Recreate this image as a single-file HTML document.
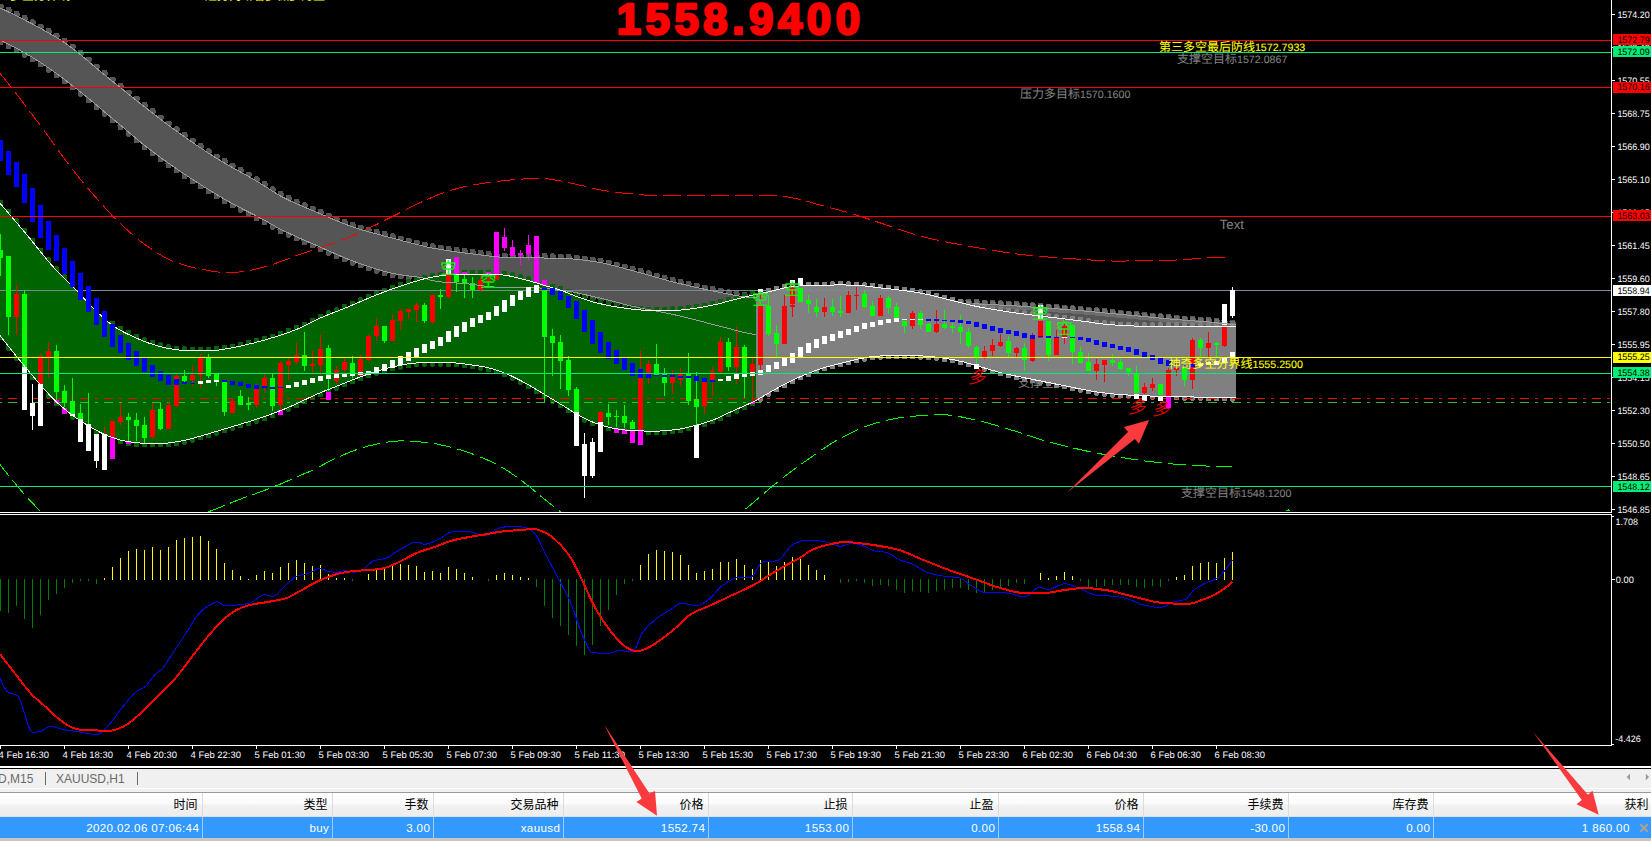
<!DOCTYPE html>
<html lang="zh"><head><meta charset="utf-8"><title>XAUUSD,M15</title>
<style>
html,body{margin:0;padding:0;background:#000;overflow:hidden;}
#root{position:relative;width:1651px;height:841px;overflow:hidden;background:#000;font-family:"Liberation Sans","Noto Sans CJK SC",sans-serif;}
svg.chart{position:absolute;left:0;top:0;display:block}
#tabs{position:absolute;left:0;top:769px;width:1651px;height:24px;background:#f0f0f0;border-bottom:1px solid #999;box-sizing:border-box;}
#tabs .hl{position:absolute;left:0;right:0;top:19px;height:1px;background:#fff}
#tabs span{position:absolute;top:2.5px;font-size:12px;color:#6a6a6a;white-space:nowrap;line-height:14px}
#tabs i{position:absolute;top:3px;width:1px;height:13px;background:#6a6a6a}
#hdr{position:absolute;left:0;top:793px;width:1651px;height:24px;box-sizing:border-box;border-bottom:1px solid #e0e0e0;background:linear-gradient(#ffffff 0%,#fbfbfb 45%,#f1f1f1 55%,#ededed 100%);}
.hc{position:absolute;top:0;height:23px;box-sizing:border-box;border-right:1px solid #dcdcdc;text-align:right;font-size:12px;line-height:24px;color:#000;padding-right:4.5px;white-space:nowrap}
.hc.last{border-right:none;padding-right:2.6px}
#row{position:absolute;left:0;top:817px;width:1651px;height:21px;background:#3399ff;}
.rc{position:absolute;top:0;height:21px;box-sizing:border-box;border-right:1px solid #9cccff;text-align:right;font-size:11.6px;letter-spacing:0.35px;line-height:21.5px;color:#fff;white-space:nowrap}
.rc.last{border-right:none}
#foot{position:absolute;left:0;top:838px;width:1651px;height:3px;background:#c9c6bd}
#arr{position:absolute;left:0;top:0;pointer-events:none}
</style></head><body>
<div id="root">
<svg class="chart" width="1651" height="769" viewBox="0 0 1651 769" shape-rendering="crispEdges">
<defs>
<clipPath id="cm"><rect x="0" y="0" width="1611" height="512"/></clipPath>
<clipPath id="ci"><rect x="0" y="515" width="1611" height="230"/></clipPath>
</defs>
<rect x="0" y="0" width="1651" height="769" fill="#000"/>
<g clip-path="url(#cm)">
<polygon points="0.0,8.0 2.0,8.9 4.0,9.8 6.0,10.8 8.0,11.7 10.0,12.7 12.0,13.6 14.0,14.6 16.0,15.6 18.0,16.6 20.0,17.6 22.0,18.6 24.0,19.6 26.0,20.7 28.0,21.7 30.0,22.8 32.0,23.8 34.0,24.9 36.0,25.9 38.0,27.0 40.0,28.1 42.0,29.2 44.0,30.3 46.0,31.4 48.0,32.5 50.0,33.7 52.0,34.8 54.0,36.0 56.0,37.2 58.0,38.5 60.0,39.7 62.0,41.0 64.0,42.3 66.0,43.7 68.0,45.1 70.0,46.5 72.0,48.0 74.0,49.6 76.0,51.1 78.0,52.7 80.0,54.4 82.0,56.0 84.0,57.7 86.0,59.4 88.0,61.1 90.0,62.8 92.0,64.5 94.0,66.2 96.0,67.8 98.0,69.5 100.0,71.2 102.0,72.8 104.0,74.4 106.0,76.0 108.0,77.7 110.0,79.3 112.0,80.9 114.0,82.5 116.0,84.1 118.0,85.7 120.0,87.3 122.0,88.9 124.0,90.5 126.0,92.2 128.0,93.8 130.0,95.4 132.0,96.9 134.0,98.5 136.0,100.1 138.0,101.7 140.0,103.3 142.0,104.8 144.0,106.4 146.0,108.0 148.0,109.5 150.0,111.1 152.0,112.6 154.0,114.2 156.0,115.7 158.0,117.3 160.0,118.8 162.0,120.3 164.0,121.9 166.0,123.4 168.0,124.9 170.0,126.3 172.0,127.8 174.0,129.3 176.0,130.7 178.0,132.2 180.0,133.6 182.0,135.0 184.0,136.4 186.0,137.9 188.0,139.3 190.0,140.7 192.0,142.0 194.0,143.4 196.0,144.8 198.0,146.1 200.0,147.5 202.0,148.8 204.0,150.2 206.0,151.5 208.0,152.8 210.0,154.1 212.0,155.4 214.0,156.6 216.0,157.9 218.0,159.1 220.0,160.3 222.0,161.5 224.0,162.7 226.0,163.9 228.0,165.0 230.0,166.2 232.0,167.3 234.0,168.4 236.0,169.5 238.0,170.6 240.0,171.7 242.0,172.8 244.0,173.9 246.0,175.0 248.0,176.1 250.0,177.3 252.0,178.4 254.0,179.6 256.0,180.8 258.0,182.0 260.0,183.2 262.0,184.4 264.0,185.7 266.0,186.9 268.0,188.2 270.0,189.5 272.0,190.8 274.0,192.1 276.0,193.4 278.0,194.6 280.0,195.7 282.0,196.8 284.0,197.8 286.0,198.8 288.0,199.8 290.0,200.7 292.0,201.7 294.0,202.6 296.0,203.5 298.0,204.4 300.0,205.2 302.0,206.1 304.0,206.9 306.0,207.8 308.0,208.6 310.0,209.5 312.0,210.3 314.0,211.1 316.0,212.0 318.0,212.8 320.0,213.6 322.0,214.5 324.0,215.4 326.0,216.2 328.0,217.1 330.0,217.9 332.0,218.8 334.0,219.6 336.0,220.4 338.0,221.2 340.0,222.1 342.0,222.9 344.0,223.6 346.0,224.4 348.0,225.2 350.0,225.9 352.0,226.6 354.0,227.3 356.0,228.0 358.0,228.6 360.0,229.2 362.0,229.9 364.0,230.4 366.0,231.0 368.0,231.6 370.0,232.2 372.0,232.7 374.0,233.3 376.0,233.8 378.0,234.3 380.0,234.8 382.0,235.4 384.0,235.9 386.0,236.4 388.0,236.9 390.0,237.4 392.0,238.0 394.0,238.5 396.0,239.0 398.0,239.5 400.0,240.1 402.0,240.6 404.0,241.2 406.0,241.7 408.0,242.2 410.0,242.8 412.0,243.3 414.0,243.8 416.0,244.3 418.0,244.8 420.0,245.3 422.0,245.8 424.0,246.3 426.0,246.7 428.0,247.2 430.0,247.6 432.0,248.0 434.0,248.3 436.0,248.7 438.0,249.0 440.0,249.4 442.0,249.7 444.0,250.1 446.0,250.4 448.0,250.7 450.0,251.0 452.0,251.3 454.0,251.6 456.0,251.9 458.0,252.1 460.0,252.4 462.0,252.7 464.0,252.9 466.0,253.2 468.0,253.4 470.0,253.7 472.0,253.9 474.0,254.2 476.0,254.4 478.0,254.7 480.0,254.9 482.0,255.2 484.0,255.4 486.0,255.7 488.0,255.9 490.0,256.1 492.0,256.4 494.0,256.6 496.0,256.8 498.0,256.9 500.0,257.1 502.0,257.2 504.0,257.3 506.0,257.4 508.0,257.5 510.0,257.5 512.0,257.6 514.0,257.6 516.0,257.6 518.0,257.7 520.0,257.7 522.0,257.7 524.0,257.7 526.0,257.8 528.0,257.8 530.0,257.8 532.0,257.8 534.0,257.8 536.0,257.8 538.0,257.9 540.0,257.9 542.0,257.9 544.0,258.0 546.0,258.0 548.0,258.0 550.0,258.1 552.0,258.1 554.0,258.2 556.0,258.2 558.0,258.3 560.0,258.4 562.0,258.4 564.0,258.5 566.0,258.6 568.0,258.7 570.0,258.8 572.0,258.9 574.0,259.1 576.0,259.2 578.0,259.4 580.0,259.6 582.0,259.9 584.0,260.1 586.0,260.4 588.0,260.7 590.0,261.0 592.0,261.3 594.0,261.6 596.0,261.9 598.0,262.2 600.0,262.5 602.0,262.9 604.0,263.3 606.0,263.7 608.0,264.2 610.0,264.7 612.0,265.2 614.0,265.7 616.0,266.2 618.0,266.7 620.0,267.3 622.0,267.8 624.0,268.4 626.0,268.9 628.0,269.5 630.0,270.1 632.0,270.6 634.0,271.1 636.0,271.7 638.0,272.2 640.0,272.7 642.0,273.3 644.0,273.8 646.0,274.4 648.0,275.0 650.0,275.6 652.0,276.1 654.0,276.7 656.0,277.3 658.0,277.8 660.0,278.4 662.0,279.0 664.0,279.5 666.0,280.1 668.0,280.6 670.0,281.2 672.0,281.7 674.0,282.2 676.0,282.7 678.0,283.2 680.0,283.7 682.0,284.1 684.0,284.6 686.0,285.1 688.0,285.6 690.0,286.0 692.0,286.5 694.0,286.9 696.0,287.4 698.0,287.8 700.0,288.3 702.0,288.7 704.0,289.1 706.0,289.5 708.0,290.0 710.0,290.4 712.0,290.8 714.0,291.2 716.0,291.6 718.0,292.0 720.0,292.4 722.0,292.8 724.0,293.2 726.0,293.6 728.0,294.0 730.0,294.4 732.0,294.8 734.0,295.2 736.0,295.5 738.0,295.9 740.0,296.2 742.0,296.5 744.0,296.7 746.0,297.0 748.0,297.2 750.0,297.4 752.0,297.5 754.0,297.7 756.0,297.9 758.0,298.0 760.0,298.1 762.0,298.3 764.0,298.4 766.0,298.5 768.0,298.6 770.0,298.8 772.0,298.9 774.0,299.0 776.0,299.1 778.0,299.2 780.0,299.3 782.0,299.3 784.0,299.4 786.0,299.5 788.0,299.6 790.0,299.7 792.0,299.7 794.0,299.8 796.0,299.9 798.0,299.9 800.0,300.0 802.0,300.1 804.0,300.1 806.0,300.2 808.0,300.2 810.0,300.3 812.0,300.3 814.0,300.4 816.0,300.4 818.0,300.5 820.0,300.5 822.0,300.6 824.0,300.6 826.0,300.7 828.0,300.7 830.0,300.7 832.0,300.8 834.0,300.8 836.0,300.9 838.0,300.9 840.0,300.9 842.0,301.0 844.0,301.0 846.0,301.0 848.0,301.1 850.0,301.1 852.0,301.1 854.0,301.2 856.0,301.2 858.0,301.2 860.0,301.3 862.0,301.3 864.0,301.3 866.0,301.4 868.0,301.4 870.0,301.4 872.0,301.5 874.0,301.5 876.0,301.5 878.0,301.6 880.0,301.6 882.0,301.6 884.0,301.7 886.0,301.7 888.0,301.8 890.0,301.8 892.0,301.8 894.0,301.9 896.0,301.9 898.0,302.0 900.0,302.0 902.0,302.0 904.0,302.1 906.0,302.1 908.0,302.2 910.0,302.2 912.0,302.3 914.0,302.3 916.0,302.3 918.0,302.4 920.0,302.4 922.0,302.5 924.0,302.5 926.0,302.6 928.0,302.6 930.0,302.6 932.0,302.7 934.0,302.7 936.0,302.8 938.0,302.8 940.0,302.9 942.0,302.9 944.0,303.0 946.0,303.0 948.0,303.1 950.0,303.1 952.0,303.2 954.0,303.2 956.0,303.3 958.0,303.3 960.0,303.4 962.0,303.4 964.0,303.5 966.0,303.6 968.0,303.6 970.0,303.7 972.0,303.8 974.0,303.8 976.0,303.9 978.0,304.0 980.0,304.1 982.0,304.1 984.0,304.2 986.0,304.3 988.0,304.4 990.0,304.5 992.0,304.6 994.0,304.7 996.0,304.8 998.0,304.9 1000.0,305.1 1002.0,305.2 1004.0,305.3 1006.0,305.4 1008.0,305.5 1010.0,305.6 1012.0,305.7 1014.0,305.9 1016.0,306.0 1018.0,306.1 1020.0,306.2 1022.0,306.4 1024.0,306.5 1026.0,306.6 1028.0,306.8 1030.0,306.9 1032.0,307.1 1034.0,307.2 1036.0,307.3 1038.0,307.5 1040.0,307.6 1042.0,307.8 1044.0,307.9 1046.0,308.1 1048.0,308.2 1050.0,308.4 1052.0,308.5 1054.0,308.7 1056.0,308.8 1058.0,309.0 1060.0,309.1 1062.0,309.3 1064.0,309.4 1066.0,309.6 1068.0,309.7 1070.0,309.9 1072.0,310.0 1074.0,310.2 1076.0,310.4 1078.0,310.5 1080.0,310.7 1082.0,310.8 1084.0,311.0 1086.0,311.2 1088.0,311.4 1090.0,311.5 1092.0,311.7 1094.0,311.9 1096.0,312.1 1098.0,312.3 1100.0,312.5 1102.0,312.7 1104.0,312.9 1106.0,313.1 1108.0,313.3 1110.0,313.4 1112.0,313.6 1114.0,313.8 1116.0,314.0 1118.0,314.2 1120.0,314.4 1122.0,314.6 1124.0,314.8 1126.0,314.9 1128.0,315.1 1130.0,315.3 1132.0,315.5 1134.0,315.6 1136.0,315.8 1138.0,316.0 1140.0,316.2 1142.0,316.4 1144.0,316.6 1146.0,316.7 1148.0,316.9 1150.0,317.1 1152.0,317.3 1154.0,317.5 1156.0,317.7 1158.0,317.9 1160.0,318.1 1162.0,318.2 1164.0,318.4 1166.0,318.6 1168.0,318.8 1170.0,319.0 1172.0,319.2 1174.0,319.3 1176.0,319.5 1178.0,319.7 1180.0,319.8 1182.0,320.0 1184.0,320.1 1186.0,320.3 1188.0,320.4 1190.0,320.6 1192.0,320.7 1194.0,320.9 1196.0,321.0 1198.0,321.2 1200.0,321.3 1202.0,321.5 1204.0,321.6 1206.0,321.8 1208.0,322.0 1210.0,322.1 1212.0,322.3 1214.0,322.5 1216.0,322.7 1218.0,322.9 1220.0,323.1 1222.0,323.3 1224.0,323.5 1226.0,323.8 1228.0,324.0 1230.0,324.3 1232.0,324.5 1234.0,324.7 1236.0,325.0 1236.0,356.0 1234.0,356.0 1232.0,355.9 1230.0,355.9 1228.0,355.8 1226.0,355.8 1224.0,355.7 1222.0,355.7 1220.0,355.6 1218.0,355.6 1216.0,355.5 1214.0,355.5 1212.0,355.4 1210.0,355.4 1208.0,355.3 1206.0,355.3 1204.0,355.2 1202.0,355.1 1200.0,355.1 1198.0,355.0 1196.0,355.0 1194.0,354.9 1192.0,354.9 1190.0,354.8 1188.0,354.8 1186.0,354.7 1184.0,354.6 1182.0,354.6 1180.0,354.5 1178.0,354.5 1176.0,354.4 1174.0,354.4 1172.0,354.3 1170.0,354.2 1168.0,354.2 1166.0,354.1 1164.0,354.1 1162.0,354.0 1160.0,353.9 1158.0,353.9 1156.0,353.8 1154.0,353.8 1152.0,353.7 1150.0,353.6 1148.0,353.6 1146.0,353.5 1144.0,353.4 1142.0,353.4 1140.0,353.3 1138.0,353.3 1136.0,353.2 1134.0,353.1 1132.0,353.1 1130.0,353.0 1128.0,352.9 1126.0,352.9 1124.0,352.8 1122.0,352.7 1120.0,352.7 1118.0,352.6 1116.0,352.5 1114.0,352.5 1112.0,352.4 1110.0,352.3 1108.0,352.3 1106.0,352.2 1104.0,352.1 1102.0,352.1 1100.0,352.0 1098.0,351.9 1096.0,351.9 1094.0,351.8 1092.0,351.7 1090.0,351.6 1088.0,351.6 1086.0,351.5 1084.0,351.4 1082.0,351.3 1080.0,351.3 1078.0,351.2 1076.0,351.1 1074.0,351.0 1072.0,350.9 1070.0,350.8 1068.0,350.8 1066.0,350.7 1064.0,350.6 1062.0,350.5 1060.0,350.4 1058.0,350.3 1056.0,350.3 1054.0,350.2 1052.0,350.1 1050.0,350.0 1048.0,349.9 1046.0,349.8 1044.0,349.7 1042.0,349.7 1040.0,349.6 1038.0,349.5 1036.0,349.4 1034.0,349.3 1032.0,349.2 1030.0,349.2 1028.0,349.1 1026.0,349.0 1024.0,348.9 1022.0,348.8 1020.0,348.7 1018.0,348.7 1016.0,348.6 1014.0,348.5 1012.0,348.4 1010.0,348.4 1008.0,348.3 1006.0,348.2 1004.0,348.1 1002.0,348.1 1000.0,348.0 998.0,347.9 996.0,347.9 994.0,347.8 992.0,347.7 990.0,347.7 988.0,347.6 986.0,347.5 984.0,347.5 982.0,347.4 980.0,347.4 978.0,347.3 976.0,347.3 974.0,347.2 972.0,347.1 970.0,347.1 968.0,347.0 966.0,347.0 964.0,346.9 962.0,346.9 960.0,346.8 958.0,346.8 956.0,346.7 954.0,346.6 952.0,346.6 950.0,346.5 948.0,346.5 946.0,346.4 944.0,346.4 942.0,346.3 940.0,346.3 938.0,346.2 936.0,346.2 934.0,346.1 932.0,346.0 930.0,346.0 928.0,345.9 926.0,345.9 924.0,345.8 922.0,345.7 920.0,345.7 918.0,345.6 916.0,345.6 914.0,345.5 912.0,345.4 910.0,345.4 908.0,345.3 906.0,345.2 904.0,345.1 902.0,345.1 900.0,345.0 898.0,344.9 896.0,344.8 894.0,344.8 892.0,344.7 890.0,344.6 888.0,344.5 886.0,344.5 884.0,344.4 882.0,344.3 880.0,344.2 878.0,344.2 876.0,344.1 874.0,344.0 872.0,343.9 870.0,343.8 868.0,343.8 866.0,343.7 864.0,343.6 862.0,343.5 860.0,343.4 858.0,343.3 856.0,343.2 854.0,343.1 852.0,343.1 850.0,343.0 848.0,342.9 846.0,342.8 844.0,342.7 842.0,342.6 840.0,342.5 838.0,342.4 836.0,342.3 834.0,342.2 832.0,342.1 830.0,341.9 828.0,341.8 826.0,341.7 824.0,341.6 822.0,341.5 820.0,341.4 818.0,341.2 816.0,341.1 814.0,341.0 812.0,340.8 810.0,340.7 808.0,340.6 806.0,340.4 804.0,340.3 802.0,340.1 800.0,340.0 798.0,339.8 796.0,339.7 794.0,339.5 792.0,339.3 790.0,339.1 788.0,338.9 786.0,338.7 784.0,338.5 782.0,338.3 780.0,338.1 778.0,337.8 776.0,337.6 774.0,337.3 772.0,337.1 770.0,336.8 768.0,336.5 766.0,336.2 764.0,335.9 762.0,335.6 760.0,335.3 758.0,335.0 756.0,334.7 754.0,334.4 752.0,334.0 750.0,333.6 748.0,333.2 746.0,332.8 744.0,332.4 742.0,331.9 740.0,331.4 738.0,330.9 736.0,330.4 734.0,329.9 732.0,329.4 730.0,328.8 728.0,328.3 726.0,327.8 724.0,327.2 722.0,326.7 720.0,326.2 718.0,325.7 716.0,325.2 714.0,324.6 712.0,324.2 710.0,323.7 708.0,323.2 706.0,322.7 704.0,322.1 702.0,321.6 700.0,321.1 698.0,320.6 696.0,320.1 694.0,319.6 692.0,319.0 690.0,318.5 688.0,318.0 686.0,317.5 684.0,317.0 682.0,316.5 680.0,316.1 678.0,315.6 676.0,315.1 674.0,314.7 672.0,314.2 670.0,313.8 668.0,313.4 666.0,313.0 664.0,312.6 662.0,312.2 660.0,311.8 658.0,311.4 656.0,311.1 654.0,310.7 652.0,310.3 650.0,309.9 648.0,309.5 646.0,309.2 644.0,308.8 642.0,308.4 640.0,307.9 638.0,307.5 636.0,307.1 634.0,306.6 632.0,306.2 630.0,305.7 628.0,305.2 626.0,304.7 624.0,304.2 622.0,303.6 620.0,303.1 618.0,302.6 616.0,302.1 614.0,301.5 612.0,301.0 610.0,300.5 608.0,300.0 606.0,299.5 604.0,299.0 602.0,298.5 600.0,298.1 598.0,297.6 596.0,297.2 594.0,296.7 592.0,296.2 590.0,295.8 588.0,295.3 586.0,294.9 584.0,294.4 582.0,294.0 580.0,293.5 578.0,293.1 576.0,292.7 574.0,292.3 572.0,291.9 570.0,291.5 568.0,291.2 566.0,290.8 564.0,290.5 562.0,290.2 560.0,290.0 558.0,289.8 556.0,289.5 554.0,289.3 552.0,289.1 550.0,288.9 548.0,288.7 546.0,288.5 544.0,288.3 542.0,288.2 540.0,288.0 538.0,287.9 536.0,287.7 534.0,287.6 532.0,287.6 530.0,287.5 528.0,287.5 526.0,287.4 524.0,287.4 522.0,287.4 520.0,287.3 518.0,287.3 516.0,287.3 514.0,287.3 512.0,287.3 510.0,287.2 508.0,287.2 506.0,287.2 504.0,287.2 502.0,287.1 500.0,287.1 498.0,287.1 496.0,287.0 494.0,287.0 492.0,286.9 490.0,286.7 488.0,286.5 486.0,286.2 484.0,286.0 482.0,285.7 480.0,285.4 478.0,285.1 476.0,284.8 474.0,284.5 472.0,284.3 470.0,284.1 468.0,283.9 466.0,283.7 464.0,283.6 462.0,283.4 460.0,283.3 458.0,283.2 456.0,283.0 454.0,282.9 452.0,282.8 450.0,282.7 448.0,282.5 446.0,282.4 444.0,282.2 442.0,282.0 440.0,281.8 438.0,281.6 436.0,281.3 434.0,280.9 432.0,280.4 430.0,279.9 428.0,279.3 426.0,278.7 424.0,278.3 422.0,277.9 420.0,277.6 418.0,277.2 416.0,276.9 414.0,276.6 412.0,276.4 410.0,276.1 408.0,275.8 406.0,275.6 404.0,275.3 402.0,275.0 400.0,274.7 398.0,274.3 396.0,274.0 394.0,273.6 392.0,273.2 390.0,272.7 388.0,272.2 386.0,271.7 384.0,271.2 382.0,270.6 380.0,270.1 378.0,269.5 376.0,268.9 374.0,268.3 372.0,267.6 370.0,267.0 368.0,266.3 366.0,265.6 364.0,264.9 362.0,264.3 360.0,263.6 358.0,262.9 356.0,262.2 354.0,261.4 352.0,260.7 350.0,259.9 348.0,259.2 346.0,258.4 344.0,257.5 342.0,256.7 340.0,255.8 338.0,255.0 336.0,254.1 334.0,253.2 332.0,252.3 330.0,251.4 328.0,250.5 326.0,249.6 324.0,248.8 322.0,247.9 320.0,247.0 318.0,246.1 316.0,245.2 314.0,244.4 312.0,243.5 310.0,242.6 308.0,241.8 306.0,240.9 304.0,240.0 302.0,239.2 300.0,238.3 298.0,237.4 296.0,236.5 294.0,235.6 292.0,234.7 290.0,233.7 288.0,232.8 286.0,231.9 284.0,230.9 282.0,229.9 280.0,228.9 278.0,227.9 276.0,226.8 274.0,225.6 272.0,224.5 270.0,223.4 268.0,222.2 266.0,221.1 264.0,220.1 262.0,219.0 260.0,217.9 258.0,216.9 256.0,215.9 254.0,214.8 252.0,213.8 250.0,212.8 248.0,211.8 246.0,210.7 244.0,209.7 242.0,208.7 240.0,207.6 238.0,206.6 236.0,205.5 234.0,204.5 232.0,203.4 230.0,202.3 228.0,201.1 226.0,200.0 224.0,198.8 222.0,197.7 220.0,196.5 218.0,195.3 216.0,194.1 214.0,192.9 212.0,191.7 210.0,190.5 208.0,189.2 206.0,188.0 204.0,186.8 202.0,185.5 200.0,184.2 198.0,182.9 196.0,181.7 194.0,180.4 192.0,179.1 190.0,177.8 188.0,176.5 186.0,175.1 184.0,173.8 182.0,172.5 180.0,171.1 178.0,169.8 176.0,168.4 174.0,167.0 172.0,165.6 170.0,164.2 168.0,162.8 166.0,161.4 164.0,160.0 162.0,158.6 160.0,157.1 158.0,155.6 156.0,154.2 154.0,152.7 152.0,151.1 150.0,149.6 148.0,148.1 146.0,146.5 144.0,144.9 142.0,143.3 140.0,141.6 138.0,140.0 136.0,138.3 134.0,136.6 132.0,135.0 130.0,133.3 128.0,131.6 126.0,129.9 124.0,128.2 122.0,126.5 120.0,124.8 118.0,123.1 116.0,121.5 114.0,119.8 112.0,118.2 110.0,116.5 108.0,114.8 106.0,113.1 104.0,111.5 102.0,109.8 100.0,108.1 98.0,106.4 96.0,104.7 94.0,103.0 92.0,101.4 90.0,99.7 88.0,98.0 86.0,96.4 84.0,94.8 82.0,93.1 80.0,91.6 78.0,90.0 76.0,88.4 74.0,86.9 72.0,85.3 70.0,83.8 68.0,82.3 66.0,80.7 64.0,79.2 62.0,77.7 60.0,76.2 58.0,74.7 56.0,73.2 54.0,71.8 52.0,70.3 50.0,68.9 48.0,67.5 46.0,66.1 44.0,64.8 42.0,63.5 40.0,62.2 38.0,60.9 36.0,59.7 34.0,58.4 32.0,57.2 30.0,56.0 28.0,54.8 26.0,53.7 24.0,52.5 22.0,51.4 20.0,50.2 18.0,49.1 16.0,48.0 14.0,47.0 12.0,45.9 10.0,44.9 8.0,43.9 6.0,42.9 4.0,41.9 2.0,40.9 0.0,40.0" fill="#555555"/><rect x="-2.5" y="3.5" width="6.0" height="6.0" rx="1.6" fill="#555555"/><rect x="5.5" y="7.2" width="6.0" height="6.0" rx="1.6" fill="#555555"/><rect x="13.5" y="11.1" width="6.0" height="6.0" rx="1.6" fill="#555555"/><rect x="21.5" y="15.2" width="6.0" height="6.0" rx="1.6" fill="#555555"/><rect x="29.5" y="19.4" width="6.0" height="6.0" rx="1.6" fill="#555555"/><rect x="37.5" y="23.7" width="6.0" height="6.0" rx="1.6" fill="#555555"/><rect x="45.5" y="28.1" width="6.0" height="6.0" rx="1.6" fill="#555555"/><rect x="53.5" y="32.9" width="6.0" height="6.0" rx="1.6" fill="#555555"/><rect x="61.5" y="38.0" width="6.0" height="6.0" rx="1.6" fill="#555555"/><rect x="69.5" y="43.7" width="6.0" height="6.0" rx="1.6" fill="#555555"/><rect x="77.5" y="50.1" width="6.0" height="6.0" rx="1.6" fill="#555555"/><rect x="85.5" y="56.8" width="6.0" height="6.0" rx="1.6" fill="#555555"/><rect x="93.5" y="63.6" width="6.0" height="6.0" rx="1.6" fill="#555555"/><rect x="101.5" y="70.1" width="6.0" height="6.0" rx="1.6" fill="#555555"/><rect x="109.5" y="76.6" width="6.0" height="6.0" rx="1.6" fill="#555555"/><rect x="117.5" y="83.0" width="6.0" height="6.0" rx="1.6" fill="#555555"/><rect x="125.5" y="89.5" width="6.0" height="6.0" rx="1.6" fill="#555555"/><rect x="133.5" y="95.8" width="6.0" height="6.0" rx="1.6" fill="#555555"/><rect x="141.5" y="102.1" width="6.0" height="6.0" rx="1.6" fill="#555555"/><rect x="149.5" y="108.3" width="6.0" height="6.0" rx="1.6" fill="#555555"/><rect x="157.5" y="114.5" width="6.0" height="6.0" rx="1.6" fill="#555555"/><rect x="165.5" y="120.5" width="6.0" height="6.0" rx="1.6" fill="#555555"/><rect x="173.5" y="126.4" width="6.0" height="6.0" rx="1.6" fill="#555555"/><rect x="181.5" y="132.1" width="6.0" height="6.0" rx="1.6" fill="#555555"/><rect x="189.5" y="137.7" width="6.0" height="6.0" rx="1.6" fill="#555555"/><rect x="197.5" y="143.1" width="6.0" height="6.0" rx="1.6" fill="#555555"/><rect x="205.5" y="148.4" width="6.0" height="6.0" rx="1.6" fill="#555555"/><rect x="213.5" y="153.5" width="6.0" height="6.0" rx="1.6" fill="#555555"/><rect x="221.5" y="158.3" width="6.0" height="6.0" rx="1.6" fill="#555555"/><rect x="229.5" y="162.9" width="6.0" height="6.0" rx="1.6" fill="#555555"/><rect x="237.5" y="167.3" width="6.0" height="6.0" rx="1.6" fill="#555555"/><rect x="245.5" y="171.7" width="6.0" height="6.0" rx="1.6" fill="#555555"/><rect x="253.5" y="176.4" width="6.0" height="6.0" rx="1.6" fill="#555555"/><rect x="261.5" y="181.3" width="6.0" height="6.0" rx="1.6" fill="#555555"/><rect x="269.5" y="186.4" width="6.0" height="6.0" rx="1.6" fill="#555555"/><rect x="277.5" y="191.3" width="6.0" height="6.0" rx="1.6" fill="#555555"/><rect x="285.5" y="195.3" width="6.0" height="6.0" rx="1.6" fill="#555555"/><rect x="293.5" y="199.0" width="6.0" height="6.0" rx="1.6" fill="#555555"/><rect x="301.5" y="202.4" width="6.0" height="6.0" rx="1.6" fill="#555555"/><rect x="309.5" y="205.8" width="6.0" height="6.0" rx="1.6" fill="#555555"/><rect x="317.5" y="209.2" width="6.0" height="6.0" rx="1.6" fill="#555555"/><rect x="325.5" y="212.6" width="6.0" height="6.0" rx="1.6" fill="#555555"/><rect x="333.5" y="215.9" width="6.0" height="6.0" rx="1.6" fill="#555555"/><rect x="341.5" y="219.1" width="6.0" height="6.0" rx="1.6" fill="#555555"/><rect x="349.5" y="222.1" width="6.0" height="6.0" rx="1.6" fill="#555555"/><rect x="357.5" y="224.7" width="6.0" height="6.0" rx="1.6" fill="#555555"/><rect x="365.5" y="227.0" width="6.0" height="6.0" rx="1.6" fill="#555555"/><rect x="373.5" y="229.2" width="6.0" height="6.0" rx="1.6" fill="#555555"/><rect x="381.5" y="231.3" width="6.0" height="6.0" rx="1.6" fill="#555555"/><rect x="389.5" y="233.4" width="6.0" height="6.0" rx="1.6" fill="#555555"/><rect x="397.5" y="235.5" width="6.0" height="6.0" rx="1.6" fill="#555555"/><rect x="405.5" y="237.7" width="6.0" height="6.0" rx="1.6" fill="#555555"/><rect x="413.5" y="239.8" width="6.0" height="6.0" rx="1.6" fill="#555555"/><rect x="421.5" y="241.7" width="6.0" height="6.0" rx="1.6" fill="#555555"/><rect x="429.5" y="243.4" width="6.0" height="6.0" rx="1.6" fill="#555555"/><rect x="437.5" y="244.8" width="6.0" height="6.0" rx="1.6" fill="#555555"/><rect x="445.5" y="246.1" width="6.0" height="6.0" rx="1.6" fill="#555555"/><rect x="453.5" y="247.2" width="6.0" height="6.0" rx="1.6" fill="#555555"/><rect x="461.5" y="248.3" width="6.0" height="6.0" rx="1.6" fill="#555555"/><rect x="469.5" y="249.3" width="6.0" height="6.0" rx="1.6" fill="#555555"/><rect x="477.5" y="250.3" width="6.0" height="6.0" rx="1.6" fill="#555555"/><rect x="485.5" y="251.3" width="6.0" height="6.0" rx="1.6" fill="#555555"/><rect x="493.5" y="252.1" width="6.0" height="6.0" rx="1.6" fill="#555555"/><rect x="501.5" y="252.7" width="6.0" height="6.0" rx="1.6" fill="#555555"/><rect x="509.5" y="252.9" width="6.0" height="6.0" rx="1.6" fill="#555555"/><rect x="517.5" y="253.0" width="6.0" height="6.0" rx="1.6" fill="#555555"/><rect x="525.5" y="253.1" width="6.0" height="6.0" rx="1.6" fill="#555555"/><rect x="533.5" y="253.2" width="6.0" height="6.0" rx="1.6" fill="#555555"/><rect x="541.5" y="253.3" width="6.0" height="6.0" rx="1.6" fill="#555555"/><rect x="549.5" y="253.4" width="6.0" height="6.0" rx="1.6" fill="#555555"/><rect x="557.5" y="253.7" width="6.0" height="6.0" rx="1.6" fill="#555555"/><rect x="565.5" y="254.0" width="6.0" height="6.0" rx="1.6" fill="#555555"/><rect x="573.5" y="254.6" width="6.0" height="6.0" rx="1.6" fill="#555555"/><rect x="581.5" y="255.5" width="6.0" height="6.0" rx="1.6" fill="#555555"/><rect x="589.5" y="256.6" width="6.0" height="6.0" rx="1.6" fill="#555555"/><rect x="597.5" y="257.9" width="6.0" height="6.0" rx="1.6" fill="#555555"/><rect x="605.5" y="259.6" width="6.0" height="6.0" rx="1.6" fill="#555555"/><rect x="613.5" y="261.6" width="6.0" height="6.0" rx="1.6" fill="#555555"/><rect x="621.5" y="263.8" width="6.0" height="6.0" rx="1.6" fill="#555555"/><rect x="629.5" y="266.0" width="6.0" height="6.0" rx="1.6" fill="#555555"/><rect x="637.5" y="268.2" width="6.0" height="6.0" rx="1.6" fill="#555555"/><rect x="645.5" y="270.4" width="6.0" height="6.0" rx="1.6" fill="#555555"/><rect x="653.5" y="272.7" width="6.0" height="6.0" rx="1.6" fill="#555555"/><rect x="661.5" y="275.0" width="6.0" height="6.0" rx="1.6" fill="#555555"/><rect x="669.5" y="277.1" width="6.0" height="6.0" rx="1.6" fill="#555555"/><rect x="677.5" y="279.1" width="6.0" height="6.0" rx="1.6" fill="#555555"/><rect x="685.5" y="281.0" width="6.0" height="6.0" rx="1.6" fill="#555555"/><rect x="693.5" y="282.8" width="6.0" height="6.0" rx="1.6" fill="#555555"/><rect x="701.5" y="284.5" width="6.0" height="6.0" rx="1.6" fill="#555555"/><rect x="709.5" y="286.2" width="6.0" height="6.0" rx="1.6" fill="#555555"/><rect x="717.5" y="287.8" width="6.0" height="6.0" rx="1.6" fill="#555555"/><rect x="725.5" y="289.4" width="6.0" height="6.0" rx="1.6" fill="#555555"/><rect x="733.5" y="290.9" width="6.0" height="6.0" rx="1.6" fill="#555555"/><rect x="741.5" y="292.1" width="6.0" height="6.0" rx="1.6" fill="#555555"/><rect x="749.5" y="292.9" width="6.0" height="6.0" rx="1.6" fill="#555555"/><rect x="757.5" y="293.5" width="6.0" height="6.0" rx="1.6" fill="#555555"/><rect x="765.5" y="294.0" width="6.0" height="6.0" rx="1.6" fill="#555555"/><rect x="773.5" y="294.4" width="6.0" height="6.0" rx="1.6" fill="#555555"/><rect x="781.5" y="294.8" width="6.0" height="6.0" rx="1.6" fill="#555555"/><rect x="789.5" y="295.1" width="6.0" height="6.0" rx="1.6" fill="#555555"/><rect x="797.5" y="295.3" width="6.0" height="6.0" rx="1.6" fill="#555555"/><rect x="805.5" y="295.5" width="6.0" height="6.0" rx="1.6" fill="#555555"/><rect x="813.5" y="295.7" width="6.0" height="6.0" rx="1.6" fill="#555555"/><rect x="821.5" y="295.9" width="6.0" height="6.0" rx="1.6" fill="#555555"/><rect x="829.5" y="296.1" width="6.0" height="6.0" rx="1.6" fill="#555555"/><rect x="837.5" y="296.2" width="6.0" height="6.0" rx="1.6" fill="#555555"/><rect x="845.5" y="296.4" width="6.0" height="6.0" rx="1.6" fill="#555555"/><rect x="853.5" y="296.5" width="6.0" height="6.0" rx="1.6" fill="#555555"/><rect x="861.5" y="296.6" width="6.0" height="6.0" rx="1.6" fill="#555555"/><rect x="869.5" y="296.8" width="6.0" height="6.0" rx="1.6" fill="#555555"/><rect x="877.5" y="296.9" width="6.0" height="6.0" rx="1.6" fill="#555555"/><rect x="885.5" y="297.1" width="6.0" height="6.0" rx="1.6" fill="#555555"/><rect x="893.5" y="297.2" width="6.0" height="6.0" rx="1.6" fill="#555555"/><rect x="901.5" y="297.4" width="6.0" height="6.0" rx="1.6" fill="#555555"/><rect x="909.5" y="297.6" width="6.0" height="6.0" rx="1.6" fill="#555555"/><rect x="917.5" y="297.7" width="6.0" height="6.0" rx="1.6" fill="#555555"/><rect x="925.5" y="297.9" width="6.0" height="6.0" rx="1.6" fill="#555555"/><rect x="933.5" y="298.1" width="6.0" height="6.0" rx="1.6" fill="#555555"/><rect x="941.5" y="298.3" width="6.0" height="6.0" rx="1.6" fill="#555555"/><rect x="949.5" y="298.5" width="6.0" height="6.0" rx="1.6" fill="#555555"/><rect x="957.5" y="298.7" width="6.0" height="6.0" rx="1.6" fill="#555555"/><rect x="965.5" y="298.9" width="6.0" height="6.0" rx="1.6" fill="#555555"/><rect x="973.5" y="299.2" width="6.0" height="6.0" rx="1.6" fill="#555555"/><rect x="981.5" y="299.6" width="6.0" height="6.0" rx="1.6" fill="#555555"/><rect x="989.5" y="300.0" width="6.0" height="6.0" rx="1.6" fill="#555555"/><rect x="997.5" y="300.4" width="6.0" height="6.0" rx="1.6" fill="#555555"/><rect x="1005.5" y="300.8" width="6.0" height="6.0" rx="1.6" fill="#555555"/><rect x="1013.5" y="301.3" width="6.0" height="6.0" rx="1.6" fill="#555555"/><rect x="1021.5" y="301.8" width="6.0" height="6.0" rx="1.6" fill="#555555"/><rect x="1029.5" y="302.4" width="6.0" height="6.0" rx="1.6" fill="#555555"/><rect x="1037.5" y="303.0" width="6.0" height="6.0" rx="1.6" fill="#555555"/><rect x="1045.5" y="303.5" width="6.0" height="6.0" rx="1.6" fill="#555555"/><rect x="1053.5" y="304.1" width="6.0" height="6.0" rx="1.6" fill="#555555"/><rect x="1061.5" y="304.7" width="6.0" height="6.0" rx="1.6" fill="#555555"/><rect x="1069.5" y="305.4" width="6.0" height="6.0" rx="1.6" fill="#555555"/><rect x="1077.5" y="306.0" width="6.0" height="6.0" rx="1.6" fill="#555555"/><rect x="1085.5" y="306.7" width="6.0" height="6.0" rx="1.6" fill="#555555"/><rect x="1093.5" y="307.4" width="6.0" height="6.0" rx="1.6" fill="#555555"/><rect x="1101.5" y="308.2" width="6.0" height="6.0" rx="1.6" fill="#555555"/><rect x="1109.5" y="309.0" width="6.0" height="6.0" rx="1.6" fill="#555555"/><rect x="1117.5" y="309.7" width="6.0" height="6.0" rx="1.6" fill="#555555"/><rect x="1125.5" y="310.5" width="6.0" height="6.0" rx="1.6" fill="#555555"/><rect x="1133.5" y="311.2" width="6.0" height="6.0" rx="1.6" fill="#555555"/><rect x="1141.5" y="311.9" width="6.0" height="6.0" rx="1.6" fill="#555555"/><rect x="1149.5" y="312.7" width="6.0" height="6.0" rx="1.6" fill="#555555"/><rect x="1157.5" y="313.4" width="6.0" height="6.0" rx="1.6" fill="#555555"/><rect x="1165.5" y="314.1" width="6.0" height="6.0" rx="1.6" fill="#555555"/><rect x="1173.5" y="314.8" width="6.0" height="6.0" rx="1.6" fill="#555555"/><rect x="1181.5" y="315.5" width="6.0" height="6.0" rx="1.6" fill="#555555"/><rect x="1189.5" y="316.1" width="6.0" height="6.0" rx="1.6" fill="#555555"/><rect x="1197.5" y="316.7" width="6.0" height="6.0" rx="1.6" fill="#555555"/><rect x="1205.5" y="317.3" width="6.0" height="6.0" rx="1.6" fill="#555555"/><rect x="1213.5" y="318.0" width="6.0" height="6.0" rx="1.6" fill="#555555"/><rect x="1221.5" y="318.9" width="6.0" height="6.0" rx="1.6" fill="#555555"/><rect x="1229.5" y="319.9" width="6.0" height="6.0" rx="1.6" fill="#555555"/><rect x="-2.5" y="38.9" width="6.0" height="6.0" rx="1.6" fill="#555555"/><rect x="5.5" y="42.8" width="6.0" height="6.0" rx="1.6" fill="#555555"/><rect x="13.5" y="47.0" width="6.0" height="6.0" rx="1.6" fill="#555555"/><rect x="21.5" y="51.5" width="6.0" height="6.0" rx="1.6" fill="#555555"/><rect x="29.5" y="56.2" width="6.0" height="6.0" rx="1.6" fill="#555555"/><rect x="37.5" y="61.2" width="6.0" height="6.0" rx="1.6" fill="#555555"/><rect x="45.5" y="66.6" width="6.0" height="6.0" rx="1.6" fill="#555555"/><rect x="53.5" y="72.3" width="6.0" height="6.0" rx="1.6" fill="#555555"/><rect x="61.5" y="78.3" width="6.0" height="6.0" rx="1.6" fill="#555555"/><rect x="69.5" y="84.4" width="6.0" height="6.0" rx="1.6" fill="#555555"/><rect x="77.5" y="90.6" width="6.0" height="6.0" rx="1.6" fill="#555555"/><rect x="85.5" y="97.1" width="6.0" height="6.0" rx="1.6" fill="#555555"/><rect x="93.5" y="103.8" width="6.0" height="6.0" rx="1.6" fill="#555555"/><rect x="101.5" y="110.6" width="6.0" height="6.0" rx="1.6" fill="#555555"/><rect x="109.5" y="117.3" width="6.0" height="6.0" rx="1.6" fill="#555555"/><rect x="117.5" y="123.9" width="6.0" height="6.0" rx="1.6" fill="#555555"/><rect x="125.5" y="130.7" width="6.0" height="6.0" rx="1.6" fill="#555555"/><rect x="133.5" y="137.4" width="6.0" height="6.0" rx="1.6" fill="#555555"/><rect x="141.5" y="144.0" width="6.0" height="6.0" rx="1.6" fill="#555555"/><rect x="149.5" y="150.2" width="6.0" height="6.0" rx="1.6" fill="#555555"/><rect x="157.5" y="156.2" width="6.0" height="6.0" rx="1.6" fill="#555555"/><rect x="165.5" y="161.9" width="6.0" height="6.0" rx="1.6" fill="#555555"/><rect x="173.5" y="167.4" width="6.0" height="6.0" rx="1.6" fill="#555555"/><rect x="181.5" y="172.8" width="6.0" height="6.0" rx="1.6" fill="#555555"/><rect x="189.5" y="178.1" width="6.0" height="6.0" rx="1.6" fill="#555555"/><rect x="197.5" y="183.2" width="6.0" height="6.0" rx="1.6" fill="#555555"/><rect x="205.5" y="188.3" width="6.0" height="6.0" rx="1.6" fill="#555555"/><rect x="213.5" y="193.1" width="6.0" height="6.0" rx="1.6" fill="#555555"/><rect x="221.5" y="197.8" width="6.0" height="6.0" rx="1.6" fill="#555555"/><rect x="229.5" y="202.3" width="6.0" height="6.0" rx="1.6" fill="#555555"/><rect x="237.5" y="206.6" width="6.0" height="6.0" rx="1.6" fill="#555555"/><rect x="245.5" y="210.7" width="6.0" height="6.0" rx="1.6" fill="#555555"/><rect x="253.5" y="214.8" width="6.0" height="6.0" rx="1.6" fill="#555555"/><rect x="261.5" y="219.0" width="6.0" height="6.0" rx="1.6" fill="#555555"/><rect x="269.5" y="223.5" width="6.0" height="6.0" rx="1.6" fill="#555555"/><rect x="277.5" y="227.9" width="6.0" height="6.0" rx="1.6" fill="#555555"/><rect x="285.5" y="231.7" width="6.0" height="6.0" rx="1.6" fill="#555555"/><rect x="293.5" y="235.4" width="6.0" height="6.0" rx="1.6" fill="#555555"/><rect x="301.5" y="238.9" width="6.0" height="6.0" rx="1.6" fill="#555555"/><rect x="309.5" y="242.4" width="6.0" height="6.0" rx="1.6" fill="#555555"/><rect x="317.5" y="245.9" width="6.0" height="6.0" rx="1.6" fill="#555555"/><rect x="325.5" y="249.5" width="6.0" height="6.0" rx="1.6" fill="#555555"/><rect x="333.5" y="253.0" width="6.0" height="6.0" rx="1.6" fill="#555555"/><rect x="341.5" y="256.4" width="6.0" height="6.0" rx="1.6" fill="#555555"/><rect x="349.5" y="259.6" width="6.0" height="6.0" rx="1.6" fill="#555555"/><rect x="357.5" y="262.4" width="6.0" height="6.0" rx="1.6" fill="#555555"/><rect x="365.5" y="265.2" width="6.0" height="6.0" rx="1.6" fill="#555555"/><rect x="373.5" y="267.7" width="6.0" height="6.0" rx="1.6" fill="#555555"/><rect x="381.5" y="270.0" width="6.0" height="6.0" rx="1.6" fill="#555555"/><rect x="389.5" y="272.0" width="6.0" height="6.0" rx="1.6" fill="#555555"/><rect x="397.5" y="273.4" width="6.0" height="6.0" rx="1.6" fill="#555555"/><rect x="405.5" y="274.6" width="6.0" height="6.0" rx="1.6" fill="#555555"/><rect x="413.5" y="275.7" width="6.0" height="6.0" rx="1.6" fill="#555555"/><rect x="421.5" y="277.1" width="6.0" height="6.0" rx="1.6" fill="#555555"/><rect x="429.5" y="279.3" width="6.0" height="6.0" rx="1.6" fill="#555555"/><rect x="437.5" y="280.5" width="6.0" height="6.0" rx="1.6" fill="#555555"/><rect x="445.5" y="281.2" width="6.0" height="6.0" rx="1.6" fill="#555555"/><rect x="453.5" y="281.8" width="6.0" height="6.0" rx="1.6" fill="#555555"/><rect x="461.5" y="282.3" width="6.0" height="6.0" rx="1.6" fill="#555555"/><rect x="469.5" y="283.0" width="6.0" height="6.0" rx="1.6" fill="#555555"/><rect x="477.5" y="284.2" width="6.0" height="6.0" rx="1.6" fill="#555555"/><rect x="485.5" y="285.2" width="6.0" height="6.0" rx="1.6" fill="#555555"/><rect x="493.5" y="285.7" width="6.0" height="6.0" rx="1.6" fill="#555555"/><rect x="501.5" y="285.9" width="6.0" height="6.0" rx="1.6" fill="#555555"/><rect x="509.5" y="286.0" width="6.0" height="6.0" rx="1.6" fill="#555555"/><rect x="517.5" y="286.0" width="6.0" height="6.0" rx="1.6" fill="#555555"/><rect x="525.5" y="286.2" width="6.0" height="6.0" rx="1.6" fill="#555555"/><rect x="533.5" y="286.5" width="6.0" height="6.0" rx="1.6" fill="#555555"/><rect x="541.5" y="287.1" width="6.0" height="6.0" rx="1.6" fill="#555555"/><rect x="549.5" y="287.9" width="6.0" height="6.0" rx="1.6" fill="#555555"/><rect x="557.5" y="288.8" width="6.0" height="6.0" rx="1.6" fill="#555555"/><rect x="565.5" y="289.9" width="6.0" height="6.0" rx="1.6" fill="#555555"/><rect x="573.5" y="291.5" width="6.0" height="6.0" rx="1.6" fill="#555555"/><rect x="581.5" y="293.2" width="6.0" height="6.0" rx="1.6" fill="#555555"/><rect x="589.5" y="295.1" width="6.0" height="6.0" rx="1.6" fill="#555555"/><rect x="597.5" y="296.9" width="6.0" height="6.0" rx="1.6" fill="#555555"/><rect x="605.5" y="298.8" width="6.0" height="6.0" rx="1.6" fill="#555555"/><rect x="613.5" y="300.9" width="6.0" height="6.0" rx="1.6" fill="#555555"/><rect x="621.5" y="303.0" width="6.0" height="6.0" rx="1.6" fill="#555555"/><rect x="629.5" y="305.0" width="6.0" height="6.0" rx="1.6" fill="#555555"/><rect x="637.5" y="306.7" width="6.0" height="6.0" rx="1.6" fill="#555555"/><rect x="645.5" y="308.3" width="6.0" height="6.0" rx="1.6" fill="#555555"/><rect x="653.5" y="309.9" width="6.0" height="6.0" rx="1.6" fill="#555555"/><rect x="661.5" y="311.4" width="6.0" height="6.0" rx="1.6" fill="#555555"/><rect x="669.5" y="313.0" width="6.0" height="6.0" rx="1.6" fill="#555555"/><rect x="677.5" y="314.9" width="6.0" height="6.0" rx="1.6" fill="#555555"/><rect x="685.5" y="316.9" width="6.0" height="6.0" rx="1.6" fill="#555555"/><rect x="693.5" y="318.9" width="6.0" height="6.0" rx="1.6" fill="#555555"/><rect x="701.5" y="321.0" width="6.0" height="6.0" rx="1.6" fill="#555555"/><rect x="709.5" y="323.0" width="6.0" height="6.0" rx="1.6" fill="#555555"/><rect x="717.5" y="325.0" width="6.0" height="6.0" rx="1.6" fill="#555555"/><rect x="725.5" y="327.2" width="6.0" height="6.0" rx="1.6" fill="#555555"/><rect x="733.5" y="329.2" width="6.0" height="6.0" rx="1.6" fill="#555555"/><rect x="741.5" y="331.2" width="6.0" height="6.0" rx="1.6" fill="#555555"/><rect x="749.5" y="332.8" width="6.0" height="6.0" rx="1.6" fill="#555555"/><rect x="757.5" y="334.1" width="6.0" height="6.0" rx="1.6" fill="#555555"/><rect x="765.5" y="335.3" width="6.0" height="6.0" rx="1.6" fill="#555555"/><rect x="773.5" y="336.3" width="6.0" height="6.0" rx="1.6" fill="#555555"/><rect x="781.5" y="337.3" width="6.0" height="6.0" rx="1.6" fill="#555555"/><rect x="789.5" y="338.1" width="6.0" height="6.0" rx="1.6" fill="#555555"/><rect x="797.5" y="338.7" width="6.0" height="6.0" rx="1.6" fill="#555555"/><rect x="805.5" y="339.3" width="6.0" height="6.0" rx="1.6" fill="#555555"/><rect x="813.5" y="339.8" width="6.0" height="6.0" rx="1.6" fill="#555555"/><rect x="821.5" y="340.3" width="6.0" height="6.0" rx="1.6" fill="#555555"/><rect x="829.5" y="340.8" width="6.0" height="6.0" rx="1.6" fill="#555555"/><rect x="837.5" y="341.2" width="6.0" height="6.0" rx="1.6" fill="#555555"/><rect x="845.5" y="341.6" width="6.0" height="6.0" rx="1.6" fill="#555555"/><rect x="853.5" y="342.0" width="6.0" height="6.0" rx="1.6" fill="#555555"/><rect x="861.5" y="342.3" width="6.0" height="6.0" rx="1.6" fill="#555555"/><rect x="869.5" y="342.6" width="6.0" height="6.0" rx="1.6" fill="#555555"/><rect x="877.5" y="343.0" width="6.0" height="6.0" rx="1.6" fill="#555555"/><rect x="885.5" y="343.3" width="6.0" height="6.0" rx="1.6" fill="#555555"/><rect x="893.5" y="343.6" width="6.0" height="6.0" rx="1.6" fill="#555555"/><rect x="901.5" y="343.9" width="6.0" height="6.0" rx="1.6" fill="#555555"/><rect x="909.5" y="344.1" width="6.0" height="6.0" rx="1.6" fill="#555555"/><rect x="917.5" y="344.4" width="6.0" height="6.0" rx="1.6" fill="#555555"/><rect x="925.5" y="344.6" width="6.0" height="6.0" rx="1.6" fill="#555555"/><rect x="933.5" y="344.9" width="6.0" height="6.0" rx="1.6" fill="#555555"/><rect x="941.5" y="345.1" width="6.0" height="6.0" rx="1.6" fill="#555555"/><rect x="949.5" y="345.3" width="6.0" height="6.0" rx="1.6" fill="#555555"/><rect x="957.5" y="345.5" width="6.0" height="6.0" rx="1.6" fill="#555555"/><rect x="965.5" y="345.7" width="6.0" height="6.0" rx="1.6" fill="#555555"/><rect x="973.5" y="346.0" width="6.0" height="6.0" rx="1.6" fill="#555555"/><rect x="981.5" y="346.2" width="6.0" height="6.0" rx="1.6" fill="#555555"/><rect x="989.5" y="346.5" width="6.0" height="6.0" rx="1.6" fill="#555555"/><rect x="997.5" y="346.7" width="6.0" height="6.0" rx="1.6" fill="#555555"/><rect x="1005.5" y="347.0" width="6.0" height="6.0" rx="1.6" fill="#555555"/><rect x="1013.5" y="347.3" width="6.0" height="6.0" rx="1.6" fill="#555555"/><rect x="1021.5" y="347.6" width="6.0" height="6.0" rx="1.6" fill="#555555"/><rect x="1029.5" y="348.0" width="6.0" height="6.0" rx="1.6" fill="#555555"/><rect x="1037.5" y="348.3" width="6.0" height="6.0" rx="1.6" fill="#555555"/><rect x="1045.5" y="348.6" width="6.0" height="6.0" rx="1.6" fill="#555555"/><rect x="1053.5" y="349.0" width="6.0" height="6.0" rx="1.6" fill="#555555"/><rect x="1061.5" y="349.3" width="6.0" height="6.0" rx="1.6" fill="#555555"/><rect x="1069.5" y="349.7" width="6.0" height="6.0" rx="1.6" fill="#555555"/><rect x="1077.5" y="350.0" width="6.0" height="6.0" rx="1.6" fill="#555555"/><rect x="1085.5" y="350.3" width="6.0" height="6.0" rx="1.6" fill="#555555"/><rect x="1093.5" y="350.6" width="6.0" height="6.0" rx="1.6" fill="#555555"/><rect x="1101.5" y="350.9" width="6.0" height="6.0" rx="1.6" fill="#555555"/><rect x="1109.5" y="351.1" width="6.0" height="6.0" rx="1.6" fill="#555555"/><rect x="1117.5" y="351.4" width="6.0" height="6.0" rx="1.6" fill="#555555"/><rect x="1125.5" y="351.7" width="6.0" height="6.0" rx="1.6" fill="#555555"/><rect x="1133.5" y="351.9" width="6.0" height="6.0" rx="1.6" fill="#555555"/><rect x="1141.5" y="352.2" width="6.0" height="6.0" rx="1.6" fill="#555555"/><rect x="1149.5" y="352.4" width="6.0" height="6.0" rx="1.6" fill="#555555"/><rect x="1157.5" y="352.7" width="6.0" height="6.0" rx="1.6" fill="#555555"/><rect x="1165.5" y="352.9" width="6.0" height="6.0" rx="1.6" fill="#555555"/><rect x="1173.5" y="353.1" width="6.0" height="6.0" rx="1.6" fill="#555555"/><rect x="1181.5" y="353.4" width="6.0" height="6.0" rx="1.6" fill="#555555"/><rect x="1189.5" y="353.6" width="6.0" height="6.0" rx="1.6" fill="#555555"/><rect x="1197.5" y="353.8" width="6.0" height="6.0" rx="1.6" fill="#555555"/><rect x="1205.5" y="354.0" width="6.0" height="6.0" rx="1.6" fill="#555555"/><rect x="1213.5" y="354.2" width="6.0" height="6.0" rx="1.6" fill="#555555"/><rect x="1221.5" y="354.4" width="6.0" height="6.0" rx="1.6" fill="#555555"/><rect x="1229.5" y="354.6" width="6.0" height="6.0" rx="1.6" fill="#555555"/>
<text x="1018" y="387" font-size="12" font-family="Liberation Sans, Noto Sans CJK SC, sans-serif" fill="#808080" shape-rendering="auto">支撑空目标</text>
<polygon points="960.0,302.6 962.0,302.6 964.0,302.7 966.0,302.8 968.0,302.8 970.0,302.9 972.0,303.0 974.0,303.0 976.0,303.1 978.0,303.2 980.0,303.3 982.0,303.3 984.0,303.4 986.0,303.5 988.0,303.6 990.0,303.7 992.0,303.8 994.0,303.9 996.0,304.0 998.0,304.1 1000.0,304.3 1002.0,304.4 1004.0,304.5 1006.0,304.6 1008.0,304.7 1010.0,304.8 1012.0,304.9 1014.0,305.1 1016.0,305.2 1018.0,305.3 1020.0,305.4 1022.0,305.6 1024.0,305.7 1026.0,305.8 1028.0,306.0 1030.0,306.1 1032.0,306.3 1034.0,306.4 1036.0,306.5 1038.0,306.7 1040.0,306.8 1042.0,307.0 1044.0,307.1 1046.0,307.3 1048.0,307.4 1050.0,307.6 1052.0,307.7 1054.0,307.9 1056.0,308.0 1058.0,308.2 1060.0,308.3 1062.0,308.5 1064.0,308.6 1066.0,308.8 1068.0,308.9 1070.0,309.1 1072.0,309.2 1074.0,309.4 1076.0,309.6 1078.0,309.7 1080.0,309.9 1082.0,310.0 1084.0,310.2 1086.0,310.4 1088.0,310.6 1090.0,310.7 1092.0,310.9 1094.0,311.1 1096.0,311.3 1098.0,311.5 1100.0,311.7 1102.0,311.9 1104.0,312.1 1106.0,312.3 1108.0,312.5 1110.0,312.6 1112.0,312.8 1114.0,313.0 1116.0,313.2 1118.0,313.4 1120.0,313.6 1122.0,313.8 1124.0,314.0 1126.0,314.1 1128.0,314.3 1130.0,314.5 1132.0,314.7 1134.0,314.8 1136.0,315.0 1138.0,315.2 1140.0,315.4 1142.0,315.6 1144.0,315.8 1146.0,315.9 1148.0,316.1 1150.0,316.3 1152.0,316.5 1154.0,316.7 1156.0,316.9 1158.0,317.1 1160.0,317.3 1162.0,317.4 1164.0,317.6 1166.0,317.8 1168.0,318.0 1170.0,318.2 1172.0,318.4 1174.0,318.5 1176.0,318.7 1178.0,318.9 1180.0,319.0 1182.0,319.2 1184.0,319.3 1186.0,319.5 1188.0,319.6 1190.0,319.8 1192.0,319.9 1194.0,320.1 1196.0,320.2 1198.0,320.4 1200.0,320.5 1202.0,320.7 1204.0,320.8 1206.0,321.0 1208.0,321.2 1210.0,321.3 1212.0,321.5 1214.0,321.7 1216.0,321.9 1218.0,322.1 1220.0,322.3 1222.0,322.5 1224.0,322.7 1226.0,323.0 1228.0,323.2 1230.0,323.5 1232.0,323.7 1234.0,323.9 1236.0,324.2 1236.0,328.5 1234.0,328.2 1232.0,328.0 1230.0,327.8 1228.0,327.5 1226.0,327.3 1224.0,327.0 1222.0,326.8 1220.0,326.6 1218.0,326.4 1216.0,326.2 1214.0,326.0 1212.0,325.8 1210.0,325.6 1208.0,325.5 1206.0,325.3 1204.0,325.1 1202.0,325.0 1200.0,324.8 1198.0,324.7 1196.0,324.5 1194.0,324.4 1192.0,324.2 1190.0,324.1 1188.0,323.9 1186.0,323.8 1184.0,323.6 1182.0,323.5 1180.0,323.3 1178.0,323.2 1176.0,323.0 1174.0,322.8 1172.0,322.7 1170.0,322.5 1168.0,322.3 1166.0,322.1 1164.0,321.9 1162.0,321.7 1160.0,321.6 1158.0,321.4 1156.0,321.2 1154.0,321.0 1152.0,320.8 1150.0,320.6 1148.0,320.4 1146.0,320.2 1144.0,320.1 1142.0,319.9 1140.0,319.7 1138.0,319.5 1136.0,319.3 1134.0,319.1 1132.0,319.0 1130.0,318.8 1128.0,318.6 1126.0,318.4 1124.0,318.3 1122.0,318.1 1120.0,317.9 1118.0,317.7 1116.0,317.5 1114.0,317.3 1112.0,317.1 1110.0,316.9 1108.0,316.8 1106.0,316.6 1104.0,316.4 1102.0,316.2 1100.0,316.0 1098.0,315.8 1096.0,315.6 1094.0,315.4 1092.0,315.2 1090.0,315.0 1088.0,314.9 1086.0,314.7 1084.0,314.5 1082.0,314.3 1080.0,314.2 1078.0,314.0 1076.0,313.9 1074.0,313.7 1072.0,313.5 1070.0,313.4 1068.0,313.2 1066.0,313.1 1064.0,312.9 1062.0,312.8 1060.0,312.6 1058.0,312.5 1056.0,312.3 1054.0,312.2 1052.0,312.0 1050.0,311.9 1048.0,311.7 1046.0,311.6 1044.0,311.4 1042.0,311.3 1040.0,311.1 1038.0,311.0 1036.0,310.8 1034.0,310.7 1032.0,310.6 1030.0,310.4 1028.0,310.3 1026.0,310.1 1024.0,310.0 1022.0,309.9 1020.0,309.7 1018.0,309.6 1016.0,309.5 1014.0,309.4 1012.0,309.2 1010.0,309.1 1008.0,309.0 1006.0,308.9 1004.0,308.8 1002.0,308.7 1000.0,308.6 998.0,308.4 996.0,308.3 994.0,308.2 992.0,308.1 990.0,308.0 988.0,307.9 986.0,307.8 984.0,307.7 982.0,307.6 980.0,307.6 978.0,307.5 976.0,307.4 974.0,307.3 972.0,307.3 970.0,307.2 968.0,307.1 966.0,307.1 964.0,307.0 962.0,306.9 960.0,306.9" fill="#6c6c6c"/>
<rect x="957.8" y="299.5" width="5.4" height="5.4" rx="1.6" fill="#6c6c6c"/>
<rect x="965.8" y="299.7" width="5.4" height="5.4" rx="1.6" fill="#6c6c6c"/>
<rect x="973.8" y="300.0" width="5.4" height="5.4" rx="1.6" fill="#6c6c6c"/>
<rect x="981.8" y="300.4" width="5.4" height="5.4" rx="1.6" fill="#6c6c6c"/>
<rect x="989.8" y="300.8" width="5.4" height="5.4" rx="1.6" fill="#6c6c6c"/>
<rect x="997.8" y="301.2" width="5.4" height="5.4" rx="1.6" fill="#6c6c6c"/>
<rect x="1005.8" y="301.6" width="5.4" height="5.4" rx="1.6" fill="#6c6c6c"/>
<rect x="1013.8" y="302.1" width="5.4" height="5.4" rx="1.6" fill="#6c6c6c"/>
<rect x="1021.8" y="302.6" width="5.4" height="5.4" rx="1.6" fill="#6c6c6c"/>
<rect x="1029.8" y="303.2" width="5.4" height="5.4" rx="1.6" fill="#6c6c6c"/>
<rect x="1037.8" y="303.8" width="5.4" height="5.4" rx="1.6" fill="#6c6c6c"/>
<rect x="1045.8" y="304.3" width="5.4" height="5.4" rx="1.6" fill="#6c6c6c"/>
<rect x="1053.8" y="304.9" width="5.4" height="5.4" rx="1.6" fill="#6c6c6c"/>
<rect x="1061.8" y="305.5" width="5.4" height="5.4" rx="1.6" fill="#6c6c6c"/>
<rect x="1069.8" y="306.2" width="5.4" height="5.4" rx="1.6" fill="#6c6c6c"/>
<rect x="1077.8" y="306.8" width="5.4" height="5.4" rx="1.6" fill="#6c6c6c"/>
<rect x="1085.8" y="307.5" width="5.4" height="5.4" rx="1.6" fill="#6c6c6c"/>
<rect x="1093.8" y="308.2" width="5.4" height="5.4" rx="1.6" fill="#6c6c6c"/>
<rect x="1101.8" y="309.0" width="5.4" height="5.4" rx="1.6" fill="#6c6c6c"/>
<rect x="1109.8" y="309.8" width="5.4" height="5.4" rx="1.6" fill="#6c6c6c"/>
<rect x="1117.8" y="310.5" width="5.4" height="5.4" rx="1.6" fill="#6c6c6c"/>
<rect x="1125.8" y="311.3" width="5.4" height="5.4" rx="1.6" fill="#6c6c6c"/>
<rect x="1133.8" y="312.0" width="5.4" height="5.4" rx="1.6" fill="#6c6c6c"/>
<rect x="1141.8" y="312.7" width="5.4" height="5.4" rx="1.6" fill="#6c6c6c"/>
<rect x="1149.8" y="313.5" width="5.4" height="5.4" rx="1.6" fill="#6c6c6c"/>
<rect x="1157.8" y="314.2" width="5.4" height="5.4" rx="1.6" fill="#6c6c6c"/>
<rect x="1165.8" y="314.9" width="5.4" height="5.4" rx="1.6" fill="#6c6c6c"/>
<rect x="1173.8" y="315.6" width="5.4" height="5.4" rx="1.6" fill="#6c6c6c"/>
<rect x="1181.8" y="316.3" width="5.4" height="5.4" rx="1.6" fill="#6c6c6c"/>
<rect x="1189.8" y="316.9" width="5.4" height="5.4" rx="1.6" fill="#6c6c6c"/>
<rect x="1197.8" y="317.5" width="5.4" height="5.4" rx="1.6" fill="#6c6c6c"/>
<rect x="1205.8" y="318.1" width="5.4" height="5.4" rx="1.6" fill="#6c6c6c"/>
<rect x="1213.8" y="318.8" width="5.4" height="5.4" rx="1.6" fill="#6c6c6c"/>
<rect x="1221.8" y="319.7" width="5.4" height="5.4" rx="1.6" fill="#6c6c6c"/>
<rect x="1229.8" y="320.7" width="5.4" height="5.4" rx="1.6" fill="#6c6c6c"/>
<polygon points="0.0,203.2 2.0,205.5 4.0,207.9 6.0,210.2 8.0,212.5 10.0,214.9 12.0,217.2 14.0,219.6 16.0,221.9 18.0,224.3 20.0,226.7 22.0,229.0 24.0,231.4 26.0,233.8 28.0,236.2 30.0,238.6 32.0,241.1 34.0,243.6 36.0,246.1 38.0,248.6 40.0,251.1 42.0,253.6 44.0,256.1 46.0,258.5 48.0,260.9 50.0,263.2 52.0,265.5 54.0,267.8 56.0,269.9 58.0,272.0 60.0,274.1 62.0,276.1 64.0,278.1 66.0,280.0 68.0,282.0 70.0,283.9 72.0,285.9 74.0,287.9 76.0,289.9 78.0,292.0 80.0,294.1 82.0,296.3 84.0,298.4 86.0,300.6 88.0,302.8 90.0,304.9 92.0,306.9 94.0,308.9 96.0,310.9 98.0,312.8 100.0,314.7 102.0,316.6 104.0,318.4 106.0,320.2 108.0,321.9 110.0,323.5 112.0,325.0 114.0,326.4 116.0,327.7 118.0,328.9 120.0,330.1 122.0,331.2 124.0,332.2 126.0,333.2 128.0,334.2 130.0,335.1 132.0,336.1 134.0,337.0 136.0,337.9 138.0,338.8 140.0,339.6 142.0,340.5 144.0,341.3 146.0,342.1 148.0,342.8 150.0,343.5 152.0,344.1 154.0,344.7 156.0,345.3 158.0,345.9 160.0,346.5 162.0,347.0 164.0,347.5 166.0,348.0 168.0,348.4 170.0,348.7 172.0,349.0 174.0,349.3 176.0,349.6 178.0,349.9 180.0,350.1 182.0,350.3 184.0,350.5 186.0,350.7 188.0,350.8 190.0,350.8 192.0,350.8 194.0,350.8 196.0,350.8 198.0,350.8 200.0,350.8 202.0,350.8 204.0,350.8 206.0,350.8 208.0,350.8 210.0,350.8 212.0,350.7 214.0,350.6 216.0,350.4 218.0,350.1 220.0,349.8 222.0,349.5 224.0,349.2 226.0,348.9 228.0,348.5 230.0,348.2 232.0,347.9 234.0,347.5 236.0,347.1 238.0,346.6 240.0,346.2 242.0,345.7 244.0,345.3 246.0,344.8 248.0,344.3 250.0,343.9 252.0,343.4 254.0,342.9 256.0,342.3 258.0,341.8 260.0,341.3 262.0,340.7 264.0,340.2 266.0,339.6 268.0,339.0 270.0,338.4 272.0,337.8 274.0,337.2 276.0,336.6 278.0,335.9 280.0,335.3 282.0,334.6 284.0,333.9 286.0,333.3 288.0,332.6 290.0,331.9 292.0,331.1 294.0,330.4 296.0,329.6 298.0,328.8 300.0,328.0 302.0,327.1 304.0,326.1 306.0,325.1 308.0,324.1 310.0,323.0 312.0,322.0 314.0,320.9 316.0,319.9 318.0,319.0 320.0,318.1 322.0,317.3 324.0,316.4 326.0,315.6 328.0,314.8 330.0,314.0 332.0,313.2 334.0,312.5 336.0,311.7 338.0,310.9 340.0,310.1 342.0,309.4 344.0,308.6 346.0,307.7 348.0,306.9 350.0,306.1 352.0,305.2 354.0,304.4 356.0,303.5 358.0,302.7 360.0,301.8 362.0,300.9 364.0,300.1 366.0,299.2 368.0,298.4 370.0,297.6 372.0,296.7 374.0,295.9 376.0,295.1 378.0,294.4 380.0,293.6 382.0,292.8 384.0,292.1 386.0,291.3 388.0,290.5 390.0,289.8 392.0,289.1 394.0,288.3 396.0,287.6 398.0,286.9 400.0,286.3 402.0,285.6 404.0,285.0 406.0,284.3 408.0,283.7 410.0,283.1 412.0,282.4 414.0,281.8 416.0,281.2 418.0,280.6 420.0,280.0 422.0,279.4 424.0,278.9 426.0,278.4 428.0,277.9 430.0,277.5 432.0,277.1 434.0,276.8 436.0,276.4 438.0,276.1 440.0,275.8 442.0,275.5 444.0,275.2 446.0,275.0 448.0,274.8 450.0,274.7 452.0,274.6 454.0,274.5 456.0,274.4 458.0,274.3 460.0,274.3 462.0,274.2 464.0,274.1 466.0,274.1 468.0,274.1 470.0,274.0 472.0,274.0 474.0,274.0 476.0,274.0 478.0,274.0 480.0,274.0 482.0,274.1 484.0,274.1 486.0,274.1 488.0,274.2 490.0,274.3 492.0,274.3 494.0,274.4 496.0,274.5 498.0,274.6 500.0,274.7 502.0,274.8 504.0,275.1 506.0,275.4 508.0,275.7 510.0,276.1 512.0,276.5 514.0,277.0 516.0,277.4 518.0,277.9 520.0,278.4 522.0,279.0 524.0,279.5 526.0,280.0 528.0,280.5 530.0,281.0 532.0,281.6 534.0,282.2 536.0,282.8 538.0,283.4 540.0,284.0 542.0,284.7 544.0,285.3 546.0,285.9 548.0,286.5 550.0,287.1 552.0,287.6 554.0,288.2 556.0,288.8 558.0,289.4 560.0,290.0 562.0,290.7 564.0,291.4 566.0,292.2 568.0,293.1 570.0,293.9 572.0,294.7 574.0,295.5 576.0,296.3 578.0,297.0 580.0,297.7 582.0,298.4 584.0,299.1 586.0,299.7 588.0,300.4 590.0,301.0 592.0,301.6 594.0,302.2 596.0,302.7 598.0,303.2 600.0,303.7 602.0,304.1 604.0,304.6 606.0,305.0 608.0,305.4 610.0,305.8 612.0,306.1 614.0,306.5 616.0,306.8 618.0,307.1 620.0,307.5 622.0,307.8 624.0,308.0 626.0,308.3 628.0,308.6 630.0,308.8 632.0,309.1 634.0,309.3 636.0,309.5 638.0,309.7 640.0,309.9 642.0,310.1 644.0,310.3 646.0,310.5 648.0,310.6 650.0,310.7 652.0,310.8 654.0,310.9 656.0,310.9 658.0,310.9 660.0,310.9 662.0,310.8 664.0,310.8 666.0,310.7 668.0,310.7 670.0,310.6 672.0,310.6 674.0,310.5 676.0,310.4 678.0,310.3 680.0,310.1 682.0,309.9 684.0,309.7 686.0,309.5 688.0,309.3 690.0,309.0 692.0,308.8 694.0,308.5 696.0,308.2 698.0,307.9 700.0,307.6 702.0,307.2 704.0,306.8 706.0,306.5 708.0,306.1 710.0,305.7 712.0,305.2 714.0,304.8 716.0,304.4 718.0,303.9 720.0,303.4 722.0,302.9 724.0,302.4 726.0,301.8 728.0,301.3 730.0,300.8 732.0,300.3 734.0,299.8 736.0,299.3 738.0,298.7 740.0,298.2 742.0,297.7 744.0,297.2 746.0,296.7 748.0,296.2 750.0,295.7 752.0,295.3 754.0,294.9 756.0,294.5 756.0,400.5 754.0,401.4 752.0,402.4 750.0,403.3 748.0,404.2 746.0,405.1 744.0,406.0 742.0,406.9 740.0,407.8 738.0,408.7 736.0,409.6 734.0,410.4 732.0,411.3 730.0,412.2 728.0,413.2 726.0,414.1 724.0,415.1 722.0,416.1 720.0,417.0 718.0,417.9 716.0,418.8 714.0,419.6 712.0,420.4 710.0,421.1 708.0,421.8 706.0,422.4 704.0,423.0 702.0,423.6 700.0,424.2 698.0,424.8 696.0,425.3 694.0,425.8 692.0,426.3 690.0,426.8 688.0,427.2 686.0,427.7 684.0,428.2 682.0,428.6 680.0,429.0 678.0,429.3 676.0,429.6 674.0,429.8 672.0,430.0 670.0,430.2 668.0,430.4 666.0,430.6 664.0,430.7 662.0,430.9 660.0,431.0 658.0,431.1 656.0,431.1 654.0,431.1 652.0,431.1 650.0,431.1 648.0,431.1 646.0,431.0 644.0,431.0 642.0,430.9 640.0,430.9 638.0,430.9 636.0,430.8 634.0,430.7 632.0,430.6 630.0,430.5 628.0,430.3 626.0,430.1 624.0,429.8 622.0,429.6 620.0,429.3 618.0,429.0 616.0,428.7 614.0,428.4 612.0,428.0 610.0,427.5 608.0,427.0 606.0,426.5 604.0,426.0 602.0,425.4 600.0,424.7 598.0,424.1 596.0,423.4 594.0,422.7 592.0,421.8 590.0,421.0 588.0,420.1 586.0,419.1 584.0,418.1 582.0,417.1 580.0,416.0 578.0,415.0 576.0,413.8 574.0,412.6 572.0,411.3 570.0,410.0 568.0,408.7 566.0,407.4 564.0,406.2 562.0,405.0 560.0,403.8 558.0,402.6 556.0,401.4 554.0,400.2 552.0,399.0 550.0,397.8 548.0,396.6 546.0,395.4 544.0,394.2 542.0,393.0 540.0,391.7 538.0,390.5 536.0,389.3 534.0,388.1 532.0,386.9 530.0,385.7 528.0,384.6 526.0,383.5 524.0,382.4 522.0,381.3 520.0,380.2 518.0,379.2 516.0,378.2 514.0,377.2 512.0,376.2 510.0,375.3 508.0,374.5 506.0,373.7 504.0,372.9 502.0,372.1 500.0,371.3 498.0,370.6 496.0,369.9 494.0,369.3 492.0,368.7 490.0,368.2 488.0,367.7 486.0,367.3 484.0,366.9 482.0,366.6 480.0,366.2 478.0,365.9 476.0,365.6 474.0,365.3 472.0,365.0 470.0,364.8 468.0,364.5 466.0,364.2 464.0,363.9 462.0,363.7 460.0,363.4 458.0,363.2 456.0,363.0 454.0,362.8 452.0,362.7 450.0,362.7 448.0,362.6 446.0,362.5 444.0,362.5 442.0,362.4 440.0,362.4 438.0,362.3 436.0,362.3 434.0,362.3 432.0,362.3 430.0,362.3 428.0,362.4 426.0,362.4 424.0,362.5 422.0,362.6 420.0,362.7 418.0,362.9 416.0,363.0 414.0,363.1 412.0,363.3 410.0,363.5 408.0,363.8 406.0,364.2 404.0,364.5 402.0,365.0 400.0,365.4 398.0,365.8 396.0,366.3 394.0,366.7 392.0,367.2 390.0,367.6 388.0,368.1 386.0,368.7 384.0,369.2 382.0,369.8 380.0,370.3 378.0,370.9 376.0,371.5 374.0,372.1 372.0,372.8 370.0,373.4 368.0,374.1 366.0,374.8 364.0,375.6 362.0,376.3 360.0,377.0 358.0,377.8 356.0,378.5 354.0,379.3 352.0,380.1 350.0,380.9 348.0,381.7 346.0,382.5 344.0,383.3 342.0,384.1 340.0,384.9 338.0,385.7 336.0,386.5 334.0,387.3 332.0,388.1 330.0,388.9 328.0,389.7 326.0,390.4 324.0,391.2 322.0,392.0 320.0,392.9 318.0,393.7 316.0,394.6 314.0,395.5 312.0,396.4 310.0,397.3 308.0,398.3 306.0,399.2 304.0,400.1 302.0,401.1 300.0,402.0 298.0,403.0 296.0,403.9 294.0,404.9 292.0,405.8 290.0,406.6 288.0,407.5 286.0,408.3 284.0,409.2 282.0,410.0 280.0,410.8 278.0,411.5 276.0,412.3 274.0,413.1 272.0,413.8 270.0,414.6 268.0,415.3 266.0,416.0 264.0,416.7 262.0,417.4 260.0,418.1 258.0,418.8 256.0,419.5 254.0,420.1 252.0,420.8 250.0,421.4 248.0,422.0 246.0,422.5 244.0,423.1 242.0,423.7 240.0,424.3 238.0,424.9 236.0,425.5 234.0,426.1 232.0,426.7 230.0,427.3 228.0,427.9 226.0,428.5 224.0,429.1 222.0,429.7 220.0,430.3 218.0,430.9 216.0,431.5 214.0,432.1 212.0,432.8 210.0,433.4 208.0,434.0 206.0,434.6 204.0,435.1 202.0,435.7 200.0,436.3 198.0,436.8 196.0,437.4 194.0,438.0 192.0,438.5 190.0,439.1 188.0,439.6 186.0,440.0 184.0,440.5 182.0,440.8 180.0,441.2 178.0,441.5 176.0,441.9 174.0,442.2 172.0,442.5 170.0,442.8 168.0,443.0 166.0,443.1 164.0,443.2 162.0,443.2 160.0,443.2 158.0,443.2 156.0,443.2 154.0,443.2 152.0,443.2 150.0,443.2 148.0,443.2 146.0,443.2 144.0,443.2 142.0,443.1 140.0,443.0 138.0,442.8 136.0,442.6 134.0,442.4 132.0,442.1 130.0,441.8 128.0,441.5 126.0,441.2 124.0,440.8 122.0,440.4 120.0,439.9 118.0,439.3 116.0,438.7 114.0,438.0 112.0,437.4 110.0,436.7 108.0,435.9 106.0,435.1 104.0,434.2 102.0,433.3 100.0,432.2 98.0,431.2 96.0,430.1 94.0,429.0 92.0,427.8 90.0,426.7 88.0,425.5 86.0,424.3 84.0,423.1 82.0,421.8 80.0,420.5 78.0,419.2 76.0,417.8 74.0,416.3 72.0,414.9 70.0,413.4 68.0,411.8 66.0,410.2 64.0,408.5 62.0,406.8 60.0,405.1 58.0,403.3 56.0,401.4 54.0,399.5 52.0,397.5 50.0,395.5 48.0,393.3 46.0,391.1 44.0,388.8 42.0,386.6 40.0,384.3 38.0,382.0 36.0,379.7 34.0,377.4 32.0,375.0 30.0,372.7 28.0,370.3 26.0,367.9 24.0,365.5 22.0,363.1 20.0,360.6 18.0,358.2 16.0,355.7 14.0,353.3 12.0,350.8 10.0,348.3 8.0,345.8 6.0,343.2 4.0,340.7 2.0,338.2 0.0,335.6" fill="#006400"/><rect x="-2.3" y="199.6" width="5.6" height="5.6" rx="1.6" fill="#006400"/><rect x="5.7" y="208.9" width="5.6" height="5.6" rx="1.6" fill="#006400"/><rect x="13.7" y="218.3" width="5.6" height="5.6" rx="1.6" fill="#006400"/><rect x="21.7" y="227.8" width="5.6" height="5.6" rx="1.6" fill="#006400"/><rect x="29.7" y="237.5" width="5.6" height="5.6" rx="1.6" fill="#006400"/><rect x="37.7" y="247.5" width="5.6" height="5.6" rx="1.6" fill="#006400"/><rect x="45.7" y="257.3" width="5.6" height="5.6" rx="1.6" fill="#006400"/><rect x="53.7" y="266.3" width="5.6" height="5.6" rx="1.6" fill="#006400"/><rect x="61.7" y="274.3" width="5.6" height="5.6" rx="1.6" fill="#006400"/><rect x="69.7" y="282.2" width="5.6" height="5.6" rx="1.6" fill="#006400"/><rect x="77.7" y="290.4" width="5.6" height="5.6" rx="1.6" fill="#006400"/><rect x="85.7" y="299.1" width="5.6" height="5.6" rx="1.6" fill="#006400"/><rect x="93.7" y="307.1" width="5.6" height="5.6" rx="1.6" fill="#006400"/><rect x="101.7" y="314.7" width="5.6" height="5.6" rx="1.6" fill="#006400"/><rect x="109.7" y="321.2" width="5.6" height="5.6" rx="1.6" fill="#006400"/><rect x="117.7" y="326.2" width="5.6" height="5.6" rx="1.6" fill="#006400"/><rect x="125.7" y="330.2" width="5.6" height="5.6" rx="1.6" fill="#006400"/><rect x="133.7" y="333.9" width="5.6" height="5.6" rx="1.6" fill="#006400"/><rect x="141.7" y="337.3" width="5.6" height="5.6" rx="1.6" fill="#006400"/><rect x="149.7" y="340.1" width="5.6" height="5.6" rx="1.6" fill="#006400"/><rect x="157.7" y="342.4" width="5.6" height="5.6" rx="1.6" fill="#006400"/><rect x="165.7" y="344.3" width="5.6" height="5.6" rx="1.6" fill="#006400"/><rect x="173.7" y="345.5" width="5.6" height="5.6" rx="1.6" fill="#006400"/><rect x="181.7" y="346.4" width="5.6" height="5.6" rx="1.6" fill="#006400"/><rect x="189.7" y="346.6" width="5.6" height="5.6" rx="1.6" fill="#006400"/><rect x="197.7" y="346.6" width="5.6" height="5.6" rx="1.6" fill="#006400"/><rect x="205.7" y="346.6" width="5.6" height="5.6" rx="1.6" fill="#006400"/><rect x="213.7" y="346.1" width="5.6" height="5.6" rx="1.6" fill="#006400"/><rect x="221.7" y="344.9" width="5.6" height="5.6" rx="1.6" fill="#006400"/><rect x="229.7" y="343.6" width="5.6" height="5.6" rx="1.6" fill="#006400"/><rect x="237.7" y="341.9" width="5.6" height="5.6" rx="1.6" fill="#006400"/><rect x="245.7" y="340.0" width="5.6" height="5.6" rx="1.6" fill="#006400"/><rect x="253.7" y="338.0" width="5.6" height="5.6" rx="1.6" fill="#006400"/><rect x="261.7" y="335.8" width="5.6" height="5.6" rx="1.6" fill="#006400"/><rect x="269.7" y="333.5" width="5.6" height="5.6" rx="1.6" fill="#006400"/><rect x="277.7" y="330.9" width="5.6" height="5.6" rx="1.6" fill="#006400"/><rect x="285.7" y="328.2" width="5.6" height="5.6" rx="1.6" fill="#006400"/><rect x="293.7" y="325.2" width="5.6" height="5.6" rx="1.6" fill="#006400"/><rect x="301.7" y="321.7" width="5.6" height="5.6" rx="1.6" fill="#006400"/><rect x="309.7" y="317.5" width="5.6" height="5.6" rx="1.6" fill="#006400"/><rect x="317.7" y="313.7" width="5.6" height="5.6" rx="1.6" fill="#006400"/><rect x="325.7" y="310.4" width="5.6" height="5.6" rx="1.6" fill="#006400"/><rect x="333.7" y="307.3" width="5.6" height="5.6" rx="1.6" fill="#006400"/><rect x="341.7" y="304.2" width="5.6" height="5.6" rx="1.6" fill="#006400"/><rect x="349.7" y="300.8" width="5.6" height="5.6" rx="1.6" fill="#006400"/><rect x="357.7" y="297.4" width="5.6" height="5.6" rx="1.6" fill="#006400"/><rect x="365.7" y="294.0" width="5.6" height="5.6" rx="1.6" fill="#006400"/><rect x="373.7" y="290.8" width="5.6" height="5.6" rx="1.6" fill="#006400"/><rect x="381.7" y="287.7" width="5.6" height="5.6" rx="1.6" fill="#006400"/><rect x="389.7" y="284.7" width="5.6" height="5.6" rx="1.6" fill="#006400"/><rect x="397.7" y="281.9" width="5.6" height="5.6" rx="1.6" fill="#006400"/><rect x="405.7" y="279.3" width="5.6" height="5.6" rx="1.6" fill="#006400"/><rect x="413.7" y="276.8" width="5.6" height="5.6" rx="1.6" fill="#006400"/><rect x="421.7" y="274.6" width="5.6" height="5.6" rx="1.6" fill="#006400"/><rect x="429.7" y="272.8" width="5.6" height="5.6" rx="1.6" fill="#006400"/><rect x="437.7" y="271.5" width="5.6" height="5.6" rx="1.6" fill="#006400"/><rect x="445.7" y="270.6" width="5.6" height="5.6" rx="1.6" fill="#006400"/><rect x="453.7" y="270.2" width="5.6" height="5.6" rx="1.6" fill="#006400"/><rect x="461.7" y="269.9" width="5.6" height="5.6" rx="1.6" fill="#006400"/><rect x="469.7" y="269.8" width="5.6" height="5.6" rx="1.6" fill="#006400"/><rect x="477.7" y="269.8" width="5.6" height="5.6" rx="1.6" fill="#006400"/><rect x="485.7" y="270.0" width="5.6" height="5.6" rx="1.6" fill="#006400"/><rect x="493.7" y="270.3" width="5.6" height="5.6" rx="1.6" fill="#006400"/><rect x="501.7" y="270.9" width="5.6" height="5.6" rx="1.6" fill="#006400"/><rect x="509.7" y="272.4" width="5.6" height="5.6" rx="1.6" fill="#006400"/><rect x="517.7" y="274.4" width="5.6" height="5.6" rx="1.6" fill="#006400"/><rect x="525.7" y="276.4" width="5.6" height="5.6" rx="1.6" fill="#006400"/><rect x="533.7" y="278.7" width="5.6" height="5.6" rx="1.6" fill="#006400"/><rect x="541.7" y="281.3" width="5.6" height="5.6" rx="1.6" fill="#006400"/><rect x="549.7" y="283.6" width="5.6" height="5.6" rx="1.6" fill="#006400"/><rect x="557.7" y="286.0" width="5.6" height="5.6" rx="1.6" fill="#006400"/><rect x="565.7" y="289.1" width="5.6" height="5.6" rx="1.6" fill="#006400"/><rect x="573.7" y="292.3" width="5.6" height="5.6" rx="1.6" fill="#006400"/><rect x="581.7" y="295.1" width="5.6" height="5.6" rx="1.6" fill="#006400"/><rect x="589.7" y="297.5" width="5.6" height="5.6" rx="1.6" fill="#006400"/><rect x="597.7" y="299.6" width="5.6" height="5.6" rx="1.6" fill="#006400"/><rect x="605.7" y="301.3" width="5.6" height="5.6" rx="1.6" fill="#006400"/><rect x="613.7" y="302.7" width="5.6" height="5.6" rx="1.6" fill="#006400"/><rect x="621.7" y="303.9" width="5.6" height="5.6" rx="1.6" fill="#006400"/><rect x="629.7" y="304.9" width="5.6" height="5.6" rx="1.6" fill="#006400"/><rect x="637.7" y="305.7" width="5.6" height="5.6" rx="1.6" fill="#006400"/><rect x="645.7" y="306.5" width="5.6" height="5.6" rx="1.6" fill="#006400"/><rect x="653.7" y="306.7" width="5.6" height="5.6" rx="1.6" fill="#006400"/><rect x="661.7" y="306.6" width="5.6" height="5.6" rx="1.6" fill="#006400"/><rect x="669.7" y="306.4" width="5.6" height="5.6" rx="1.6" fill="#006400"/><rect x="677.7" y="305.9" width="5.6" height="5.6" rx="1.6" fill="#006400"/><rect x="685.7" y="305.0" width="5.6" height="5.6" rx="1.6" fill="#006400"/><rect x="693.7" y="303.9" width="5.6" height="5.6" rx="1.6" fill="#006400"/><rect x="701.7" y="302.6" width="5.6" height="5.6" rx="1.6" fill="#006400"/><rect x="709.7" y="300.9" width="5.6" height="5.6" rx="1.6" fill="#006400"/><rect x="717.7" y="299.1" width="5.6" height="5.6" rx="1.6" fill="#006400"/><rect x="725.7" y="297.0" width="5.6" height="5.6" rx="1.6" fill="#006400"/><rect x="733.7" y="294.9" width="5.6" height="5.6" rx="1.6" fill="#006400"/><rect x="741.7" y="292.9" width="5.6" height="5.6" rx="1.6" fill="#006400"/><rect x="749.7" y="291.0" width="5.6" height="5.6" rx="1.6" fill="#006400"/><rect x="-2.3" y="334.8" width="5.6" height="5.6" rx="1.6" fill="#006400"/><rect x="5.7" y="345.0" width="5.6" height="5.6" rx="1.6" fill="#006400"/><rect x="13.7" y="354.9" width="5.6" height="5.6" rx="1.6" fill="#006400"/><rect x="21.7" y="364.7" width="5.6" height="5.6" rx="1.6" fill="#006400"/><rect x="29.7" y="374.2" width="5.6" height="5.6" rx="1.6" fill="#006400"/><rect x="37.7" y="383.4" width="5.6" height="5.6" rx="1.6" fill="#006400"/><rect x="45.7" y="392.5" width="5.6" height="5.6" rx="1.6" fill="#006400"/><rect x="53.7" y="400.5" width="5.6" height="5.6" rx="1.6" fill="#006400"/><rect x="61.7" y="407.6" width="5.6" height="5.6" rx="1.6" fill="#006400"/><rect x="69.7" y="413.9" width="5.6" height="5.6" rx="1.6" fill="#006400"/><rect x="77.7" y="419.4" width="5.6" height="5.6" rx="1.6" fill="#006400"/><rect x="85.7" y="424.4" width="5.6" height="5.6" rx="1.6" fill="#006400"/><rect x="93.7" y="429.0" width="5.6" height="5.6" rx="1.6" fill="#006400"/><rect x="101.7" y="433.1" width="5.6" height="5.6" rx="1.6" fill="#006400"/><rect x="109.7" y="436.1" width="5.6" height="5.6" rx="1.6" fill="#006400"/><rect x="117.7" y="438.6" width="5.6" height="5.6" rx="1.6" fill="#006400"/><rect x="125.7" y="440.2" width="5.6" height="5.6" rx="1.6" fill="#006400"/><rect x="133.7" y="441.3" width="5.6" height="5.6" rx="1.6" fill="#006400"/><rect x="141.7" y="441.8" width="5.6" height="5.6" rx="1.6" fill="#006400"/><rect x="149.7" y="441.8" width="5.6" height="5.6" rx="1.6" fill="#006400"/><rect x="157.7" y="441.8" width="5.6" height="5.6" rx="1.6" fill="#006400"/><rect x="165.7" y="441.5" width="5.6" height="5.6" rx="1.6" fill="#006400"/><rect x="173.7" y="440.4" width="5.6" height="5.6" rx="1.6" fill="#006400"/><rect x="181.7" y="439.0" width="5.6" height="5.6" rx="1.6" fill="#006400"/><rect x="189.7" y="437.0" width="5.6" height="5.6" rx="1.6" fill="#006400"/><rect x="197.7" y="434.7" width="5.6" height="5.6" rx="1.6" fill="#006400"/><rect x="205.7" y="432.4" width="5.6" height="5.6" rx="1.6" fill="#006400"/><rect x="213.7" y="430.0" width="5.6" height="5.6" rx="1.6" fill="#006400"/><rect x="221.7" y="427.6" width="5.6" height="5.6" rx="1.6" fill="#006400"/><rect x="229.7" y="425.1" width="5.6" height="5.6" rx="1.6" fill="#006400"/><rect x="237.7" y="422.7" width="5.6" height="5.6" rx="1.6" fill="#006400"/><rect x="245.7" y="420.4" width="5.6" height="5.6" rx="1.6" fill="#006400"/><rect x="253.7" y="417.9" width="5.6" height="5.6" rx="1.6" fill="#006400"/><rect x="261.7" y="415.2" width="5.6" height="5.6" rx="1.6" fill="#006400"/><rect x="269.7" y="412.2" width="5.6" height="5.6" rx="1.6" fill="#006400"/><rect x="277.7" y="409.2" width="5.6" height="5.6" rx="1.6" fill="#006400"/><rect x="285.7" y="405.9" width="5.6" height="5.6" rx="1.6" fill="#006400"/><rect x="293.7" y="402.3" width="5.6" height="5.6" rx="1.6" fill="#006400"/><rect x="301.7" y="398.5" width="5.6" height="5.6" rx="1.6" fill="#006400"/><rect x="309.7" y="394.7" width="5.6" height="5.6" rx="1.6" fill="#006400"/><rect x="317.7" y="391.2" width="5.6" height="5.6" rx="1.6" fill="#006400"/><rect x="325.7" y="388.1" width="5.6" height="5.6" rx="1.6" fill="#006400"/><rect x="333.7" y="384.9" width="5.6" height="5.6" rx="1.6" fill="#006400"/><rect x="341.7" y="381.7" width="5.6" height="5.6" rx="1.6" fill="#006400"/><rect x="349.7" y="378.5" width="5.6" height="5.6" rx="1.6" fill="#006400"/><rect x="357.7" y="375.5" width="5.6" height="5.6" rx="1.6" fill="#006400"/><rect x="365.7" y="372.6" width="5.6" height="5.6" rx="1.6" fill="#006400"/><rect x="373.7" y="370.0" width="5.6" height="5.6" rx="1.6" fill="#006400"/><rect x="381.7" y="367.7" width="5.6" height="5.6" rx="1.6" fill="#006400"/><rect x="389.7" y="365.7" width="5.6" height="5.6" rx="1.6" fill="#006400"/><rect x="397.7" y="363.9" width="5.6" height="5.6" rx="1.6" fill="#006400"/><rect x="405.7" y="362.3" width="5.6" height="5.6" rx="1.6" fill="#006400"/><rect x="413.7" y="361.6" width="5.6" height="5.6" rx="1.6" fill="#006400"/><rect x="421.7" y="361.1" width="5.6" height="5.6" rx="1.6" fill="#006400"/><rect x="429.7" y="360.9" width="5.6" height="5.6" rx="1.6" fill="#006400"/><rect x="437.7" y="361.0" width="5.6" height="5.6" rx="1.6" fill="#006400"/><rect x="445.7" y="361.2" width="5.6" height="5.6" rx="1.6" fill="#006400"/><rect x="453.7" y="361.7" width="5.6" height="5.6" rx="1.6" fill="#006400"/><rect x="461.7" y="362.6" width="5.6" height="5.6" rx="1.6" fill="#006400"/><rect x="469.7" y="363.7" width="5.6" height="5.6" rx="1.6" fill="#006400"/><rect x="477.7" y="364.9" width="5.6" height="5.6" rx="1.6" fill="#006400"/><rect x="485.7" y="366.4" width="5.6" height="5.6" rx="1.6" fill="#006400"/><rect x="493.7" y="368.7" width="5.6" height="5.6" rx="1.6" fill="#006400"/><rect x="501.7" y="371.7" width="5.6" height="5.6" rx="1.6" fill="#006400"/><rect x="509.7" y="375.0" width="5.6" height="5.6" rx="1.6" fill="#006400"/><rect x="517.7" y="379.1" width="5.6" height="5.6" rx="1.6" fill="#006400"/><rect x="525.7" y="383.5" width="5.6" height="5.6" rx="1.6" fill="#006400"/><rect x="533.7" y="388.2" width="5.6" height="5.6" rx="1.6" fill="#006400"/><rect x="541.7" y="393.1" width="5.6" height="5.6" rx="1.6" fill="#006400"/><rect x="549.7" y="397.9" width="5.6" height="5.6" rx="1.6" fill="#006400"/><rect x="557.7" y="402.7" width="5.6" height="5.6" rx="1.6" fill="#006400"/><rect x="565.7" y="407.6" width="5.6" height="5.6" rx="1.6" fill="#006400"/><rect x="573.7" y="412.7" width="5.6" height="5.6" rx="1.6" fill="#006400"/><rect x="581.7" y="416.9" width="5.6" height="5.6" rx="1.6" fill="#006400"/><rect x="589.7" y="420.7" width="5.6" height="5.6" rx="1.6" fill="#006400"/><rect x="597.7" y="423.5" width="5.6" height="5.6" rx="1.6" fill="#006400"/><rect x="605.7" y="425.8" width="5.6" height="5.6" rx="1.6" fill="#006400"/><rect x="613.7" y="427.4" width="5.6" height="5.6" rx="1.6" fill="#006400"/><rect x="621.7" y="428.5" width="5.6" height="5.6" rx="1.6" fill="#006400"/><rect x="629.7" y="429.2" width="5.6" height="5.6" rx="1.6" fill="#006400"/><rect x="637.7" y="429.5" width="5.6" height="5.6" rx="1.6" fill="#006400"/><rect x="645.7" y="429.7" width="5.6" height="5.6" rx="1.6" fill="#006400"/><rect x="653.7" y="429.7" width="5.6" height="5.6" rx="1.6" fill="#006400"/><rect x="661.7" y="429.3" width="5.6" height="5.6" rx="1.6" fill="#006400"/><rect x="669.7" y="428.6" width="5.6" height="5.6" rx="1.6" fill="#006400"/><rect x="677.7" y="427.5" width="5.6" height="5.6" rx="1.6" fill="#006400"/><rect x="685.7" y="425.7" width="5.6" height="5.6" rx="1.6" fill="#006400"/><rect x="693.7" y="423.8" width="5.6" height="5.6" rx="1.6" fill="#006400"/><rect x="701.7" y="421.5" width="5.6" height="5.6" rx="1.6" fill="#006400"/><rect x="709.7" y="418.8" width="5.6" height="5.6" rx="1.6" fill="#006400"/><rect x="717.7" y="415.4" width="5.6" height="5.6" rx="1.6" fill="#006400"/><rect x="725.7" y="411.5" width="5.6" height="5.6" rx="1.6" fill="#006400"/><rect x="733.7" y="407.9" width="5.6" height="5.6" rx="1.6" fill="#006400"/><rect x="741.7" y="404.4" width="5.6" height="5.6" rx="1.6" fill="#006400"/><rect x="749.7" y="400.7" width="5.6" height="5.6" rx="1.6" fill="#006400"/>
<polygon points="756.0,294.5 758.0,294.1 760.0,293.7 762.0,293.3 764.0,292.9 766.0,292.4 768.0,292.0 770.0,291.5 772.0,291.0 774.0,290.5 776.0,289.9 778.0,289.4 780.0,288.9 782.0,288.4 784.0,288.0 786.0,287.6 788.0,287.3 790.0,286.9 792.0,286.6 794.0,286.3 796.0,286.1 798.0,286.0 800.0,285.9 802.0,285.8 804.0,285.7 806.0,285.7 808.0,285.6 810.0,285.5 812.0,285.5 814.0,285.4 816.0,285.4 818.0,285.3 820.0,285.3 822.0,285.2 824.0,285.2 826.0,285.1 828.0,285.1 830.0,285.0 832.0,285.0 834.0,285.0 836.0,284.9 838.0,284.9 840.0,284.9 842.0,284.9 844.0,284.9 846.0,285.0 848.0,285.0 850.0,285.1 852.0,285.2 854.0,285.3 856.0,285.4 858.0,285.5 860.0,285.6 862.0,285.7 864.0,285.9 866.0,286.1 868.0,286.3 870.0,286.6 872.0,286.8 874.0,287.1 876.0,287.4 878.0,287.6 880.0,287.8 882.0,288.1 884.0,288.3 886.0,288.5 888.0,288.7 890.0,288.9 892.0,289.2 894.0,289.4 896.0,289.6 898.0,289.9 900.0,290.1 902.0,290.3 904.0,290.6 906.0,290.8 908.0,291.1 910.0,291.4 912.0,291.7 914.0,292.0 916.0,292.3 918.0,292.6 920.0,293.0 922.0,293.3 924.0,293.7 926.0,294.2 928.0,294.6 930.0,295.0 932.0,295.5 934.0,296.0 936.0,296.4 938.0,296.9 940.0,297.4 942.0,297.9 944.0,298.4 946.0,298.9 948.0,299.4 950.0,299.9 952.0,300.4 954.0,300.9 956.0,301.4 958.0,301.9 960.0,302.4 962.0,302.9 964.0,303.5 966.0,304.0 968.0,304.5 970.0,305.0 972.0,305.4 974.0,305.9 976.0,306.3 978.0,306.7 980.0,307.1 982.0,307.5 984.0,307.8 986.0,308.2 988.0,308.6 990.0,308.9 992.0,309.3 994.0,309.6 996.0,309.9 998.0,310.3 1000.0,310.6 1002.0,310.9 1004.0,311.2 1006.0,311.5 1008.0,311.8 1010.0,312.1 1012.0,312.4 1014.0,312.7 1016.0,313.0 1018.0,313.3 1020.0,313.5 1022.0,313.8 1024.0,314.0 1026.0,314.3 1028.0,314.5 1030.0,314.8 1032.0,315.0 1034.0,315.3 1036.0,315.5 1038.0,315.7 1040.0,316.0 1042.0,316.2 1044.0,316.5 1046.0,316.7 1048.0,317.0 1050.0,317.2 1052.0,317.4 1054.0,317.7 1056.0,317.9 1058.0,318.2 1060.0,318.4 1062.0,318.6 1064.0,318.9 1066.0,319.1 1068.0,319.4 1070.0,319.6 1072.0,319.8 1074.0,320.1 1076.0,320.3 1078.0,320.6 1080.0,320.8 1082.0,321.1 1084.0,321.4 1086.0,321.6 1088.0,321.9 1090.0,322.2 1092.0,322.5 1094.0,322.9 1096.0,323.2 1098.0,323.5 1100.0,323.7 1102.0,323.9 1104.0,324.1 1106.0,324.2 1108.0,324.4 1110.0,324.6 1112.0,324.8 1114.0,324.9 1116.0,325.1 1118.0,325.2 1120.0,325.4 1122.0,325.5 1124.0,325.6 1126.0,325.7 1128.0,325.8 1130.0,325.9 1132.0,325.9 1134.0,326.0 1136.0,326.0 1138.0,326.0 1140.0,326.0 1142.0,326.0 1144.0,326.0 1146.0,326.0 1148.0,326.0 1150.0,326.0 1152.0,326.0 1154.0,326.0 1156.0,326.0 1158.0,326.0 1160.0,326.0 1162.0,326.0 1164.0,326.0 1166.0,326.0 1168.0,326.0 1170.0,326.0 1172.0,326.0 1174.0,326.0 1176.0,326.0 1178.0,326.0 1180.0,326.0 1182.0,326.0 1184.0,326.0 1186.0,326.0 1188.0,326.0 1190.0,326.0 1192.0,326.0 1194.0,326.0 1196.0,326.0 1198.0,326.0 1200.0,326.0 1202.0,326.0 1204.0,326.0 1206.0,326.0 1208.0,326.0 1210.0,326.0 1212.0,326.0 1214.0,326.0 1216.0,326.0 1218.0,326.0 1220.0,326.0 1222.0,326.0 1224.0,326.0 1226.0,326.1 1228.0,326.2 1230.0,326.4 1232.0,326.6 1234.0,326.8 1236.0,327.0 1236.0,398.0 1234.0,397.9 1232.0,397.9 1230.0,397.8 1228.0,397.8 1226.0,397.7 1224.0,397.7 1222.0,397.6 1220.0,397.6 1218.0,397.5 1216.0,397.5 1214.0,397.4 1212.0,397.4 1210.0,397.3 1208.0,397.3 1206.0,397.3 1204.0,397.2 1202.0,397.2 1200.0,397.1 1198.0,397.1 1196.0,397.0 1194.0,397.0 1192.0,396.9 1190.0,396.9 1188.0,396.9 1186.0,396.8 1184.0,396.8 1182.0,396.7 1180.0,396.7 1178.0,396.7 1176.0,396.6 1174.0,396.6 1172.0,396.6 1170.0,396.5 1168.0,396.5 1166.0,396.4 1164.0,396.4 1162.0,396.3 1160.0,396.3 1158.0,396.2 1156.0,396.2 1154.0,396.1 1152.0,396.0 1150.0,396.0 1148.0,395.9 1146.0,395.8 1144.0,395.8 1142.0,395.7 1140.0,395.6 1138.0,395.5 1136.0,395.4 1134.0,395.3 1132.0,395.2 1130.0,395.1 1128.0,395.0 1126.0,394.9 1124.0,394.7 1122.0,394.6 1120.0,394.4 1118.0,394.3 1116.0,394.1 1114.0,394.0 1112.0,393.8 1110.0,393.6 1108.0,393.4 1106.0,393.2 1104.0,392.9 1102.0,392.7 1100.0,392.4 1098.0,392.1 1096.0,391.8 1094.0,391.5 1092.0,391.1 1090.0,390.8 1088.0,390.4 1086.0,390.1 1084.0,389.7 1082.0,389.3 1080.0,388.9 1078.0,388.5 1076.0,388.1 1074.0,387.7 1072.0,387.3 1070.0,386.8 1068.0,386.4 1066.0,386.0 1064.0,385.6 1062.0,385.2 1060.0,384.8 1058.0,384.5 1056.0,384.1 1054.0,383.7 1052.0,383.3 1050.0,382.9 1048.0,382.5 1046.0,382.1 1044.0,381.7 1042.0,381.3 1040.0,380.9 1038.0,380.5 1036.0,380.1 1034.0,379.7 1032.0,379.3 1030.0,378.9 1028.0,378.5 1026.0,378.1 1024.0,377.7 1022.0,377.3 1020.0,376.9 1018.0,376.5 1016.0,376.1 1014.0,375.7 1012.0,375.3 1010.0,374.8 1008.0,374.4 1006.0,373.9 1004.0,373.4 1002.0,372.9 1000.0,372.4 998.0,371.9 996.0,371.3 994.0,370.8 992.0,370.2 990.0,369.7 988.0,369.1 986.0,368.5 984.0,367.8 982.0,367.2 980.0,366.6 978.0,366.0 976.0,365.4 974.0,364.8 972.0,364.3 970.0,363.7 968.0,363.2 966.0,362.7 964.0,362.1 962.0,361.6 960.0,361.2 958.0,360.7 956.0,360.3 954.0,359.9 952.0,359.5 950.0,359.1 948.0,358.8 946.0,358.5 944.0,358.1 942.0,357.8 940.0,357.6 938.0,357.3 936.0,357.1 934.0,356.9 932.0,356.7 930.0,356.5 928.0,356.4 926.0,356.2 924.0,356.1 922.0,355.9 920.0,355.8 918.0,355.7 916.0,355.7 914.0,355.7 912.0,355.6 910.0,355.6 908.0,355.6 906.0,355.6 904.0,355.5 902.0,355.5 900.0,355.5 898.0,355.5 896.0,355.5 894.0,355.5 892.0,355.6 890.0,355.6 888.0,355.7 886.0,355.7 884.0,355.8 882.0,355.9 880.0,356.0 878.0,356.1 876.0,356.2 874.0,356.4 872.0,356.7 870.0,356.9 868.0,357.3 866.0,357.6 864.0,358.0 862.0,358.3 860.0,358.7 858.0,359.1 856.0,359.5 854.0,360.0 852.0,360.5 850.0,361.1 848.0,361.6 846.0,362.1 844.0,362.6 842.0,363.1 840.0,363.6 838.0,364.0 836.0,364.5 834.0,365.0 832.0,365.5 830.0,366.0 828.0,366.5 826.0,367.1 824.0,367.7 822.0,368.3 820.0,369.0 818.0,369.7 816.0,370.4 814.0,371.1 812.0,371.9 810.0,372.6 808.0,373.4 806.0,374.2 804.0,375.0 802.0,375.9 800.0,376.8 798.0,377.7 796.0,378.6 794.0,379.5 792.0,380.5 790.0,381.5 788.0,382.4 786.0,383.5 784.0,384.5 782.0,385.6 780.0,386.6 778.0,387.7 776.0,388.9 774.0,390.0 772.0,391.1 770.0,392.2 768.0,393.4 766.0,394.5 764.0,395.7 762.0,396.9 760.0,398.1 758.0,399.3 756.0,400.5" fill="#808080"/><rect x="757.8" y="289.9" width="5.4" height="5.4" rx="1.6" fill="#808080"/><rect x="765.8" y="288.2" width="5.4" height="5.4" rx="1.6" fill="#808080"/><rect x="773.8" y="286.1" width="5.4" height="5.4" rx="1.6" fill="#808080"/><rect x="781.8" y="284.2" width="5.4" height="5.4" rx="1.6" fill="#808080"/><rect x="789.8" y="282.8" width="5.4" height="5.4" rx="1.6" fill="#808080"/><rect x="797.8" y="282.2" width="5.4" height="5.4" rx="1.6" fill="#808080"/><rect x="805.8" y="281.9" width="5.4" height="5.4" rx="1.6" fill="#808080"/><rect x="813.8" y="281.7" width="5.4" height="5.4" rx="1.6" fill="#808080"/><rect x="821.8" y="281.5" width="5.4" height="5.4" rx="1.6" fill="#808080"/><rect x="829.8" y="281.3" width="5.4" height="5.4" rx="1.6" fill="#808080"/><rect x="837.8" y="281.2" width="5.4" height="5.4" rx="1.6" fill="#808080"/><rect x="845.8" y="281.4" width="5.4" height="5.4" rx="1.6" fill="#808080"/><rect x="853.8" y="281.7" width="5.4" height="5.4" rx="1.6" fill="#808080"/><rect x="861.8" y="282.3" width="5.4" height="5.4" rx="1.6" fill="#808080"/><rect x="869.8" y="283.2" width="5.4" height="5.4" rx="1.6" fill="#808080"/><rect x="877.8" y="284.2" width="5.4" height="5.4" rx="1.6" fill="#808080"/><rect x="885.8" y="285.1" width="5.4" height="5.4" rx="1.6" fill="#808080"/><rect x="893.8" y="286.0" width="5.4" height="5.4" rx="1.6" fill="#808080"/><rect x="901.8" y="286.9" width="5.4" height="5.4" rx="1.6" fill="#808080"/><rect x="909.8" y="288.0" width="5.4" height="5.4" rx="1.6" fill="#808080"/><rect x="917.8" y="289.4" width="5.4" height="5.4" rx="1.6" fill="#808080"/><rect x="925.8" y="291.0" width="5.4" height="5.4" rx="1.6" fill="#808080"/><rect x="933.8" y="292.9" width="5.4" height="5.4" rx="1.6" fill="#808080"/><rect x="941.8" y="294.8" width="5.4" height="5.4" rx="1.6" fill="#808080"/><rect x="949.8" y="296.8" width="5.4" height="5.4" rx="1.6" fill="#808080"/><rect x="957.8" y="298.8" width="5.4" height="5.4" rx="1.6" fill="#808080"/><rect x="965.8" y="300.9" width="5.4" height="5.4" rx="1.6" fill="#808080"/><rect x="973.8" y="302.7" width="5.4" height="5.4" rx="1.6" fill="#808080"/><rect x="981.8" y="304.2" width="5.4" height="5.4" rx="1.6" fill="#808080"/><rect x="989.8" y="305.7" width="5.4" height="5.4" rx="1.6" fill="#808080"/><rect x="997.8" y="307.0" width="5.4" height="5.4" rx="1.6" fill="#808080"/><rect x="1005.8" y="308.2" width="5.4" height="5.4" rx="1.6" fill="#808080"/><rect x="1013.8" y="309.3" width="5.4" height="5.4" rx="1.6" fill="#808080"/><rect x="1021.8" y="310.4" width="5.4" height="5.4" rx="1.6" fill="#808080"/><rect x="1029.8" y="311.4" width="5.4" height="5.4" rx="1.6" fill="#808080"/><rect x="1037.8" y="312.3" width="5.4" height="5.4" rx="1.6" fill="#808080"/><rect x="1045.8" y="313.3" width="5.4" height="5.4" rx="1.6" fill="#808080"/><rect x="1053.8" y="314.3" width="5.4" height="5.4" rx="1.6" fill="#808080"/><rect x="1061.8" y="315.2" width="5.4" height="5.4" rx="1.6" fill="#808080"/><rect x="1069.8" y="316.2" width="5.4" height="5.4" rx="1.6" fill="#808080"/><rect x="1077.8" y="317.2" width="5.4" height="5.4" rx="1.6" fill="#808080"/><rect x="1085.8" y="318.3" width="5.4" height="5.4" rx="1.6" fill="#808080"/><rect x="1093.8" y="319.6" width="5.4" height="5.4" rx="1.6" fill="#808080"/><rect x="1101.8" y="320.4" width="5.4" height="5.4" rx="1.6" fill="#808080"/><rect x="1109.8" y="321.1" width="5.4" height="5.4" rx="1.6" fill="#808080"/><rect x="1117.8" y="321.7" width="5.4" height="5.4" rx="1.6" fill="#808080"/><rect x="1125.8" y="322.1" width="5.4" height="5.4" rx="1.6" fill="#808080"/><rect x="1133.8" y="322.3" width="5.4" height="5.4" rx="1.6" fill="#808080"/><rect x="1141.8" y="322.3" width="5.4" height="5.4" rx="1.6" fill="#808080"/><rect x="1149.8" y="322.3" width="5.4" height="5.4" rx="1.6" fill="#808080"/><rect x="1157.8" y="322.3" width="5.4" height="5.4" rx="1.6" fill="#808080"/><rect x="1165.8" y="322.3" width="5.4" height="5.4" rx="1.6" fill="#808080"/><rect x="1173.8" y="322.3" width="5.4" height="5.4" rx="1.6" fill="#808080"/><rect x="1181.8" y="322.3" width="5.4" height="5.4" rx="1.6" fill="#808080"/><rect x="1189.8" y="322.3" width="5.4" height="5.4" rx="1.6" fill="#808080"/><rect x="1197.8" y="322.3" width="5.4" height="5.4" rx="1.6" fill="#808080"/><rect x="1205.8" y="322.3" width="5.4" height="5.4" rx="1.6" fill="#808080"/><rect x="1213.8" y="322.3" width="5.4" height="5.4" rx="1.6" fill="#808080"/><rect x="1221.8" y="322.3" width="5.4" height="5.4" rx="1.6" fill="#808080"/><rect x="1229.8" y="322.9" width="5.4" height="5.4" rx="1.6" fill="#808080"/><rect x="757.8" y="396.1" width="5.4" height="5.4" rx="1.6" fill="#808080"/><rect x="765.8" y="391.4" width="5.4" height="5.4" rx="1.6" fill="#808080"/><rect x="773.8" y="386.9" width="5.4" height="5.4" rx="1.6" fill="#808080"/><rect x="781.8" y="382.5" width="5.4" height="5.4" rx="1.6" fill="#808080"/><rect x="789.8" y="378.6" width="5.4" height="5.4" rx="1.6" fill="#808080"/><rect x="797.8" y="374.9" width="5.4" height="5.4" rx="1.6" fill="#808080"/><rect x="805.8" y="371.5" width="5.4" height="5.4" rx="1.6" fill="#808080"/><rect x="813.8" y="368.5" width="5.4" height="5.4" rx="1.6" fill="#808080"/><rect x="821.8" y="365.8" width="5.4" height="5.4" rx="1.6" fill="#808080"/><rect x="829.8" y="363.6" width="5.4" height="5.4" rx="1.6" fill="#808080"/><rect x="837.8" y="361.7" width="5.4" height="5.4" rx="1.6" fill="#808080"/><rect x="845.8" y="359.8" width="5.4" height="5.4" rx="1.6" fill="#808080"/><rect x="853.8" y="357.7" width="5.4" height="5.4" rx="1.6" fill="#808080"/><rect x="861.8" y="356.2" width="5.4" height="5.4" rx="1.6" fill="#808080"/><rect x="869.8" y="354.9" width="5.4" height="5.4" rx="1.6" fill="#808080"/><rect x="877.8" y="354.3" width="5.4" height="5.4" rx="1.6" fill="#808080"/><rect x="885.8" y="353.9" width="5.4" height="5.4" rx="1.6" fill="#808080"/><rect x="893.8" y="353.8" width="5.4" height="5.4" rx="1.6" fill="#808080"/><rect x="901.8" y="353.8" width="5.4" height="5.4" rx="1.6" fill="#808080"/><rect x="909.8" y="353.9" width="5.4" height="5.4" rx="1.6" fill="#808080"/><rect x="917.8" y="354.2" width="5.4" height="5.4" rx="1.6" fill="#808080"/><rect x="925.8" y="354.7" width="5.4" height="5.4" rx="1.6" fill="#808080"/><rect x="933.8" y="355.4" width="5.4" height="5.4" rx="1.6" fill="#808080"/><rect x="941.8" y="356.5" width="5.4" height="5.4" rx="1.6" fill="#808080"/><rect x="949.8" y="357.9" width="5.4" height="5.4" rx="1.6" fill="#808080"/><rect x="957.8" y="359.6" width="5.4" height="5.4" rx="1.6" fill="#808080"/><rect x="965.8" y="361.6" width="5.4" height="5.4" rx="1.6" fill="#808080"/><rect x="973.8" y="363.8" width="5.4" height="5.4" rx="1.6" fill="#808080"/><rect x="981.8" y="366.3" width="5.4" height="5.4" rx="1.6" fill="#808080"/><rect x="989.8" y="368.7" width="5.4" height="5.4" rx="1.6" fill="#808080"/><rect x="997.8" y="370.8" width="5.4" height="5.4" rx="1.6" fill="#808080"/><rect x="1005.8" y="372.8" width="5.4" height="5.4" rx="1.6" fill="#808080"/><rect x="1013.8" y="374.5" width="5.4" height="5.4" rx="1.6" fill="#808080"/><rect x="1021.8" y="376.1" width="5.4" height="5.4" rx="1.6" fill="#808080"/><rect x="1029.8" y="377.7" width="5.4" height="5.4" rx="1.6" fill="#808080"/><rect x="1037.8" y="379.3" width="5.4" height="5.4" rx="1.6" fill="#808080"/><rect x="1045.8" y="380.9" width="5.4" height="5.4" rx="1.6" fill="#808080"/><rect x="1053.8" y="382.5" width="5.4" height="5.4" rx="1.6" fill="#808080"/><rect x="1061.8" y="384.0" width="5.4" height="5.4" rx="1.6" fill="#808080"/><rect x="1069.8" y="385.7" width="5.4" height="5.4" rx="1.6" fill="#808080"/><rect x="1077.8" y="387.3" width="5.4" height="5.4" rx="1.6" fill="#808080"/><rect x="1085.8" y="388.8" width="5.4" height="5.4" rx="1.6" fill="#808080"/><rect x="1093.8" y="390.2" width="5.4" height="5.4" rx="1.6" fill="#808080"/><rect x="1101.8" y="391.3" width="5.4" height="5.4" rx="1.6" fill="#808080"/><rect x="1109.8" y="392.1" width="5.4" height="5.4" rx="1.6" fill="#808080"/><rect x="1117.8" y="392.8" width="5.4" height="5.4" rx="1.6" fill="#808080"/><rect x="1125.8" y="393.3" width="5.4" height="5.4" rx="1.6" fill="#808080"/><rect x="1133.8" y="393.7" width="5.4" height="5.4" rx="1.6" fill="#808080"/><rect x="1141.8" y="394.1" width="5.4" height="5.4" rx="1.6" fill="#808080"/><rect x="1149.8" y="394.4" width="5.4" height="5.4" rx="1.6" fill="#808080"/><rect x="1157.8" y="394.6" width="5.4" height="5.4" rx="1.6" fill="#808080"/><rect x="1165.8" y="394.8" width="5.4" height="5.4" rx="1.6" fill="#808080"/><rect x="1173.8" y="394.9" width="5.4" height="5.4" rx="1.6" fill="#808080"/><rect x="1181.8" y="395.1" width="5.4" height="5.4" rx="1.6" fill="#808080"/><rect x="1189.8" y="395.2" width="5.4" height="5.4" rx="1.6" fill="#808080"/><rect x="1197.8" y="395.4" width="5.4" height="5.4" rx="1.6" fill="#808080"/><rect x="1205.8" y="395.6" width="5.4" height="5.4" rx="1.6" fill="#808080"/><rect x="1213.8" y="395.8" width="5.4" height="5.4" rx="1.6" fill="#808080"/><rect x="1221.8" y="396.0" width="5.4" height="5.4" rx="1.6" fill="#808080"/><rect x="1229.8" y="396.2" width="5.4" height="5.4" rx="1.6" fill="#808080"/>
<polyline points="0.0,73.3 2.0,75.8 4.0,78.3 6.0,80.8 8.0,83.3 10.0,85.8 12.0,88.3 14.0,90.9 16.0,93.4 18.0,96.0 20.0,98.6 22.0,101.2 24.0,103.8 26.0,106.4 28.0,109.1 30.0,111.7 32.0,114.3 34.0,117.0 36.0,119.7 38.0,122.3 40.0,125.0 42.0,127.7 44.0,130.4 46.0,133.1 48.0,135.9 50.0,138.7 52.0,141.6 54.0,144.4 56.0,147.2 58.0,150.0 60.0,152.8 62.0,155.5 64.0,158.2 66.0,160.9 68.0,163.5 70.0,166.1 72.0,168.7 74.0,171.3 76.0,173.8 78.0,176.3 80.0,178.8 82.0,181.3 84.0,183.7 86.0,186.0 88.0,188.4 90.0,190.7 92.0,193.0 94.0,195.3 96.0,197.6 98.0,199.8 100.0,202.1 102.0,204.3 104.0,206.6 106.0,208.8 108.0,211.1 110.0,213.2 112.0,215.4 114.0,217.4 116.0,219.4 118.0,221.3 120.0,223.2 122.0,225.1 124.0,227.0 126.0,228.8 128.0,230.6 130.0,232.4 132.0,234.2 134.0,235.9 136.0,237.6 138.0,239.2 140.0,240.8 142.0,242.4 144.0,243.9 146.0,245.3 148.0,246.7 150.0,248.1 152.0,249.4 154.0,250.8 156.0,252.1 158.0,253.4 160.0,254.6 162.0,255.8 164.0,257.0 166.0,258.0 168.0,259.1 170.0,260.0 172.0,260.9 174.0,261.6 176.0,262.4 178.0,263.1 180.0,263.8 182.0,264.4 184.0,265.1 186.0,265.7 188.0,266.2 190.0,266.8 192.0,267.3 194.0,267.7 196.0,268.2 198.0,268.6 200.0,269.0 202.0,269.3 204.0,269.7 206.0,270.1 208.0,270.4 210.0,270.8 212.0,271.1 214.0,271.5 216.0,271.7 218.0,272.0 220.0,272.2 222.0,272.4 224.0,272.6 226.0,272.7 228.0,272.7 230.0,272.7 232.0,272.6 234.0,272.5 236.0,272.3 238.0,272.1 240.0,271.8 242.0,271.5 244.0,271.3 246.0,271.0 248.0,270.7 250.0,270.4 252.0,270.0 254.0,269.5 256.0,269.1 258.0,268.6 260.0,268.0 262.0,267.5 264.0,266.9 266.0,266.3 268.0,265.7 270.0,265.1 272.0,264.5 274.0,263.9 276.0,263.2 278.0,262.5 280.0,261.8 282.0,261.1 284.0,260.4 286.0,259.6 288.0,258.9 290.0,258.1 292.0,257.3 294.0,256.5 296.0,255.7 298.0,255.0 300.0,254.2 302.0,253.6 304.0,252.9 306.0,252.3 308.0,251.6 310.0,251.0 312.0,250.4 314.0,249.8 316.0,249.1 318.0,248.5 320.0,247.9 322.0,247.2 324.0,246.5 326.0,245.8 328.0,245.1 330.0,244.4 332.0,243.7 334.0,243.0 336.0,242.3 338.0,241.6 340.0,240.8 342.0,240.1 344.0,239.3 346.0,238.5 348.0,237.7 350.0,236.9 352.0,236.0 354.0,235.2 356.0,234.3 358.0,233.3 360.0,232.4 362.0,231.5 364.0,230.5 366.0,229.6 368.0,228.6 370.0,227.6 372.0,226.7 374.0,225.7 376.0,224.7 378.0,223.8 380.0,222.8 382.0,221.8 384.0,220.8 386.0,219.7 388.0,218.7 390.0,217.7 392.0,216.7 394.0,215.7 396.0,214.7 398.0,213.7 400.0,212.7 402.0,211.6 404.0,210.6 406.0,209.6 408.0,208.6 410.0,207.5 412.0,206.5 414.0,205.5 416.0,204.6 418.0,203.6 420.0,202.7 422.0,201.8 424.0,200.8 426.0,199.9 428.0,199.1 430.0,198.2 432.0,197.3 434.0,196.5 436.0,195.6 438.0,194.8 440.0,194.1 442.0,193.4 444.0,192.7 446.0,192.0 448.0,191.3 450.0,190.7 452.0,190.1 454.0,189.4 456.0,188.9 458.0,188.3 460.0,187.7 462.0,187.2 464.0,186.7 466.0,186.3 468.0,185.9 470.0,185.5 472.0,185.1 474.0,184.7 476.0,184.4 478.0,184.1 480.0,183.8 482.0,183.5 484.0,183.2 486.0,182.9 488.0,182.6 490.0,182.4 492.0,182.1 494.0,181.9 496.0,181.6 498.0,181.4 500.0,181.1 502.0,180.9 504.0,180.6 506.0,180.4 508.0,180.2 510.0,180.0 512.0,179.8 514.0,179.6 516.0,179.5 518.0,179.3 520.0,179.2 522.0,179.1 524.0,178.9 526.0,178.8 528.0,178.6 530.0,178.5 532.0,178.4 534.0,178.3 536.0,178.3 538.0,178.2 540.0,178.2 542.0,178.2 544.0,178.3 546.0,178.5 548.0,178.8 550.0,179.1 552.0,179.4 554.0,179.8 556.0,180.1 558.0,180.4 560.0,180.8 562.0,181.2 564.0,181.6 566.0,182.0 568.0,182.4 570.0,182.9 572.0,183.4 574.0,183.8 576.0,184.3 578.0,184.8 580.0,185.2 582.0,185.6 584.0,186.1 586.0,186.6 588.0,187.1 590.0,187.6 592.0,188.1 594.0,188.5 596.0,189.0 598.0,189.4 600.0,189.9 602.0,190.3 604.0,190.6 606.0,190.9 608.0,191.2 610.0,191.5 612.0,191.8 614.0,192.1 616.0,192.3 618.0,192.6 620.0,192.8 622.0,193.0 624.0,193.2 626.0,193.4 628.0,193.6 630.0,193.8 632.0,193.9 634.0,194.1 636.0,194.3 638.0,194.5 640.0,194.6 642.0,194.8 644.0,195.0 646.0,195.1 648.0,195.2 650.0,195.3 652.0,195.3 654.0,195.3 656.0,195.3 658.0,195.3 660.0,195.3 662.0,195.3 664.0,195.3 666.0,195.3 668.0,195.3 670.0,195.3 672.0,195.3 674.0,195.3 676.0,195.3 678.0,195.3 680.0,195.3 682.0,195.3 684.0,195.3 686.0,195.3 688.0,195.3 690.0,195.3 692.0,195.3 694.0,195.3 696.0,195.3 698.0,195.3 700.0,195.3 702.0,195.3 704.0,195.3 706.0,195.3 708.0,195.3 710.0,195.3 712.0,195.3 714.0,195.3 716.0,195.3 718.0,195.3 720.0,195.3 722.0,195.3 724.0,195.3 726.0,195.3 728.0,195.3 730.0,195.3 732.0,195.3 734.0,195.3 736.0,195.3 738.0,195.3 740.0,195.3 742.0,195.3 744.0,195.3 746.0,195.3 748.0,195.3 750.0,195.3 752.0,195.3 754.0,195.3 756.0,195.3 758.0,195.3 760.0,195.3 762.0,195.3 764.0,195.3 766.0,195.3 768.0,195.3 770.0,195.3 772.0,195.3 774.0,195.3 776.0,195.4 778.0,195.6 780.0,195.8 782.0,196.1 784.0,196.4 786.0,196.7 788.0,197.0 790.0,197.4 792.0,197.8 794.0,198.2 796.0,198.5 798.0,198.9 800.0,199.4 802.0,199.8 804.0,200.4 806.0,200.9 808.0,201.5 810.0,202.1 812.0,202.7 814.0,203.3 816.0,203.9 818.0,204.5 820.0,205.0 822.0,205.6 824.0,206.1 826.0,206.6 828.0,207.2 830.0,207.7 832.0,208.2 834.0,208.7 836.0,209.3 838.0,209.8 840.0,210.3 842.0,210.9 844.0,211.4 846.0,212.0 848.0,212.6 850.0,213.2 852.0,213.7 854.0,214.4 856.0,215.0 858.0,215.6 860.0,216.2 862.0,216.8 864.0,217.5 866.0,218.2 868.0,218.8 870.0,219.5 872.0,220.2 874.0,220.8 876.0,221.5 878.0,222.2 880.0,222.8 882.0,223.5 884.0,224.2 886.0,224.9 888.0,225.5 890.0,226.2 892.0,226.9 894.0,227.6 896.0,228.3 898.0,229.0 900.0,229.7 902.0,230.3 904.0,231.0 906.0,231.7 908.0,232.3 910.0,232.9 912.0,233.6 914.0,234.2 916.0,234.8 918.0,235.4 920.0,235.9 922.0,236.5 924.0,237.0 926.0,237.5 928.0,238.0 930.0,238.5 932.0,238.9 934.0,239.4 936.0,239.8 938.0,240.3 940.0,240.7 942.0,241.1 944.0,241.6 946.0,242.0 948.0,242.4 950.0,242.8 952.0,243.2 954.0,243.5 956.0,243.9 958.0,244.3 960.0,244.7 962.0,245.0 964.0,245.4 966.0,245.8 968.0,246.1 970.0,246.5 972.0,246.8 974.0,247.2 976.0,247.5 978.0,247.8 980.0,248.2 982.0,248.5 984.0,248.9 986.0,249.2 988.0,249.5 990.0,249.9 992.0,250.2 994.0,250.5 996.0,250.9 998.0,251.2 1000.0,251.5 1002.0,251.8 1004.0,252.1 1006.0,252.4 1008.0,252.7 1010.0,253.0 1012.0,253.3 1014.0,253.6 1016.0,253.8 1018.0,254.1 1020.0,254.3 1022.0,254.6 1024.0,254.8 1026.0,255.0 1028.0,255.2 1030.0,255.4 1032.0,255.6 1034.0,255.8 1036.0,256.0 1038.0,256.2 1040.0,256.4 1042.0,256.5 1044.0,256.7 1046.0,256.9 1048.0,257.0 1050.0,257.2 1052.0,257.3 1054.0,257.5 1056.0,257.7 1058.0,257.8 1060.0,257.9 1062.0,258.1 1064.0,258.2 1066.0,258.4 1068.0,258.5 1070.0,258.6 1072.0,258.8 1074.0,258.9 1076.0,259.0 1078.0,259.1 1080.0,259.3 1082.0,259.4 1084.0,259.5 1086.0,259.7 1088.0,259.8 1090.0,259.9 1092.0,260.1 1094.0,260.2 1096.0,260.3 1098.0,260.4 1100.0,260.5 1102.0,260.6 1104.0,260.7 1106.0,260.8 1108.0,260.9 1110.0,260.9 1112.0,261.0 1114.0,261.0 1116.0,261.0 1118.0,261.0 1120.0,261.0 1122.0,261.0 1124.0,261.0 1126.0,261.0 1128.0,260.9 1130.0,260.9 1132.0,260.9 1134.0,260.9 1136.0,260.9 1138.0,260.8 1140.0,260.8 1142.0,260.8 1144.0,260.7 1146.0,260.7 1148.0,260.7 1150.0,260.6 1152.0,260.6 1154.0,260.5 1156.0,260.5 1158.0,260.5 1160.0,260.4 1162.0,260.4 1164.0,260.3 1166.0,260.3 1168.0,260.2 1170.0,260.2 1172.0,260.1 1174.0,260.1 1176.0,260.0 1178.0,259.9 1180.0,259.8 1182.0,259.7 1184.0,259.6 1186.0,259.5 1188.0,259.3 1190.0,259.1 1192.0,259.0 1194.0,258.8 1196.0,258.6 1198.0,258.4 1200.0,258.3 1202.0,258.1 1204.0,258.0 1206.0,257.8 1208.0,257.7 1210.0,257.6 1212.0,257.6 1214.0,257.5 1216.0,257.5 1218.0,257.5 1220.0,257.5 1222.0,257.5 1224.0,257.5 1226.0,257.5 1228.0,257.5 1230.0,257.5" fill="none" stroke="#ff0000" stroke-width="1" stroke-dasharray="18 6"/>
<polyline points="0.0,464.5 2.0,467.1 4.0,469.7 6.0,472.2 8.0,474.8 10.0,477.2 12.0,479.7 14.0,482.1 16.0,484.5 18.0,486.9 20.0,489.3 22.0,491.6 24.0,493.8 26.0,496.1 28.0,498.3 30.0,500.5 32.0,502.6 34.0,504.7 36.0,506.8 38.0,508.8 40.0,510.8 42.0,512.8 44.0,514.8 46.0,516.7 48.0,518.7 50.0,520.7 52.0,522.7 54.0,524.7 56.0,526.6 58.0,528.5 60.0,530.4 62.0,532.2 64.0,533.9 66.0,535.6 68.0,537.2 70.0,538.8 72.0,540.2 74.0,541.6 76.0,542.8 78.0,544.0 80.0,545.0 82.0,546.0 84.0,546.9 86.0,547.9 88.0,548.9 90.0,549.8 92.0,550.8 94.0,551.7 96.0,552.6 98.0,553.4 100.0,554.2 102.0,555.0 104.0,555.8 106.0,556.5 108.0,557.1 110.0,557.7 112.0,558.3 114.0,558.7 116.0,559.1 118.0,559.5 120.0,559.7 122.0,559.9 124.0,560.0 126.0,560.0 128.0,559.9 130.0,559.7 132.0,559.5 134.0,559.1 136.0,558.7 138.0,558.3 140.0,557.7 142.0,557.1 144.0,556.5 146.0,555.8 148.0,555.0 150.0,554.2 152.0,553.4 154.0,552.5 156.0,551.6 158.0,550.7 160.0,549.8 162.0,548.9 164.0,547.9 166.0,546.9 168.0,546.0 170.0,545.0 172.0,543.9 174.0,542.7 176.0,541.3 178.0,539.7 180.0,538.0 182.0,536.2 184.0,534.3 186.0,532.3 188.0,530.3 190.0,528.3 192.0,526.2 194.0,524.2 196.0,522.2 198.0,520.3 200.0,518.5 202.0,516.7 204.0,515.1 206.0,513.6 208.0,512.3 210.0,511.2 212.0,510.3 214.0,509.5 216.0,508.9 218.0,508.1 220.0,507.4 222.0,506.5 224.0,505.7 226.0,504.9 228.0,504.0 230.0,503.2 232.0,502.4 234.0,501.5 236.0,500.8 238.0,500.0 240.0,499.3 242.0,498.5 244.0,497.8 246.0,497.1 248.0,496.4 250.0,495.7 252.0,495.0 254.0,494.3 256.0,493.5 258.0,492.8 260.0,492.1 262.0,491.3 264.0,490.5 266.0,489.8 268.0,489.0 270.0,488.2 272.0,487.4 274.0,486.6 276.0,485.8 278.0,485.0 280.0,484.2 282.0,483.3 284.0,482.5 286.0,481.6 288.0,480.8 290.0,479.9 292.0,479.0 294.0,478.1 296.0,477.2 298.0,476.4 300.0,475.5 302.0,474.7 304.0,473.8 306.0,473.0 308.0,472.2 310.0,471.3 312.0,470.4 314.0,469.5 316.0,468.5 318.0,467.4 320.0,466.4 322.0,465.3 324.0,464.2 326.0,463.2 328.0,462.1 330.0,461.0 332.0,460.0 334.0,459.0 336.0,458.0 338.0,457.1 340.0,456.3 342.0,455.4 344.0,454.6 346.0,453.8 348.0,453.0 350.0,452.1 352.0,451.4 354.0,450.6 356.0,449.8 358.0,449.1 360.0,448.4 362.0,447.8 364.0,447.2 366.0,446.6 368.0,446.1 370.0,445.6 372.0,445.2 374.0,444.7 376.0,444.3 378.0,443.9 380.0,443.5 382.0,443.1 384.0,442.7 386.0,442.4 388.0,442.0 390.0,441.7 392.0,441.5 394.0,441.3 396.0,441.1 398.0,441.0 400.0,440.9 402.0,440.9 404.0,440.9 406.0,441.0 408.0,441.1 410.0,441.2 412.0,441.3 414.0,441.4 416.0,441.6 418.0,441.7 420.0,441.9 422.0,442.1 424.0,442.3 426.0,442.5 428.0,442.7 430.0,442.9 432.0,443.2 434.0,443.6 436.0,443.9 438.0,444.3 440.0,444.7 442.0,445.2 444.0,445.6 446.0,446.1 448.0,446.5 450.0,447.0 452.0,447.5 454.0,448.0 456.0,448.6 458.0,449.2 460.0,449.8 462.0,450.4 464.0,451.1 466.0,451.7 468.0,452.4 470.0,453.1 472.0,453.8 474.0,454.6 476.0,455.3 478.0,456.1 480.0,456.9 482.0,457.7 484.0,458.5 486.0,459.4 488.0,460.2 490.0,461.1 492.0,462.1 494.0,463.1 496.0,464.1 498.0,465.1 500.0,466.2 502.0,467.3 504.0,468.5 506.0,469.8 508.0,471.1 510.0,472.4 512.0,473.8 514.0,475.2 516.0,476.6 518.0,478.1 520.0,479.5 522.0,481.0 524.0,482.5 526.0,484.0 528.0,485.6 530.0,487.2 532.0,488.9 534.0,490.5 536.0,492.2 538.0,493.9 540.0,495.6 542.0,497.2 544.0,498.8 546.0,500.4 548.0,502.0 550.0,503.6 552.0,505.1 554.0,506.7 556.0,508.3 558.0,509.8 560.0,511.3 562.0,512.8 564.0,514.4 566.0,515.9 568.0,517.5 570.0,519.1 572.0,520.6 574.0,522.2 576.0,523.8 578.0,525.3 580.0,526.8 582.0,528.3 584.0,529.8 586.0,531.2 588.0,532.7 590.0,534.0 592.0,535.3 594.0,536.6 596.0,537.8 598.0,538.9 600.0,540.0 602.0,541.1 604.0,542.1 606.0,543.2 608.0,544.3 610.0,545.4 612.0,546.5 614.0,547.6 616.0,548.7 618.0,549.7 620.0,550.8 622.0,551.8 624.0,552.8 626.0,553.7 628.0,554.6 630.0,555.5 632.0,556.2 634.0,557.0 636.0,557.6 638.0,558.2 640.0,558.8 642.0,559.2 644.0,559.5 646.0,559.8 648.0,559.9 650.0,560.0 652.0,560.0 654.0,559.9 656.0,559.7 658.0,559.4 660.0,559.1 662.0,558.8 664.0,558.4 666.0,557.9 668.0,557.4 670.0,556.8 672.0,556.2 674.0,555.6 676.0,554.9 678.0,554.2 680.0,553.4 682.0,552.7 684.0,551.9 686.0,551.0 688.0,550.2 690.0,549.4 692.0,548.5 694.0,547.6 696.0,546.8 698.0,545.9 700.0,545.0 702.0,544.1 704.0,543.0 706.0,541.9 708.0,540.7 710.0,539.3 712.0,537.9 714.0,536.5 716.0,534.9 718.0,533.3 720.0,531.7 722.0,530.0 724.0,528.2 726.0,526.5 728.0,524.7 730.0,522.9 732.0,521.0 734.0,519.2 736.0,517.4 738.0,515.6 740.0,513.8 742.0,512.1 744.0,510.3 746.0,508.7 748.0,507.0 750.0,505.3 752.0,503.6 754.0,501.9 756.0,500.2 758.0,498.5 760.0,496.7 762.0,495.0 764.0,493.3 766.0,491.6 768.0,489.9 770.0,488.2 772.0,486.5 774.0,484.9 776.0,483.3 778.0,481.7 780.0,480.2 782.0,478.6 784.0,477.0 786.0,475.5 788.0,474.0 790.0,472.5 792.0,470.9 794.0,469.4 796.0,468.0 798.0,466.5 800.0,465.0 802.0,463.6 804.0,462.2 806.0,460.8 808.0,459.4 810.0,458.0 812.0,456.6 814.0,455.2 816.0,453.8 818.0,452.4 820.0,451.0 822.0,449.6 824.0,448.3 826.0,446.9 828.0,445.6 830.0,444.3 832.0,443.1 834.0,441.8 836.0,440.7 838.0,439.5 840.0,438.4 842.0,437.4 844.0,436.4 846.0,435.4 848.0,434.4 850.0,433.4 852.0,432.4 854.0,431.5 856.0,430.6 858.0,429.7 860.0,428.8 862.0,427.9 864.0,427.1 866.0,426.4 868.0,425.6 870.0,424.9 872.0,424.3 874.0,423.7 876.0,423.1 878.0,422.6 880.0,422.1 882.0,421.5 884.0,421.0 886.0,420.6 888.0,420.1 890.0,419.6 892.0,419.2 894.0,418.8 896.0,418.4 898.0,418.0 900.0,417.7 902.0,417.4 904.0,417.1 906.0,416.8 908.0,416.6 910.0,416.5 912.0,416.3 914.0,416.2 916.0,416.0 918.0,415.9 920.0,415.7 922.0,415.6 924.0,415.5 926.0,415.3 928.0,415.2 930.0,415.1 932.0,415.0 934.0,415.0 936.0,414.9 938.0,414.9 940.0,414.8 942.0,414.8 944.0,414.8 946.0,414.9 948.0,415.0 950.0,415.1 952.0,415.4 954.0,415.6 956.0,415.9 958.0,416.3 960.0,416.7 962.0,417.1 964.0,417.5 966.0,417.9 968.0,418.4 970.0,418.8 972.0,419.3 974.0,419.7 976.0,420.2 978.0,420.6 980.0,421.0 982.0,421.5 984.0,422.0 986.0,422.5 988.0,423.0 990.0,423.6 992.0,424.2 994.0,424.7 996.0,425.3 998.0,425.9 1000.0,426.5 1002.0,427.1 1004.0,427.8 1006.0,428.4 1008.0,429.0 1010.0,429.6 1012.0,430.2 1014.0,430.8 1016.0,431.4 1018.0,432.1 1020.0,432.7 1022.0,433.4 1024.0,434.1 1026.0,434.7 1028.0,435.4 1030.0,436.1 1032.0,436.7 1034.0,437.4 1036.0,438.1 1038.0,438.7 1040.0,439.3 1042.0,439.9 1044.0,440.5 1046.0,441.1 1048.0,441.7 1050.0,442.2 1052.0,442.7 1054.0,443.3 1056.0,443.8 1058.0,444.3 1060.0,444.8 1062.0,445.3 1064.0,445.8 1066.0,446.3 1068.0,446.8 1070.0,447.3 1072.0,447.8 1074.0,448.2 1076.0,448.7 1078.0,449.1 1080.0,449.6 1082.0,450.0 1084.0,450.4 1086.0,450.9 1088.0,451.3 1090.0,451.7 1092.0,452.1 1094.0,452.5 1096.0,452.9 1098.0,453.3 1100.0,453.7 1102.0,454.1 1104.0,454.5 1106.0,454.8 1108.0,455.2 1110.0,455.6 1112.0,455.9 1114.0,456.3 1116.0,456.6 1118.0,456.9 1120.0,457.3 1122.0,457.6 1124.0,457.9 1126.0,458.2 1128.0,458.5 1130.0,458.9 1132.0,459.2 1134.0,459.5 1136.0,459.7 1138.0,460.0 1140.0,460.3 1142.0,460.6 1144.0,460.8 1146.0,461.1 1148.0,461.3 1150.0,461.6 1152.0,461.8 1154.0,462.0 1156.0,462.3 1158.0,462.5 1160.0,462.7 1162.0,462.9 1164.0,463.1 1166.0,463.3 1168.0,463.5 1170.0,463.7 1172.0,463.9 1174.0,464.1 1176.0,464.2 1178.0,464.4 1180.0,464.5 1182.0,464.7 1184.0,464.8 1186.0,464.9 1188.0,465.0 1190.0,465.2 1192.0,465.3 1194.0,465.4 1196.0,465.5 1198.0,465.6 1200.0,465.7 1202.0,465.8 1204.0,465.9 1206.0,466.0 1208.0,466.1 1210.0,466.1 1212.0,466.2 1214.0,466.3 1216.0,466.3 1218.0,466.4 1220.0,466.4 1222.0,466.5 1224.0,466.5 1226.0,466.6 1228.0,466.6 1230.0,466.7 1231.9,466.7" fill="none" stroke="#00ff00" stroke-width="1" stroke-dasharray="18 6" stroke-dashoffset="4"/>
<rect x="0" y="290" width="1611" height="1" fill="#778899"/>
<line x1="-16" y1="398.5" x2="1611" y2="398.5" stroke="#ff0000" stroke-width="1" stroke-dasharray="9 6 3 6"/>
<line x1="-16" y1="402.5" x2="1611" y2="402.5" stroke="#2dbe2d" stroke-width="1" stroke-dasharray="9 6 3 6"/>
<rect x="0" y="234" width="1" height="42" fill="#00ff00"/><rect x="-2" y="250" width="5" height="8" fill="#00ff00"/><rect x="8" y="256" width="1" height="79" fill="#00ff00"/><rect x="6" y="256" width="5" height="61" fill="#00ff00"/><rect x="16" y="285" width="1" height="50" fill="#ff0000"/><rect x="14" y="294" width="5" height="23" fill="#ff0000"/><rect x="24" y="290" width="1" height="77" fill="#00ff00"/><rect x="22" y="294" width="5" height="73" fill="#00ff00"/><rect x="22" y="367" width="5" height="43" fill="#ffffff"/><rect x="32" y="384" width="1" height="46" fill="#ffffff"/><rect x="30" y="403" width="5" height="13" fill="#ffffff"/><rect x="40" y="354" width="1" height="30" fill="#ff0000"/><rect x="38" y="356" width="5" height="28" fill="#ff0000"/><rect x="38" y="384" width="5" height="42" fill="#ffffff"/><rect x="48" y="342" width="1" height="36" fill="#ff0000"/><rect x="46" y="351" width="5" height="7" fill="#ff0000"/><rect x="56" y="345" width="1" height="56" fill="#00ff00"/><rect x="54" y="351" width="5" height="41" fill="#00ff00"/><rect x="54" y="400" width="5" height="3" fill="#ff00ff"/><rect x="64" y="385" width="1" height="22" fill="#00ff00"/><rect x="62" y="391" width="5" height="12" fill="#00ff00"/><rect x="62" y="408" width="5" height="6" fill="#ff00ff"/><rect x="72" y="378" width="1" height="36" fill="#00ff00"/><rect x="70" y="401" width="5" height="14" fill="#00ff00"/><rect x="70" y="414" width="5" height="2" fill="#ffffff"/><rect x="80" y="404" width="1" height="16" fill="#00ff00"/><rect x="78" y="413" width="5" height="7" fill="#00ff00"/><rect x="78" y="419" width="5" height="23" fill="#ffffff"/><rect x="88" y="393" width="1" height="31" fill="#00ff00"/><rect x="86" y="424" width="5" height="27" fill="#ffffff"/><rect x="96" y="434" width="1" height="34" fill="#ffffff"/><rect x="94" y="434" width="5" height="27" fill="#ffffff"/><rect x="104" y="427" width="1" height="7" fill="#ff0000"/><rect x="102" y="434" width="5" height="36" fill="#ffffff"/><rect x="110" y="421" width="5" height="16" fill="#ff0000"/><rect x="110" y="437" width="5" height="22" fill="#ff00ff"/><rect x="120" y="403" width="1" height="22" fill="#ff0000"/><rect x="118" y="417" width="5" height="5" fill="#ff0000"/><rect x="128" y="413" width="1" height="29" fill="#00ff00"/><rect x="126" y="417" width="5" height="3" fill="#00ff00"/><rect x="126" y="441" width="5" height="3" fill="#ff00ff"/><rect x="136" y="413" width="1" height="28" fill="#00ff00"/><rect x="134" y="420" width="5" height="6" fill="#00ff00"/><rect x="144" y="417" width="1" height="26" fill="#00ff00"/><rect x="142" y="425" width="5" height="13" fill="#00ff00"/><rect x="152" y="403" width="1" height="36" fill="#ff0000"/><rect x="150" y="410" width="5" height="27" fill="#ff0000"/><rect x="160" y="403" width="1" height="27" fill="#00ff00"/><rect x="158" y="409" width="5" height="20" fill="#00ff00"/><rect x="168" y="402" width="1" height="27" fill="#ff0000"/><rect x="166" y="405" width="5" height="24" fill="#ff0000"/><rect x="176" y="374" width="1" height="33" fill="#ff0000"/><rect x="174" y="376" width="5" height="30" fill="#ff0000"/><rect x="184" y="370" width="1" height="12" fill="#00ff00"/><rect x="182" y="376" width="5" height="5" fill="#00ff00"/><rect x="192" y="366" width="1" height="20" fill="#ff0000"/><rect x="190" y="375" width="5" height="5" fill="#ff0000"/><rect x="200" y="354" width="1" height="34" fill="#ff0000"/><rect x="198" y="358" width="5" height="17" fill="#ff0000"/><rect x="208" y="354" width="1" height="24" fill="#00ff00"/><rect x="206" y="358" width="5" height="18" fill="#00ff00"/><rect x="216" y="373" width="1" height="13" fill="#00ff00"/><rect x="214" y="374" width="5" height="6" fill="#00ff00"/><rect x="224" y="382" width="1" height="34" fill="#00ff00"/><rect x="222" y="382" width="5" height="30" fill="#00ff00"/><rect x="232" y="399" width="1" height="14" fill="#ff0000"/><rect x="230" y="401" width="5" height="12" fill="#ff0000"/><rect x="240" y="390" width="1" height="15" fill="#00ff00"/><rect x="238" y="396" width="5" height="9" fill="#00ff00"/><rect x="248" y="397" width="1" height="13" fill="#00ff00"/><rect x="246" y="403" width="5" height="2" fill="#00ff00"/><rect x="256" y="384" width="1" height="24" fill="#ff0000"/><rect x="254" y="389" width="5" height="16" fill="#ff0000"/><rect x="264" y="374" width="1" height="19" fill="#ff0000"/><rect x="262" y="378" width="5" height="8" fill="#ff0000"/><rect x="272" y="374" width="1" height="37" fill="#00ff00"/><rect x="270" y="378" width="5" height="28" fill="#00ff00"/><rect x="280" y="361" width="1" height="50" fill="#ff0000"/><rect x="278" y="363" width="5" height="42" fill="#ff0000"/><rect x="278" y="410" width="5" height="5" fill="#ff00ff"/><rect x="288" y="358" width="1" height="22" fill="#ff0000"/><rect x="286" y="361" width="5" height="4" fill="#ff0000"/><rect x="296" y="343" width="1" height="21" fill="#ff0000"/><rect x="294" y="355" width="5" height="7" fill="#ff0000"/><rect x="304" y="332" width="1" height="39" fill="#00ff00"/><rect x="302" y="355" width="5" height="11" fill="#00ff00"/><rect x="312" y="351" width="1" height="22" fill="#ff0000"/><rect x="310" y="364" width="5" height="2" fill="#ff0000"/><rect x="320" y="335" width="1" height="40" fill="#ff0000"/><rect x="318" y="349" width="5" height="16" fill="#ff0000"/><rect x="328" y="345" width="1" height="46" fill="#00ff00"/><rect x="326" y="348" width="5" height="30" fill="#00ff00"/><rect x="326" y="392" width="5" height="8" fill="#ff00ff"/><rect x="336" y="366" width="1" height="18" fill="#ff0000"/><rect x="334" y="370" width="5" height="11" fill="#ff0000"/><rect x="344" y="358" width="1" height="15" fill="#ff0000"/><rect x="342" y="362" width="5" height="8" fill="#ff0000"/><rect x="352" y="356" width="1" height="22" fill="#00ff00"/><rect x="350" y="363" width="5" height="13" fill="#00ff00"/><rect x="360" y="355" width="1" height="21" fill="#ff0000"/><rect x="358" y="359" width="5" height="17" fill="#ff0000"/><rect x="368" y="335" width="1" height="26" fill="#ff0000"/><rect x="366" y="336" width="5" height="24" fill="#ff0000"/><rect x="376" y="318" width="1" height="23" fill="#ff0000"/><rect x="374" y="326" width="5" height="10" fill="#ff0000"/><rect x="384" y="326" width="1" height="17" fill="#00ff00"/><rect x="382" y="326" width="5" height="15" fill="#00ff00"/><rect x="392" y="315" width="1" height="26" fill="#ff0000"/><rect x="390" y="320" width="5" height="21" fill="#ff0000"/><rect x="400" y="309" width="1" height="21" fill="#ff0000"/><rect x="398" y="311" width="5" height="10" fill="#ff0000"/><rect x="408" y="309" width="1" height="10" fill="#ff0000"/><rect x="406" y="309" width="5" height="3" fill="#ff0000"/><rect x="416" y="303" width="1" height="19" fill="#ff0000"/><rect x="414" y="305" width="5" height="5" fill="#ff0000"/><rect x="424" y="303" width="1" height="20" fill="#00ff00"/><rect x="422" y="305" width="5" height="16" fill="#00ff00"/><rect x="432" y="295" width="1" height="29" fill="#ff0000"/><rect x="430" y="295" width="5" height="27" fill="#ff0000"/><rect x="440" y="289" width="1" height="20" fill="#00ff00"/><rect x="438" y="295" width="5" height="2" fill="#00ff00"/><rect x="448" y="275" width="1" height="23" fill="#ff0000"/><rect x="446" y="275" width="5" height="22" fill="#ff0000"/><rect x="446" y="259" width="5" height="16" fill="#ffffff"/><rect x="456" y="275" width="1" height="17" fill="#00ff00"/><rect x="454" y="275" width="5" height="7" fill="#00ff00"/><rect x="454" y="257" width="5" height="18" fill="#ff00ff"/><rect x="464" y="275" width="1" height="23" fill="#00ff00"/><rect x="462" y="279" width="5" height="4" fill="#00ff00"/><rect x="462" y="272" width="5" height="3" fill="#ff00ff"/><rect x="472" y="277" width="1" height="21" fill="#00ff00"/><rect x="470" y="283" width="5" height="7" fill="#00ff00"/><rect x="480" y="275" width="1" height="17" fill="#ff0000"/><rect x="478" y="280" width="5" height="10" fill="#ff0000"/><rect x="488" y="274" width="1" height="8" fill="#ff0000"/><rect x="486" y="279" width="5" height="2" fill="#ff0000"/><rect x="486" y="272" width="5" height="3" fill="#ff00ff"/><rect x="494" y="232" width="5" height="43" fill="#ff00ff"/><rect x="494" y="275" width="5" height="5" fill="#ff0000"/><rect x="504" y="228" width="1" height="23" fill="#ff00ff"/><rect x="502" y="237" width="5" height="11" fill="#ff00ff"/><rect x="512" y="240" width="1" height="16" fill="#ff00ff"/><rect x="510" y="247" width="5" height="9" fill="#ff00ff"/><rect x="520" y="250" width="1" height="15" fill="#ff00ff"/><rect x="518" y="253" width="5" height="2" fill="#ff00ff"/><rect x="528" y="235" width="1" height="25" fill="#ff00ff"/><rect x="526" y="245" width="5" height="9" fill="#ff00ff"/><rect x="534" y="236" width="5" height="47" fill="#ff00ff"/><rect x="542" y="280" width="5" height="6" fill="#ff00ff"/><rect x="544" y="290" width="1" height="112" fill="#00ff00"/><rect x="542" y="290" width="5" height="47" fill="#00ff00"/><rect x="552" y="329" width="1" height="47" fill="#00ff00"/><rect x="550" y="336" width="5" height="7" fill="#00ff00"/><rect x="560" y="335" width="1" height="54" fill="#00ff00"/><rect x="558" y="342" width="5" height="19" fill="#00ff00"/><rect x="568" y="356" width="1" height="40" fill="#00ff00"/><rect x="566" y="360" width="5" height="30" fill="#00ff00"/><rect x="576" y="387" width="1" height="25" fill="#00ff00"/><rect x="574" y="389" width="5" height="23" fill="#00ff00"/><rect x="574" y="412" width="5" height="34" fill="#ffffff"/><rect x="584" y="433" width="1" height="65" fill="#ffffff"/><rect x="582" y="444" width="5" height="32" fill="#ffffff"/><rect x="592" y="438" width="1" height="40" fill="#ffffff"/><rect x="590" y="442" width="5" height="34" fill="#ffffff"/><rect x="600" y="411" width="1" height="11" fill="#ff0000"/><rect x="598" y="412" width="5" height="10" fill="#ff0000"/><rect x="598" y="422" width="5" height="30" fill="#ffffff"/><rect x="608" y="404" width="1" height="21" fill="#00ff00"/><rect x="606" y="413" width="5" height="4" fill="#00ff00"/><rect x="616" y="410" width="1" height="17" fill="#00ff00"/><rect x="614" y="416" width="5" height="1" fill="#00ff00"/><rect x="614" y="428" width="5" height="5" fill="#ff00ff"/><rect x="624" y="405" width="1" height="23" fill="#00ff00"/><rect x="622" y="416" width="5" height="7" fill="#00ff00"/><rect x="622" y="429" width="5" height="5" fill="#ff00ff"/><rect x="632" y="420" width="1" height="9" fill="#00ff00"/><rect x="630" y="422" width="5" height="7" fill="#00ff00"/><rect x="630" y="430" width="5" height="13" fill="#ff00ff"/><rect x="640" y="351" width="1" height="79" fill="#ff0000"/><rect x="638" y="369" width="5" height="61" fill="#ff0000"/><rect x="638" y="431" width="5" height="14" fill="#ff00ff"/><rect x="648" y="360" width="1" height="24" fill="#ff0000"/><rect x="646" y="364" width="5" height="14" fill="#ff0000"/><rect x="656" y="344" width="1" height="32" fill="#00ff00"/><rect x="654" y="364" width="5" height="11" fill="#00ff00"/><rect x="664" y="368" width="1" height="28" fill="#00ff00"/><rect x="662" y="374" width="5" height="9" fill="#00ff00"/><rect x="672" y="370" width="1" height="24" fill="#ff0000"/><rect x="670" y="377" width="5" height="6" fill="#ff0000"/><rect x="680" y="368" width="1" height="18" fill="#ff0000"/><rect x="678" y="374" width="5" height="6" fill="#ff0000"/><rect x="688" y="353" width="1" height="52" fill="#00ff00"/><rect x="686" y="374" width="5" height="27" fill="#00ff00"/><rect x="696" y="372" width="1" height="53" fill="#00ff00"/><rect x="694" y="399" width="5" height="8" fill="#00ff00"/><rect x="694" y="425" width="5" height="33" fill="#ffffff"/><rect x="704" y="378" width="1" height="36" fill="#ff0000"/><rect x="702" y="378" width="5" height="28" fill="#ff0000"/><rect x="712" y="367" width="1" height="29" fill="#ff0000"/><rect x="710" y="371" width="5" height="11" fill="#ff0000"/><rect x="720" y="337" width="1" height="36" fill="#ff0000"/><rect x="718" y="342" width="5" height="30" fill="#ff0000"/><rect x="728" y="338" width="1" height="33" fill="#00ff00"/><rect x="726" y="342" width="5" height="25" fill="#00ff00"/><rect x="736" y="327" width="1" height="57" fill="#ff0000"/><rect x="734" y="347" width="5" height="20" fill="#ff0000"/><rect x="744" y="345" width="1" height="53" fill="#00ff00"/><rect x="742" y="347" width="5" height="30" fill="#00ff00"/><rect x="752" y="358" width="1" height="44" fill="#ff0000"/><rect x="750" y="364" width="5" height="12" fill="#ff0000"/><rect x="750" y="402" width="5" height="2" fill="#ff00ff"/><rect x="760" y="292" width="1" height="78" fill="#ff0000"/><rect x="758" y="305" width="5" height="60" fill="#ff0000"/><rect x="758" y="289" width="5" height="3" fill="#ffffff"/><rect x="768" y="295" width="1" height="41" fill="#00ff00"/><rect x="766" y="306" width="5" height="28" fill="#00ff00"/><rect x="776" y="325" width="1" height="32" fill="#00ff00"/><rect x="774" y="333" width="5" height="11" fill="#00ff00"/><rect x="784" y="295" width="1" height="49" fill="#ff0000"/><rect x="782" y="306" width="5" height="38" fill="#ff0000"/><rect x="792" y="284" width="1" height="33" fill="#ff0000"/><rect x="790" y="288" width="5" height="16" fill="#ff0000"/><rect x="790" y="305" width="5" height="2" fill="#ff0000"/><rect x="790" y="280" width="5" height="3" fill="#ffffff"/><rect x="798" y="278" width="5" height="8" fill="#ffffff"/><rect x="798" y="288" width="5" height="14" fill="#00ff00"/><rect x="808" y="295" width="1" height="18" fill="#00ff00"/><rect x="806" y="300" width="5" height="4" fill="#00ff00"/><rect x="816" y="299" width="1" height="18" fill="#00ff00"/><rect x="814" y="307" width="5" height="5" fill="#00ff00"/><rect x="824" y="298" width="1" height="19" fill="#ff0000"/><rect x="822" y="307" width="5" height="5" fill="#ff0000"/><rect x="832" y="299" width="1" height="17" fill="#00ff00"/><rect x="830" y="307" width="5" height="5" fill="#00ff00"/><rect x="840" y="296" width="1" height="21" fill="#00ff00"/><rect x="838" y="311" width="5" height="2" fill="#00ff00"/><rect x="848" y="291" width="1" height="22" fill="#ff0000"/><rect x="846" y="295" width="5" height="18" fill="#ff0000"/><rect x="856" y="287" width="1" height="23" fill="#ff0000"/><rect x="854" y="295" width="5" height="1" fill="#ff0000"/><rect x="864" y="290" width="1" height="18" fill="#00ff00"/><rect x="862" y="294" width="5" height="13" fill="#00ff00"/><rect x="872" y="301" width="1" height="15" fill="#00ff00"/><rect x="870" y="306" width="5" height="10" fill="#00ff00"/><rect x="880" y="295" width="1" height="21" fill="#ff0000"/><rect x="878" y="298" width="5" height="18" fill="#ff0000"/><rect x="888" y="296" width="1" height="18" fill="#00ff00"/><rect x="886" y="298" width="5" height="10" fill="#00ff00"/><rect x="896" y="303" width="1" height="15" fill="#00ff00"/><rect x="894" y="307" width="5" height="11" fill="#00ff00"/><rect x="904" y="321" width="1" height="12" fill="#00ff00"/><rect x="902" y="321" width="5" height="5" fill="#00ff00"/><rect x="912" y="311" width="1" height="18" fill="#ff0000"/><rect x="910" y="313" width="5" height="13" fill="#ff0000"/><rect x="920" y="311" width="1" height="18" fill="#00ff00"/><rect x="918" y="313" width="5" height="12" fill="#00ff00"/><rect x="928" y="323" width="1" height="9" fill="#00ff00"/><rect x="926" y="324" width="5" height="8" fill="#00ff00"/><rect x="936" y="310" width="1" height="23" fill="#ff0000"/><rect x="934" y="324" width="5" height="8" fill="#ff0000"/><rect x="944" y="310" width="1" height="19" fill="#00ff00"/><rect x="942" y="324" width="5" height="4" fill="#00ff00"/><rect x="952" y="323" width="1" height="10" fill="#00ff00"/><rect x="950" y="326" width="5" height="2" fill="#00ff00"/><rect x="960" y="315" width="1" height="29" fill="#00ff00"/><rect x="958" y="327" width="5" height="5" fill="#00ff00"/><rect x="968" y="328" width="1" height="20" fill="#00ff00"/><rect x="966" y="332" width="5" height="14" fill="#00ff00"/><rect x="976" y="346" width="1" height="18" fill="#00ff00"/><rect x="974" y="347" width="5" height="11" fill="#00ff00"/><rect x="974" y="364" width="5" height="5" fill="#ffffff"/><rect x="984" y="346" width="1" height="13" fill="#ff0000"/><rect x="982" y="351" width="5" height="6" fill="#ff0000"/><rect x="992" y="339" width="1" height="17" fill="#ff0000"/><rect x="990" y="345" width="5" height="6" fill="#ff0000"/><rect x="1000" y="334" width="1" height="13" fill="#ff0000"/><rect x="998" y="342" width="5" height="4" fill="#ff0000"/><rect x="1008" y="336" width="1" height="21" fill="#00ff00"/><rect x="1006" y="341" width="5" height="12" fill="#00ff00"/><rect x="1016" y="347" width="1" height="10" fill="#ff0000"/><rect x="1014" y="348" width="5" height="5" fill="#ff0000"/><rect x="1024" y="343" width="1" height="28" fill="#00ff00"/><rect x="1022" y="348" width="5" height="12" fill="#00ff00"/><rect x="1032" y="333" width="1" height="29" fill="#ff0000"/><rect x="1030" y="335" width="5" height="26" fill="#ff0000"/><rect x="1038" y="305" width="5" height="14" fill="#ffffff"/><rect x="1038" y="321" width="5" height="17" fill="#ff0000"/><rect x="1048" y="321" width="1" height="40" fill="#00ff00"/><rect x="1046" y="321" width="5" height="34" fill="#00ff00"/><rect x="1056" y="330" width="1" height="25" fill="#ff0000"/><rect x="1054" y="337" width="5" height="18" fill="#ff0000"/><rect x="1064" y="319" width="1" height="25" fill="#ff0000"/><rect x="1062" y="326" width="5" height="12" fill="#ff0000"/><rect x="1072" y="325" width="1" height="39" fill="#00ff00"/><rect x="1070" y="325" width="5" height="27" fill="#00ff00"/><rect x="1080" y="347" width="1" height="16" fill="#00ff00"/><rect x="1078" y="352" width="5" height="11" fill="#00ff00"/><rect x="1088" y="353" width="1" height="18" fill="#00ff00"/><rect x="1086" y="362" width="5" height="9" fill="#00ff00"/><rect x="1096" y="359" width="1" height="21" fill="#ff0000"/><rect x="1094" y="364" width="5" height="7" fill="#ff0000"/><rect x="1104" y="360" width="1" height="22" fill="#ff0000"/><rect x="1102" y="360" width="5" height="5" fill="#ff0000"/><rect x="1112" y="354" width="1" height="12" fill="#00ff00"/><rect x="1110" y="360" width="5" height="3" fill="#00ff00"/><rect x="1120" y="359" width="1" height="11" fill="#00ff00"/><rect x="1118" y="362" width="5" height="7" fill="#00ff00"/><rect x="1128" y="368" width="1" height="8" fill="#00ff00"/><rect x="1126" y="368" width="5" height="4" fill="#00ff00"/><rect x="1136" y="366" width="1" height="27" fill="#00ff00"/><rect x="1134" y="374" width="5" height="19" fill="#00ff00"/><rect x="1134" y="394" width="5" height="5" fill="#ffffff"/><rect x="1144" y="383" width="1" height="11" fill="#ff0000"/><rect x="1142" y="387" width="5" height="6" fill="#ff0000"/><rect x="1142" y="395" width="5" height="6" fill="#ffffff"/><rect x="1152" y="378" width="1" height="13" fill="#ff0000"/><rect x="1150" y="384" width="5" height="4" fill="#ff0000"/><rect x="1158" y="384" width="5" height="11" fill="#00ff00"/><rect x="1158" y="396" width="5" height="5" fill="#ffffff"/><rect x="1168" y="368" width="1" height="28" fill="#ff0000"/><rect x="1166" y="370" width="5" height="26" fill="#ff0000"/><rect x="1166" y="397" width="5" height="11" fill="#ff00ff"/><rect x="1176" y="366" width="1" height="10" fill="#ff0000"/><rect x="1174" y="368" width="5" height="2" fill="#ff0000"/><rect x="1184" y="368" width="1" height="18" fill="#00ff00"/><rect x="1182" y="368" width="5" height="12" fill="#00ff00"/><rect x="1192" y="338" width="1" height="51" fill="#ff0000"/><rect x="1190" y="340" width="5" height="40" fill="#ff0000"/><rect x="1200" y="338" width="1" height="19" fill="#00ff00"/><rect x="1198" y="340" width="5" height="8" fill="#00ff00"/><rect x="1208" y="332" width="1" height="26" fill="#ff0000"/><rect x="1206" y="343" width="5" height="5" fill="#ff0000"/><rect x="1216" y="342" width="1" height="16" fill="#00ff00"/><rect x="1214" y="343" width="5" height="2" fill="#00ff00"/><rect x="1224" y="326" width="1" height="21" fill="#ff0000"/><rect x="1222" y="327" width="5" height="19" fill="#ff0000"/><rect x="1222" y="304" width="5" height="21" fill="#ffffff"/><rect x="1232" y="287" width="1" height="31" fill="#ffffff"/><rect x="1230" y="290" width="5" height="26" fill="#ffffff"/>
<polyline points="0.0,8.0 2.0,8.9 4.0,9.8 6.0,10.8 8.0,11.7 10.0,12.7 12.0,13.6 14.0,14.6 16.0,15.6 18.0,16.6 20.0,17.6 22.0,18.6 24.0,19.6 26.0,20.7 28.0,21.7 30.0,22.8 32.0,23.8 34.0,24.9 36.0,25.9 38.0,27.0 40.0,28.1 42.0,29.2 44.0,30.3 46.0,31.4 48.0,32.5 50.0,33.7 52.0,34.8 54.0,36.0 56.0,37.2 58.0,38.5 60.0,39.7 62.0,41.0 64.0,42.3 66.0,43.7 68.0,45.1 70.0,46.5 72.0,48.0 74.0,49.6 76.0,51.1 78.0,52.7 80.0,54.4 82.0,56.0 84.0,57.7 86.0,59.4 88.0,61.1 90.0,62.8 92.0,64.5 94.0,66.2 96.0,67.8 98.0,69.5 100.0,71.2 102.0,72.8 104.0,74.4 106.0,76.0 108.0,77.7 110.0,79.3 112.0,80.9 114.0,82.5 116.0,84.1 118.0,85.7 120.0,87.3 122.0,88.9 124.0,90.5 126.0,92.2 128.0,93.8 130.0,95.4 132.0,96.9 134.0,98.5 136.0,100.1 138.0,101.7 140.0,103.3 142.0,104.8 144.0,106.4 146.0,108.0 148.0,109.5 150.0,111.1 152.0,112.6 154.0,114.2 156.0,115.7 158.0,117.3 160.0,118.8 162.0,120.3 164.0,121.9 166.0,123.4 168.0,124.9 170.0,126.3 172.0,127.8 174.0,129.3 176.0,130.7 178.0,132.2 180.0,133.6 182.0,135.0 184.0,136.4 186.0,137.9 188.0,139.3 190.0,140.7 192.0,142.0 194.0,143.4 196.0,144.8 198.0,146.1 200.0,147.5 202.0,148.8 204.0,150.2 206.0,151.5 208.0,152.8 210.0,154.1 212.0,155.4 214.0,156.6 216.0,157.9 218.0,159.1 220.0,160.3 222.0,161.5 224.0,162.7 226.0,163.9 228.0,165.0 230.0,166.2 232.0,167.3 234.0,168.4 236.0,169.5 238.0,170.6 240.0,171.7 242.0,172.8 244.0,173.9 246.0,175.0 248.0,176.1 250.0,177.3 252.0,178.4 254.0,179.6 256.0,180.8 258.0,182.0 260.0,183.2 262.0,184.4 264.0,185.7 266.0,186.9 268.0,188.2 270.0,189.5 272.0,190.8 274.0,192.1 276.0,193.4 278.0,194.6 280.0,195.7 282.0,196.8 284.0,197.8 286.0,198.8 288.0,199.8 290.0,200.7 292.0,201.7 294.0,202.6 296.0,203.5 298.0,204.4 300.0,205.2 302.0,206.1 304.0,206.9 306.0,207.8 308.0,208.6 310.0,209.5 312.0,210.3 314.0,211.1 316.0,212.0 318.0,212.8 320.0,213.6 322.0,214.5 324.0,215.4 326.0,216.2 328.0,217.1 330.0,217.9 332.0,218.8 334.0,219.6 336.0,220.4 338.0,221.2 340.0,222.1 342.0,222.9 344.0,223.6 346.0,224.4 348.0,225.2 350.0,225.9 352.0,226.6 354.0,227.3 356.0,228.0 358.0,228.6 360.0,229.2 362.0,229.9 364.0,230.4 366.0,231.0 368.0,231.6 370.0,232.2 372.0,232.7 374.0,233.3 376.0,233.8 378.0,234.3 380.0,234.8 382.0,235.4 384.0,235.9 386.0,236.4 388.0,236.9 390.0,237.4 392.0,238.0 394.0,238.5 396.0,239.0 398.0,239.5 400.0,240.1 402.0,240.6 404.0,241.2 406.0,241.7 408.0,242.2 410.0,242.8 412.0,243.3 414.0,243.8 416.0,244.3 418.0,244.8 420.0,245.3 422.0,245.8 424.0,246.3 426.0,246.7 428.0,247.2 430.0,247.6 432.0,248.0 434.0,248.3 436.0,248.7 438.0,249.0 440.0,249.4 442.0,249.7 444.0,250.1 446.0,250.4 448.0,250.7 450.0,251.0 452.0,251.3 454.0,251.6 456.0,251.9 458.0,252.1 460.0,252.4 462.0,252.7 464.0,252.9 466.0,253.2 468.0,253.4 470.0,253.7 472.0,253.9 474.0,254.2 476.0,254.4 478.0,254.7 480.0,254.9 482.0,255.2 484.0,255.4 486.0,255.7 488.0,255.9 490.0,256.1 492.0,256.4 494.0,256.6 496.0,256.8 498.0,256.9 500.0,257.1 502.0,257.2 504.0,257.3 506.0,257.4 508.0,257.5 510.0,257.5 512.0,257.6 514.0,257.6 516.0,257.6 518.0,257.7 520.0,257.7 522.0,257.7 524.0,257.7 526.0,257.8 528.0,257.8 530.0,257.8 532.0,257.8 534.0,257.8 536.0,257.8 538.0,257.9 540.0,257.9 542.0,257.9 544.0,258.0 546.0,258.0 548.0,258.0 550.0,258.1 552.0,258.1 554.0,258.2 556.0,258.2 558.0,258.3 560.0,258.4 562.0,258.4 564.0,258.5 566.0,258.6 568.0,258.7 570.0,258.8 572.0,258.9 574.0,259.1 576.0,259.2 578.0,259.4 580.0,259.6 582.0,259.9 584.0,260.1 586.0,260.4 588.0,260.7 590.0,261.0 592.0,261.3 594.0,261.6 596.0,261.9 598.0,262.2 600.0,262.5 602.0,262.9 604.0,263.3 606.0,263.7 608.0,264.2 610.0,264.7 612.0,265.2 614.0,265.7 616.0,266.2 618.0,266.7 620.0,267.3 622.0,267.8 624.0,268.4 626.0,268.9 628.0,269.5 630.0,270.1 632.0,270.6 634.0,271.1 636.0,271.7 638.0,272.2 640.0,272.7 642.0,273.3 644.0,273.8 646.0,274.4 648.0,275.0 650.0,275.6 652.0,276.1 654.0,276.7 656.0,277.3 658.0,277.8 660.0,278.4 662.0,279.0 664.0,279.5 666.0,280.1 668.0,280.6 670.0,281.2 672.0,281.7 674.0,282.2 676.0,282.7 678.0,283.2 680.0,283.7 682.0,284.1 684.0,284.6 686.0,285.1 688.0,285.6 690.0,286.0 692.0,286.5 694.0,286.9 696.0,287.4 698.0,287.8 700.0,288.3 702.0,288.7 704.0,289.1 706.0,289.5 708.0,290.0 710.0,290.4 712.0,290.8 714.0,291.2 716.0,291.6 718.0,292.0 720.0,292.4 722.0,292.8 724.0,293.2 726.0,293.6 728.0,294.0 730.0,294.4 732.0,294.8 734.0,295.2 736.0,295.5 738.0,295.9 740.0,296.2 742.0,296.5 744.0,296.7 746.0,297.0 748.0,297.2 750.0,297.4 752.0,297.5 754.0,297.7 756.0,297.9" fill="none" stroke="#9a9a9a" stroke-width="1"/>
<polyline points="973.0,303.8 975.0,303.9 977.0,303.9 979.0,304.0 981.0,304.1 983.0,304.2 985.0,304.3 987.0,304.4 989.0,304.5 991.0,304.6 993.0,304.7 995.0,304.8 997.0,304.9 999.0,305.0 1001.0,305.1 1003.0,305.2 1005.0,305.3 1007.0,305.5 1009.0,305.6 1011.0,305.7 1013.0,305.8 1015.0,305.9 1017.0,306.0 1019.0,306.2 1021.0,306.3 1023.0,306.4 1025.0,306.6 1027.0,306.7 1029.0,306.8 1031.0,307.0 1033.0,307.1 1035.0,307.3 1037.0,307.4 1039.0,307.6 1041.0,307.7 1043.0,307.8 1045.0,308.0 1047.0,308.1 1049.0,308.3 1051.0,308.4 1053.0,308.6 1055.0,308.7 1057.0,308.9 1059.0,309.0 1061.0,309.2 1063.0,309.3 1065.0,309.5 1067.0,309.6 1069.0,309.8 1071.0,310.0 1073.0,310.1 1075.0,310.3 1077.0,310.4 1079.0,310.6 1081.0,310.8 1083.0,310.9 1085.0,311.1 1087.0,311.3 1089.0,311.4 1091.0,311.6 1093.0,311.8 1095.0,312.0 1097.0,312.2 1099.0,312.4 1101.0,312.6 1103.0,312.8 1105.0,313.0 1107.0,313.2 1109.0,313.3 1111.0,313.5 1113.0,313.7 1115.0,313.9 1117.0,314.1 1119.0,314.3 1121.0,314.5 1123.0,314.7 1125.0,314.8 1127.0,315.0 1129.0,315.2 1131.0,315.4 1133.0,315.6 1135.0,315.7 1137.0,315.9 1139.0,316.1 1141.0,316.3 1143.0,316.5 1145.0,316.6 1147.0,316.8 1149.0,317.0 1151.0,317.2 1153.0,317.4 1155.0,317.6 1157.0,317.8 1159.0,318.0 1161.0,318.2 1163.0,318.3 1165.0,318.5 1167.0,318.7 1169.0,318.9 1171.0,319.1 1173.0,319.2 1175.0,319.4 1177.0,319.6 1179.0,319.7 1181.0,319.9 1183.0,320.1 1185.0,320.2 1187.0,320.4 1189.0,320.5 1191.0,320.7 1193.0,320.8 1195.0,321.0 1197.0,321.1 1199.0,321.3 1201.0,321.4 1203.0,321.6 1205.0,321.7 1207.0,321.9 1209.0,322.0 1211.0,322.2 1213.0,322.4 1215.0,322.6 1217.0,322.8 1219.0,323.0 1221.0,323.2 1223.0,323.4 1225.0,323.7 1227.0,323.9 1229.0,324.1 1231.0,324.4 1233.0,324.6 1235.0,324.9 1236.0,325.0" fill="none" stroke="#9a9a9a" stroke-width="1"/>
<polyline points="0.0,40.0 2.0,40.9 4.0,41.9 6.0,42.9 8.0,43.9 10.0,44.9 12.0,45.9 14.0,47.0 16.0,48.0 18.0,49.1 20.0,50.2 22.0,51.4 24.0,52.5 26.0,53.7 28.0,54.8 30.0,56.0 32.0,57.2 34.0,58.4 36.0,59.7 38.0,60.9 40.0,62.2 42.0,63.5 44.0,64.8 46.0,66.1 48.0,67.5 50.0,68.9 52.0,70.3 54.0,71.8 56.0,73.2 58.0,74.7 60.0,76.2 62.0,77.7 64.0,79.2 66.0,80.7 68.0,82.3 70.0,83.8 72.0,85.3 74.0,86.9 76.0,88.4 78.0,90.0 80.0,91.6 82.0,93.1 84.0,94.8 86.0,96.4 88.0,98.0 90.0,99.7 92.0,101.4 94.0,103.0 96.0,104.7 98.0,106.4 100.0,108.1 102.0,109.8 104.0,111.5 106.0,113.1 108.0,114.8 110.0,116.5 112.0,118.2 114.0,119.8 116.0,121.5 118.0,123.1 120.0,124.8 122.0,126.5 124.0,128.2 126.0,129.9 128.0,131.6 130.0,133.3 132.0,135.0 134.0,136.6 136.0,138.3 138.0,140.0 140.0,141.6 142.0,143.3 144.0,144.9 146.0,146.5 148.0,148.1 150.0,149.6 152.0,151.1 154.0,152.7 156.0,154.2 158.0,155.6 160.0,157.1 162.0,158.6 164.0,160.0 166.0,161.4 168.0,162.8 170.0,164.2 172.0,165.6 174.0,167.0 176.0,168.4 178.0,169.8 180.0,171.1 182.0,172.5 184.0,173.8 186.0,175.1 188.0,176.5 190.0,177.8 192.0,179.1 194.0,180.4 196.0,181.7 198.0,182.9 200.0,184.2 202.0,185.5 204.0,186.8 206.0,188.0 208.0,189.2 210.0,190.5 212.0,191.7 214.0,192.9 216.0,194.1 218.0,195.3 220.0,196.5 222.0,197.7 224.0,198.8 226.0,200.0 228.0,201.1 230.0,202.3 232.0,203.4 234.0,204.5 236.0,205.5 238.0,206.6 240.0,207.6 242.0,208.7 244.0,209.7 246.0,210.7 248.0,211.8 250.0,212.8 252.0,213.8 254.0,214.8 256.0,215.9 258.0,216.9 260.0,217.9 262.0,219.0 264.0,220.1 266.0,221.1 268.0,222.2 270.0,223.4 272.0,224.5 274.0,225.6 276.0,226.8 278.0,227.9 280.0,228.9 282.0,229.9 284.0,230.9 286.0,231.9 288.0,232.8 290.0,233.7 292.0,234.7 294.0,235.6 296.0,236.5 298.0,237.4 300.0,238.3 302.0,239.2 304.0,240.0 306.0,240.9 308.0,241.8 310.0,242.6 312.0,243.5 314.0,244.4 316.0,245.2 318.0,246.1 320.0,247.0 322.0,247.9 324.0,248.8 326.0,249.6 328.0,250.5 330.0,251.4 332.0,252.3 334.0,253.2 336.0,254.1 338.0,255.0 340.0,255.8 342.0,256.7 344.0,257.5 346.0,258.4 348.0,259.2 350.0,259.9 352.0,260.7 354.0,261.4 356.0,262.2 358.0,262.9 360.0,263.6 362.0,264.3 364.0,264.9 366.0,265.6 368.0,266.3 370.0,267.0 372.0,267.6 374.0,268.3 376.0,268.9 378.0,269.5 380.0,270.1 382.0,270.6 384.0,271.2 386.0,271.7 388.0,272.2 390.0,272.7 392.0,273.2 394.0,273.6 396.0,274.0 398.0,274.3 400.0,274.7 402.0,275.0 404.0,275.3 406.0,275.6 408.0,275.8 410.0,276.1 412.0,276.4 414.0,276.6 416.0,276.9 418.0,277.2 420.0,277.6 422.0,277.9 424.0,278.3 426.0,278.7 428.0,279.3 430.0,279.9 432.0,280.4 434.0,280.9 436.0,281.3 438.0,281.6 440.0,281.8 442.0,282.0 444.0,282.2 446.0,282.4 448.0,282.5 450.0,282.7 452.0,282.8 454.0,282.9 456.0,283.0 458.0,283.2 460.0,283.3 462.0,283.4 464.0,283.6 466.0,283.7 468.0,283.9 470.0,284.1 472.0,284.3 474.0,284.5 476.0,284.8 478.0,285.1 480.0,285.4 482.0,285.7 484.0,286.0 486.0,286.2 488.0,286.5 490.0,286.7 492.0,286.9 494.0,287.0 496.0,287.0 498.0,287.1 500.0,287.1 502.0,287.1 504.0,287.2 506.0,287.2 508.0,287.2 510.0,287.2 512.0,287.3 514.0,287.3 516.0,287.3 518.0,287.3 520.0,287.3 522.0,287.4 524.0,287.4 526.0,287.4 528.0,287.5 530.0,287.5 532.0,287.6 534.0,287.6 536.0,287.7 538.0,287.9 540.0,288.0 542.0,288.2 544.0,288.3 546.0,288.5 548.0,288.7 550.0,288.9 552.0,289.1 554.0,289.3 556.0,289.5 558.0,289.8 560.0,290.0 562.0,290.2 564.0,290.5 566.0,290.8 568.0,291.2 570.0,291.5 572.0,291.9 574.0,292.3 576.0,292.7 578.0,293.1 580.0,293.5 582.0,294.0 584.0,294.4 586.0,294.9 588.0,295.3 590.0,295.8 592.0,296.2 594.0,296.7 596.0,297.2 598.0,297.6 600.0,298.1 602.0,298.5 604.0,299.0 606.0,299.5 608.0,300.0 610.0,300.5 612.0,301.0 614.0,301.5 616.0,302.1 618.0,302.6 620.0,303.1 622.0,303.6 624.0,304.2 626.0,304.7 628.0,305.2 630.0,305.7 632.0,306.2 634.0,306.6 636.0,307.1 638.0,307.5 640.0,307.9 642.0,308.4 644.0,308.8 646.0,309.2 648.0,309.5 650.0,309.9 652.0,310.3 654.0,310.7 656.0,311.1 658.0,311.4 660.0,311.8 662.0,312.2 664.0,312.6 666.0,313.0 668.0,313.4 670.0,313.8 672.0,314.2 674.0,314.7 676.0,315.1 678.0,315.6 680.0,316.1 682.0,316.5 684.0,317.0 686.0,317.5 688.0,318.0 690.0,318.5 692.0,319.0 694.0,319.6 696.0,320.1 698.0,320.6 700.0,321.1 702.0,321.6 704.0,322.1 706.0,322.7 708.0,323.2 710.0,323.7 712.0,324.2 714.0,324.6 716.0,325.2 718.0,325.7 720.0,326.2 722.0,326.7 724.0,327.2 726.0,327.8 728.0,328.3 730.0,328.8 732.0,329.4 734.0,329.9 736.0,330.4 738.0,330.9 740.0,331.4 742.0,331.9 744.0,332.4 746.0,332.8 748.0,333.2 750.0,333.6 752.0,334.0 754.0,334.4 756.0,334.7" fill="none" stroke="#9a9a9a" stroke-width="1"/>
<polyline points="0.0,203.2 2.0,205.5 4.0,207.9 6.0,210.2 8.0,212.5 10.0,214.9 12.0,217.2 14.0,219.6 16.0,221.9 18.0,224.3 20.0,226.7 22.0,229.0 24.0,231.4 26.0,233.8 28.0,236.2 30.0,238.6 32.0,241.1 34.0,243.6 36.0,246.1 38.0,248.6 40.0,251.1 42.0,253.6 44.0,256.1 46.0,258.5 48.0,260.9 50.0,263.2 52.0,265.5 54.0,267.8 56.0,269.9 58.0,272.0 60.0,274.1 62.0,276.1 64.0,278.1 66.0,280.0 68.0,282.0 70.0,283.9 72.0,285.9 74.0,287.9 76.0,289.9 78.0,292.0 80.0,294.1 82.0,296.3 84.0,298.4 86.0,300.6 88.0,302.8 90.0,304.9 92.0,306.9 94.0,308.9 96.0,310.9 98.0,312.8 100.0,314.7 102.0,316.6 104.0,318.4 106.0,320.2 108.0,321.9 110.0,323.5 112.0,325.0 114.0,326.4 116.0,327.7 118.0,328.9 120.0,330.1 122.0,331.2 124.0,332.2 126.0,333.2 128.0,334.2 130.0,335.1 132.0,336.1 134.0,337.0 136.0,337.9 138.0,338.8 140.0,339.6 142.0,340.5 144.0,341.3 146.0,342.1 148.0,342.8 150.0,343.5 152.0,344.1 154.0,344.7 156.0,345.3 158.0,345.9 160.0,346.5 162.0,347.0 164.0,347.5 166.0,348.0 168.0,348.4 170.0,348.7 172.0,349.0 174.0,349.3 176.0,349.6 178.0,349.9 180.0,350.1 182.0,350.3 184.0,350.5 186.0,350.7 188.0,350.8 190.0,350.8 192.0,350.8 194.0,350.8 196.0,350.8 198.0,350.8 200.0,350.8 202.0,350.8 204.0,350.8 206.0,350.8 208.0,350.8 210.0,350.8 212.0,350.7 214.0,350.6 216.0,350.4 218.0,350.1 220.0,349.8 222.0,349.5 224.0,349.2 226.0,348.9 228.0,348.5 230.0,348.2 232.0,347.9 234.0,347.5 236.0,347.1 238.0,346.6 240.0,346.2 242.0,345.7 244.0,345.3 246.0,344.8 248.0,344.3 250.0,343.9 252.0,343.4 254.0,342.9 256.0,342.3 258.0,341.8 260.0,341.3 262.0,340.7 264.0,340.2 266.0,339.6 268.0,339.0 270.0,338.4 272.0,337.8 274.0,337.2 276.0,336.6 278.0,335.9 280.0,335.3 282.0,334.6 284.0,333.9 286.0,333.3 288.0,332.6 290.0,331.9 292.0,331.1 294.0,330.4 296.0,329.6 298.0,328.8 300.0,328.0 302.0,327.1 304.0,326.1 306.0,325.1 308.0,324.1 310.0,323.0 312.0,322.0 314.0,320.9 316.0,319.9 318.0,319.0 320.0,318.1 322.0,317.3 324.0,316.4 326.0,315.6 328.0,314.8 330.0,314.0 332.0,313.2 334.0,312.5 336.0,311.7 338.0,310.9 340.0,310.1 342.0,309.4 344.0,308.6 346.0,307.7 348.0,306.9 350.0,306.1 352.0,305.2 354.0,304.4 356.0,303.5 358.0,302.7 360.0,301.8 362.0,300.9 364.0,300.1 366.0,299.2 368.0,298.4 370.0,297.6 372.0,296.7 374.0,295.9 376.0,295.1 378.0,294.4 380.0,293.6 382.0,292.8 384.0,292.1 386.0,291.3 388.0,290.5 390.0,289.8 392.0,289.1 394.0,288.3 396.0,287.6 398.0,286.9 400.0,286.3 402.0,285.6 404.0,285.0 406.0,284.3 408.0,283.7 410.0,283.1 412.0,282.4 414.0,281.8 416.0,281.2 418.0,280.6 420.0,280.0 422.0,279.4 424.0,278.9 426.0,278.4 428.0,277.9 430.0,277.5 432.0,277.1 434.0,276.8 436.0,276.4 438.0,276.1 440.0,275.8 442.0,275.5 444.0,275.2 446.0,275.0 448.0,274.8 450.0,274.7 452.0,274.6 454.0,274.5 456.0,274.4 458.0,274.3 460.0,274.3 462.0,274.2 464.0,274.1 466.0,274.1 468.0,274.1 470.0,274.0 472.0,274.0 474.0,274.0 476.0,274.0 478.0,274.0 480.0,274.0 482.0,274.1 484.0,274.1 486.0,274.1 488.0,274.2 490.0,274.3 492.0,274.3 494.0,274.4 496.0,274.5 498.0,274.6 500.0,274.7 502.0,274.8 504.0,275.1 506.0,275.4 508.0,275.7 510.0,276.1 512.0,276.5 514.0,277.0 516.0,277.4 518.0,277.9 520.0,278.4 522.0,279.0 524.0,279.5 526.0,280.0 528.0,280.5 530.0,281.0 532.0,281.6 534.0,282.2 536.0,282.8 538.0,283.4 540.0,284.0 542.0,284.7 544.0,285.3 546.0,285.9 548.0,286.5 550.0,287.1 552.0,287.6 554.0,288.2 556.0,288.8 558.0,289.4 560.0,290.0 562.0,290.7 564.0,291.4 566.0,292.2 568.0,293.1 570.0,293.9 572.0,294.7 574.0,295.5 576.0,296.3 578.0,297.0 580.0,297.7 582.0,298.4 584.0,299.1 586.0,299.7 588.0,300.4 590.0,301.0 592.0,301.6 594.0,302.2 596.0,302.7 598.0,303.2 600.0,303.7 602.0,304.1 604.0,304.6 606.0,305.0 608.0,305.4 610.0,305.8 612.0,306.1 614.0,306.5 616.0,306.8 618.0,307.1 620.0,307.5 622.0,307.8 624.0,308.0 626.0,308.3 628.0,308.6 630.0,308.8 632.0,309.1 634.0,309.3 636.0,309.5 638.0,309.7 640.0,309.9 642.0,310.1 644.0,310.3 646.0,310.5 648.0,310.6 650.0,310.7 652.0,310.8 654.0,310.9 656.0,310.9 658.0,310.9 660.0,310.9 662.0,310.8 664.0,310.8 666.0,310.7 668.0,310.7 670.0,310.6 672.0,310.6 674.0,310.5 676.0,310.4 678.0,310.3 680.0,310.1 682.0,309.9 684.0,309.7 686.0,309.5 688.0,309.3 690.0,309.0 692.0,308.8 694.0,308.5 696.0,308.2 698.0,307.9 700.0,307.6 702.0,307.2 704.0,306.8 706.0,306.5 708.0,306.1 710.0,305.7 712.0,305.2 714.0,304.8 716.0,304.4 718.0,303.9 720.0,303.4 722.0,302.9 724.0,302.4 726.0,301.8 728.0,301.3 730.0,300.8 732.0,300.3 734.0,299.8 736.0,299.3 738.0,298.7 740.0,298.2 742.0,297.7 744.0,297.2 746.0,296.7 748.0,296.2 750.0,295.7 752.0,295.3 754.0,294.9 756.0,294.5" fill="none" stroke="#fff" stroke-width="1"/>
<polyline points="0.0,335.6 2.0,338.2 4.0,340.7 6.0,343.2 8.0,345.8 10.0,348.3 12.0,350.8 14.0,353.3 16.0,355.7 18.0,358.2 20.0,360.6 22.0,363.1 24.0,365.5 26.0,367.9 28.0,370.3 30.0,372.7 32.0,375.0 34.0,377.4 36.0,379.7 38.0,382.0 40.0,384.3 42.0,386.6 44.0,388.8 46.0,391.1 48.0,393.3 50.0,395.5 52.0,397.5 54.0,399.5 56.0,401.4 58.0,403.3 60.0,405.1 62.0,406.8 64.0,408.5 66.0,410.2 68.0,411.8 70.0,413.4 72.0,414.9 74.0,416.3 76.0,417.8 78.0,419.2 80.0,420.5 82.0,421.8 84.0,423.1 86.0,424.3 88.0,425.5 90.0,426.7 92.0,427.8 94.0,429.0 96.0,430.1 98.0,431.2 100.0,432.2 102.0,433.3 104.0,434.2 106.0,435.1 108.0,435.9 110.0,436.7 112.0,437.4 114.0,438.0 116.0,438.7 118.0,439.3 120.0,439.9 122.0,440.4 124.0,440.8 126.0,441.2 128.0,441.5 130.0,441.8 132.0,442.1 134.0,442.4 136.0,442.6 138.0,442.8 140.0,443.0 142.0,443.1 144.0,443.2 146.0,443.2 148.0,443.2 150.0,443.2 152.0,443.2 154.0,443.2 156.0,443.2 158.0,443.2 160.0,443.2 162.0,443.2 164.0,443.2 166.0,443.1 168.0,443.0 170.0,442.8 172.0,442.5 174.0,442.2 176.0,441.9 178.0,441.5 180.0,441.2 182.0,440.8 184.0,440.5 186.0,440.0 188.0,439.6 190.0,439.1 192.0,438.5 194.0,438.0 196.0,437.4 198.0,436.8 200.0,436.3 202.0,435.7 204.0,435.1 206.0,434.6 208.0,434.0 210.0,433.4 212.0,432.8 214.0,432.1 216.0,431.5 218.0,430.9 220.0,430.3 222.0,429.7 224.0,429.1 226.0,428.5 228.0,427.9 230.0,427.3 232.0,426.7 234.0,426.1 236.0,425.5 238.0,424.9 240.0,424.3 242.0,423.7 244.0,423.1 246.0,422.5 248.0,422.0 250.0,421.4 252.0,420.8 254.0,420.1 256.0,419.5 258.0,418.8 260.0,418.1 262.0,417.4 264.0,416.7 266.0,416.0 268.0,415.3 270.0,414.6 272.0,413.8 274.0,413.1 276.0,412.3 278.0,411.5 280.0,410.8 282.0,410.0 284.0,409.2 286.0,408.3 288.0,407.5 290.0,406.6 292.0,405.8 294.0,404.9 296.0,403.9 298.0,403.0 300.0,402.0 302.0,401.1 304.0,400.1 306.0,399.2 308.0,398.3 310.0,397.3 312.0,396.4 314.0,395.5 316.0,394.6 318.0,393.7 320.0,392.9 322.0,392.0 324.0,391.2 326.0,390.4 328.0,389.7 330.0,388.9 332.0,388.1 334.0,387.3 336.0,386.5 338.0,385.7 340.0,384.9 342.0,384.1 344.0,383.3 346.0,382.5 348.0,381.7 350.0,380.9 352.0,380.1 354.0,379.3 356.0,378.5 358.0,377.8 360.0,377.0 362.0,376.3 364.0,375.6 366.0,374.8 368.0,374.1 370.0,373.4 372.0,372.8 374.0,372.1 376.0,371.5 378.0,370.9 380.0,370.3 382.0,369.8 384.0,369.2 386.0,368.7 388.0,368.1 390.0,367.6 392.0,367.2 394.0,366.7 396.0,366.3 398.0,365.8 400.0,365.4 402.0,365.0 404.0,364.5 406.0,364.2 408.0,363.8 410.0,363.5 412.0,363.3 414.0,363.1 416.0,363.0 418.0,362.9 420.0,362.7 422.0,362.6 424.0,362.5 426.0,362.4 428.0,362.4 430.0,362.3 432.0,362.3 434.0,362.3 436.0,362.3 438.0,362.3 440.0,362.4 442.0,362.4 444.0,362.5 446.0,362.5 448.0,362.6 450.0,362.7 452.0,362.7 454.0,362.8 456.0,363.0 458.0,363.2 460.0,363.4 462.0,363.7 464.0,363.9 466.0,364.2 468.0,364.5 470.0,364.8 472.0,365.0 474.0,365.3 476.0,365.6 478.0,365.9 480.0,366.2 482.0,366.6 484.0,366.9 486.0,367.3 488.0,367.7 490.0,368.2 492.0,368.7 494.0,369.3 496.0,369.9 498.0,370.6 500.0,371.3 502.0,372.1 504.0,372.9 506.0,373.7 508.0,374.5 510.0,375.3 512.0,376.2 514.0,377.2 516.0,378.2 518.0,379.2 520.0,380.2 522.0,381.3 524.0,382.4 526.0,383.5 528.0,384.6 530.0,385.7 532.0,386.9 534.0,388.1 536.0,389.3 538.0,390.5 540.0,391.7 542.0,393.0 544.0,394.2 546.0,395.4 548.0,396.6 550.0,397.8 552.0,399.0 554.0,400.2 556.0,401.4 558.0,402.6 560.0,403.8 562.0,405.0 564.0,406.2 566.0,407.4 568.0,408.7 570.0,410.0 572.0,411.3 574.0,412.6 576.0,413.8 578.0,415.0 580.0,416.0 582.0,417.1 584.0,418.1 586.0,419.1 588.0,420.1 590.0,421.0 592.0,421.8 594.0,422.7 596.0,423.4 598.0,424.1 600.0,424.7 602.0,425.4 604.0,426.0 606.0,426.5 608.0,427.0 610.0,427.5 612.0,428.0 614.0,428.4 616.0,428.7 618.0,429.0 620.0,429.3 622.0,429.6 624.0,429.8 626.0,430.1 628.0,430.3 630.0,430.5 632.0,430.6 634.0,430.7 636.0,430.8 638.0,430.9 640.0,430.9 642.0,430.9 644.0,431.0 646.0,431.0 648.0,431.1 650.0,431.1 652.0,431.1 654.0,431.1 656.0,431.1 658.0,431.1 660.0,431.0 662.0,430.9 664.0,430.7 666.0,430.6 668.0,430.4 670.0,430.2 672.0,430.0 674.0,429.8 676.0,429.6 678.0,429.3 680.0,429.0 682.0,428.6 684.0,428.2 686.0,427.7 688.0,427.2 690.0,426.8 692.0,426.3 694.0,425.8 696.0,425.3 698.0,424.8 700.0,424.2 702.0,423.6 704.0,423.0 706.0,422.4 708.0,421.8 710.0,421.1 712.0,420.4 714.0,419.6 716.0,418.8 718.0,417.9 720.0,417.0 722.0,416.1 724.0,415.1 726.0,414.1 728.0,413.2 730.0,412.2 732.0,411.3 734.0,410.4 736.0,409.6 738.0,408.7 740.0,407.8 742.0,406.9 744.0,406.0 746.0,405.1 748.0,404.2 750.0,403.3 752.0,402.4 754.0,401.4 756.0,400.5" fill="none" stroke="#fff" stroke-width="1"/>
<polyline points="756.0,294.5 758.0,294.1 760.0,293.7 762.0,293.3 764.0,292.9 766.0,292.4 768.0,292.0 770.0,291.5 772.0,291.0 774.0,290.5 776.0,289.9 778.0,289.4 780.0,288.9 782.0,288.4 784.0,288.0 786.0,287.6 788.0,287.3 790.0,286.9 792.0,286.6 794.0,286.3 796.0,286.1 798.0,286.0 800.0,285.9 802.0,285.8 804.0,285.7 806.0,285.7 808.0,285.6 810.0,285.5 812.0,285.5 814.0,285.4 816.0,285.4 818.0,285.3 820.0,285.3 822.0,285.2 824.0,285.2 826.0,285.1 828.0,285.1 830.0,285.0 832.0,285.0 834.0,285.0 836.0,284.9 838.0,284.9 840.0,284.9 842.0,284.9 844.0,284.9 846.0,285.0 848.0,285.0 850.0,285.1 852.0,285.2 854.0,285.3 856.0,285.4 858.0,285.5 860.0,285.6 862.0,285.7 864.0,285.9 866.0,286.1 868.0,286.3 870.0,286.6 872.0,286.8 874.0,287.1 876.0,287.4 878.0,287.6 880.0,287.8 882.0,288.1 884.0,288.3 886.0,288.5 888.0,288.7 890.0,288.9 892.0,289.2 894.0,289.4 896.0,289.6 898.0,289.9 900.0,290.1 902.0,290.3 904.0,290.6 906.0,290.8 908.0,291.1 910.0,291.4 912.0,291.7 914.0,292.0 916.0,292.3 918.0,292.6 920.0,293.0 922.0,293.3 924.0,293.7 926.0,294.2 928.0,294.6 930.0,295.0 932.0,295.5 934.0,296.0 936.0,296.4 938.0,296.9 940.0,297.4 942.0,297.9 944.0,298.4 946.0,298.9 948.0,299.4 950.0,299.9 952.0,300.4 954.0,300.9 956.0,301.4 958.0,301.9 960.0,302.4 962.0,302.9 964.0,303.5 966.0,304.0 968.0,304.5 970.0,305.0 972.0,305.4 974.0,305.9 976.0,306.3 978.0,306.7 980.0,307.1 982.0,307.5 984.0,307.8 986.0,308.2 988.0,308.6 990.0,308.9 992.0,309.3 994.0,309.6 996.0,309.9 998.0,310.3 1000.0,310.6 1002.0,310.9 1004.0,311.2 1006.0,311.5 1008.0,311.8 1010.0,312.1 1012.0,312.4 1014.0,312.7 1016.0,313.0 1018.0,313.3 1020.0,313.5 1022.0,313.8 1024.0,314.0 1026.0,314.3 1028.0,314.5 1030.0,314.8 1032.0,315.0 1034.0,315.3 1036.0,315.5 1038.0,315.7 1040.0,316.0 1042.0,316.2 1044.0,316.5 1046.0,316.7 1048.0,317.0 1050.0,317.2 1052.0,317.4 1054.0,317.7 1056.0,317.9 1058.0,318.2 1060.0,318.4 1062.0,318.6 1064.0,318.9 1066.0,319.1 1068.0,319.4 1070.0,319.6 1072.0,319.8 1074.0,320.1 1076.0,320.3 1078.0,320.6 1080.0,320.8 1082.0,321.1 1084.0,321.4 1086.0,321.6 1088.0,321.9 1090.0,322.2 1092.0,322.5 1094.0,322.9 1096.0,323.2 1098.0,323.5 1100.0,323.7 1102.0,323.9 1104.0,324.1 1106.0,324.2 1108.0,324.4 1110.0,324.6 1112.0,324.8 1114.0,324.9 1116.0,325.1 1118.0,325.2 1120.0,325.4 1122.0,325.5 1124.0,325.6 1126.0,325.7 1128.0,325.8 1130.0,325.9 1132.0,325.9 1134.0,326.0 1136.0,326.0 1138.0,326.0 1140.0,326.0 1142.0,326.0 1144.0,326.0 1146.0,326.0 1148.0,326.0 1150.0,326.0 1152.0,326.0 1154.0,326.0 1156.0,326.0 1158.0,326.0 1160.0,326.0 1162.0,326.0 1164.0,326.0 1166.0,326.0 1168.0,326.0 1170.0,326.0 1172.0,326.0 1174.0,326.0 1176.0,326.0 1178.0,326.0 1180.0,326.0 1182.0,326.0 1184.0,326.0 1186.0,326.0 1188.0,326.0 1190.0,326.0 1192.0,326.0 1194.0,326.0 1196.0,326.0 1198.0,326.0 1200.0,326.0 1202.0,326.0 1204.0,326.0 1206.0,326.0 1208.0,326.0 1210.0,326.0 1212.0,326.0 1214.0,326.0 1216.0,326.0 1218.0,326.0 1220.0,326.0 1222.0,326.0 1224.0,326.0 1226.0,326.1 1228.0,326.2 1230.0,326.4 1232.0,326.6 1234.0,326.8 1236.0,327.0" fill="none" stroke="#fff" stroke-width="1"/>
<polyline points="756.0,400.5 758.0,399.3 760.0,398.1 762.0,396.9 764.0,395.7 766.0,394.5 768.0,393.4 770.0,392.2 772.0,391.1 774.0,390.0 776.0,388.9 778.0,387.7 780.0,386.6 782.0,385.6 784.0,384.5 786.0,383.5 788.0,382.4 790.0,381.5 792.0,380.5 794.0,379.5 796.0,378.6 798.0,377.7 800.0,376.8 802.0,375.9 804.0,375.0 806.0,374.2 808.0,373.4 810.0,372.6 812.0,371.9 814.0,371.1 816.0,370.4 818.0,369.7 820.0,369.0 822.0,368.3 824.0,367.7 826.0,367.1 828.0,366.5 830.0,366.0 832.0,365.5 834.0,365.0 836.0,364.5 838.0,364.0 840.0,363.6 842.0,363.1 844.0,362.6 846.0,362.1 848.0,361.6 850.0,361.1 852.0,360.5 854.0,360.0 856.0,359.5 858.0,359.1 860.0,358.7 862.0,358.3 864.0,358.0 866.0,357.6 868.0,357.3 870.0,356.9 872.0,356.7 874.0,356.4 876.0,356.2 878.0,356.1 880.0,356.0 882.0,355.9 884.0,355.8 886.0,355.7 888.0,355.7 890.0,355.6 892.0,355.6 894.0,355.5 896.0,355.5 898.0,355.5 900.0,355.5 902.0,355.5 904.0,355.5 906.0,355.6 908.0,355.6 910.0,355.6 912.0,355.6 914.0,355.7 916.0,355.7 918.0,355.7 920.0,355.8 922.0,355.9 924.0,356.1 926.0,356.2 928.0,356.4 930.0,356.5 932.0,356.7 934.0,356.9 936.0,357.1 938.0,357.3 940.0,357.6 942.0,357.8 944.0,358.1 946.0,358.5 948.0,358.8 950.0,359.1 952.0,359.5 954.0,359.9 956.0,360.3 958.0,360.7 960.0,361.2 962.0,361.6 964.0,362.1 966.0,362.7 968.0,363.2 970.0,363.7 972.0,364.3 974.0,364.8 976.0,365.4 978.0,366.0 980.0,366.6 982.0,367.2 984.0,367.8 986.0,368.5 988.0,369.1 990.0,369.7 992.0,370.2 994.0,370.8 996.0,371.3 998.0,371.9 1000.0,372.4 1002.0,372.9 1004.0,373.4 1006.0,373.9 1008.0,374.4 1010.0,374.8 1012.0,375.3 1014.0,375.7 1016.0,376.1 1018.0,376.5 1020.0,376.9 1022.0,377.3 1024.0,377.7 1026.0,378.1 1028.0,378.5 1030.0,378.9 1032.0,379.3 1034.0,379.7 1036.0,380.1 1038.0,380.5 1040.0,380.9 1042.0,381.3 1044.0,381.7 1046.0,382.1 1048.0,382.5 1050.0,382.9 1052.0,383.3 1054.0,383.7 1056.0,384.1 1058.0,384.5 1060.0,384.8 1062.0,385.2 1064.0,385.6 1066.0,386.0 1068.0,386.4 1070.0,386.8 1072.0,387.3 1074.0,387.7 1076.0,388.1 1078.0,388.5 1080.0,388.9 1082.0,389.3 1084.0,389.7 1086.0,390.1 1088.0,390.4 1090.0,390.8 1092.0,391.1 1094.0,391.5 1096.0,391.8 1098.0,392.1 1100.0,392.4 1102.0,392.7 1104.0,392.9 1106.0,393.2 1108.0,393.4 1110.0,393.6 1112.0,393.8 1114.0,394.0 1116.0,394.1 1118.0,394.3 1120.0,394.4 1122.0,394.6 1124.0,394.7 1126.0,394.9 1128.0,395.0 1130.0,395.1 1132.0,395.2 1134.0,395.3 1136.0,395.4 1138.0,395.5 1140.0,395.6 1142.0,395.7 1144.0,395.8 1146.0,395.8 1148.0,395.9 1150.0,396.0 1152.0,396.0 1154.0,396.1 1156.0,396.2 1158.0,396.2 1160.0,396.3 1162.0,396.3 1164.0,396.4 1166.0,396.4 1168.0,396.5 1170.0,396.5 1172.0,396.6 1174.0,396.6 1176.0,396.6 1178.0,396.7 1180.0,396.7 1182.0,396.7 1184.0,396.8 1186.0,396.8 1188.0,396.9 1190.0,396.9 1192.0,396.9 1194.0,397.0 1196.0,397.0 1198.0,397.1 1200.0,397.1 1202.0,397.2 1204.0,397.2 1206.0,397.3 1208.0,397.3 1210.0,397.3 1212.0,397.4 1214.0,397.4 1216.0,397.5 1218.0,397.5 1220.0,397.6 1222.0,397.6 1224.0,397.7 1226.0,397.7 1228.0,397.8 1230.0,397.8 1232.0,397.9 1234.0,397.9 1236.0,398.0" fill="none" stroke="#fff" stroke-width="1"/>
<rect x="-2" y="140" width="5" height="21" fill="#0000ff"/><rect x="6" y="151" width="5" height="24" fill="#0000ff"/><rect x="14" y="162" width="5" height="25" fill="#0000ff"/><rect x="22" y="174" width="5" height="29" fill="#0000ff"/><rect x="30" y="188" width="5" height="34" fill="#0000ff"/><rect x="38" y="205" width="5" height="33" fill="#0000ff"/><rect x="46" y="221" width="5" height="29" fill="#0000ff"/><rect x="54" y="235" width="5" height="26" fill="#0000ff"/><rect x="62" y="248" width="5" height="26" fill="#0000ff"/><rect x="70" y="261" width="5" height="26" fill="#0000ff"/><rect x="78" y="273" width="5" height="27" fill="#0000ff"/><rect x="86" y="286" width="5" height="26" fill="#0000ff"/><rect x="94" y="298" width="5" height="27" fill="#0000ff"/><rect x="102" y="311" width="5" height="26" fill="#0000ff"/><rect x="110" y="324" width="5" height="23" fill="#0000ff"/><rect x="118" y="335" width="5" height="18" fill="#0000ff"/><rect x="126" y="343" width="5" height="17" fill="#0000ff"/><rect x="134" y="351" width="5" height="15" fill="#0000ff"/><rect x="142" y="358" width="5" height="14" fill="#0000ff"/><rect x="150" y="365" width="5" height="12" fill="#0000ff"/><rect x="158" y="371" width="5" height="10" fill="#0000ff"/><rect x="166" y="375" width="5" height="10" fill="#0000ff"/><rect x="174" y="379" width="5" height="6" fill="#0000ff"/><rect x="182" y="382" width="5" height="2" fill="#0000ff"/><rect x="190" y="383" width="5" height="1" fill="#0000ff"/><rect x="198" y="381" width="5" height="3" fill="#ffffff"/><rect x="206" y="380" width="5" height="3" fill="#ffffff"/><rect x="214" y="380" width="5" height="2" fill="#ffffff"/><rect x="222" y="380" width="5" height="2" fill="#0000ff"/><rect x="230" y="381" width="5" height="4" fill="#0000ff"/><rect x="238" y="382" width="5" height="4" fill="#0000ff"/><rect x="246" y="384" width="5" height="4" fill="#0000ff"/><rect x="254" y="385" width="5" height="4" fill="#0000ff"/><rect x="262" y="386" width="5" height="2" fill="#0000ff"/><rect x="270" y="387" width="5" height="2" fill="#0000ff"/><rect x="278" y="387" width="5" height="1" fill="#0000ff"/><rect x="286" y="385" width="5" height="3" fill="#ffffff"/><rect x="294" y="382" width="5" height="5" fill="#ffffff"/><rect x="302" y="380" width="5" height="5" fill="#ffffff"/><rect x="310" y="378" width="5" height="5" fill="#ffffff"/><rect x="318" y="376" width="5" height="5" fill="#ffffff"/><rect x="326" y="375" width="5" height="4" fill="#ffffff"/><rect x="334" y="374" width="5" height="4" fill="#ffffff"/><rect x="342" y="373" width="5" height="4" fill="#ffffff"/><rect x="350" y="373" width="5" height="3" fill="#ffffff"/><rect x="358" y="372" width="5" height="3" fill="#ffffff"/><rect x="366" y="371" width="5" height="4" fill="#ffffff"/><rect x="374" y="367" width="5" height="6" fill="#ffffff"/><rect x="382" y="364" width="5" height="7" fill="#ffffff"/><rect x="390" y="360" width="5" height="8" fill="#ffffff"/><rect x="398" y="356" width="5" height="9" fill="#ffffff"/><rect x="406" y="352" width="5" height="9" fill="#ffffff"/><rect x="414" y="348" width="5" height="9" fill="#ffffff"/><rect x="422" y="344" width="5" height="9" fill="#ffffff"/><rect x="430" y="341" width="5" height="8" fill="#ffffff"/><rect x="438" y="337" width="5" height="9" fill="#ffffff"/><rect x="446" y="331" width="5" height="11" fill="#ffffff"/><rect x="454" y="326" width="5" height="11" fill="#ffffff"/><rect x="462" y="322" width="5" height="10" fill="#ffffff"/><rect x="470" y="318" width="5" height="9" fill="#ffffff"/><rect x="478" y="315" width="5" height="8" fill="#ffffff"/><rect x="486" y="312" width="5" height="8" fill="#ffffff"/><rect x="494" y="306" width="5" height="10" fill="#ffffff"/><rect x="502" y="300" width="5" height="12" fill="#ffffff"/><rect x="510" y="295" width="5" height="11" fill="#ffffff"/><rect x="518" y="291" width="5" height="9" fill="#ffffff"/><rect x="526" y="287" width="5" height="10" fill="#ffffff"/><rect x="534" y="285" width="5" height="8" fill="#ffffff"/><rect x="542" y="288" width="5" height="2" fill="#0000ff"/><rect x="550" y="288" width="5" height="7" fill="#0000ff"/><rect x="558" y="291" width="5" height="9" fill="#0000ff"/><rect x="566" y="296" width="5" height="12" fill="#0000ff"/><rect x="574" y="301" width="5" height="18" fill="#0000ff"/><rect x="582" y="310" width="5" height="22" fill="#0000ff"/><rect x="590" y="320" width="5" height="24" fill="#0000ff"/><rect x="598" y="332" width="5" height="21" fill="#0000ff"/><rect x="606" y="342" width="5" height="17" fill="#0000ff"/><rect x="614" y="350" width="5" height="14" fill="#0000ff"/><rect x="622" y="358" width="5" height="12" fill="#0000ff"/><rect x="630" y="363" width="5" height="13" fill="#0000ff"/><rect x="638" y="369" width="5" height="9" fill="#0000ff"/><rect x="646" y="374" width="5" height="4" fill="#0000ff"/><rect x="654" y="375" width="5" height="1" fill="#0000ff"/><rect x="662" y="375" width="5" height="2" fill="#0000ff"/><rect x="670" y="375" width="5" height="2" fill="#0000ff"/><rect x="678" y="376" width="5" height="2" fill="#0000ff"/><rect x="686" y="376" width="5" height="2" fill="#0000ff"/><rect x="694" y="376" width="5" height="5" fill="#0000ff"/><rect x="702" y="378" width="5" height="4" fill="#0000ff"/><rect x="710" y="380" width="5" height="2" fill="#0000ff"/><rect x="718" y="379" width="5" height="2" fill="#ffffff"/><rect x="726" y="376" width="5" height="5" fill="#ffffff"/><rect x="734" y="374" width="5" height="5" fill="#ffffff"/><rect x="742" y="374" width="5" height="3" fill="#ffffff"/><rect x="750" y="372" width="5" height="4" fill="#ffffff"/><rect x="758" y="370" width="5" height="5" fill="#ffffff"/><rect x="766" y="365" width="5" height="7" fill="#ffffff"/><rect x="774" y="362" width="5" height="7" fill="#ffffff"/><rect x="782" y="358" width="5" height="8" fill="#ffffff"/><rect x="790" y="353" width="5" height="10" fill="#ffffff"/><rect x="798" y="347" width="5" height="10" fill="#ffffff"/><rect x="806" y="343" width="5" height="10" fill="#ffffff"/><rect x="814" y="339" width="5" height="9" fill="#ffffff"/><rect x="822" y="336" width="5" height="8" fill="#ffffff"/><rect x="830" y="334" width="5" height="7" fill="#ffffff"/><rect x="838" y="331" width="5" height="7" fill="#ffffff"/><rect x="846" y="329" width="5" height="6" fill="#ffffff"/><rect x="854" y="326" width="5" height="6" fill="#ffffff"/><rect x="862" y="323" width="5" height="6" fill="#ffffff"/><rect x="870" y="322" width="5" height="5" fill="#ffffff"/><rect x="878" y="320" width="5" height="5" fill="#ffffff"/><rect x="886" y="319" width="5" height="4" fill="#ffffff"/><rect x="894" y="318" width="5" height="4" fill="#ffffff"/><rect x="902" y="319" width="5" height="1" fill="#ffffff"/><rect x="910" y="319" width="5" height="1" fill="#ffffff"/><rect x="918" y="319" width="5" height="1" fill="#ffffff"/><rect x="926" y="319" width="5" height="2" fill="#0000ff"/><rect x="934" y="319" width="5" height="2" fill="#0000ff"/><rect x="942" y="320" width="5" height="1" fill="#0000ff"/><rect x="950" y="320" width="5" height="2" fill="#0000ff"/><rect x="958" y="320" width="5" height="3" fill="#0000ff"/><rect x="966" y="321" width="5" height="3" fill="#0000ff"/><rect x="974" y="322" width="5" height="5" fill="#0000ff"/><rect x="982" y="324" width="5" height="5" fill="#0000ff"/><rect x="990" y="326" width="5" height="5" fill="#0000ff"/><rect x="998" y="328" width="5" height="5" fill="#0000ff"/><rect x="1006" y="330" width="5" height="4" fill="#0000ff"/><rect x="1014" y="331" width="5" height="5" fill="#0000ff"/><rect x="1022" y="333" width="5" height="5" fill="#0000ff"/><rect x="1030" y="335" width="5" height="4" fill="#0000ff"/><rect x="1038" y="336" width="5" height="1" fill="#0000ff"/><rect x="1046" y="336" width="5" height="2" fill="#0000ff"/><rect x="1054" y="337" width="5" height="1" fill="#0000ff"/><rect x="1062" y="337" width="5" height="1" fill="#ffffff"/><rect x="1070" y="337" width="5" height="1" fill="#0000ff"/><rect x="1078" y="337" width="5" height="3" fill="#0000ff"/><rect x="1086" y="338" width="5" height="4" fill="#0000ff"/><rect x="1094" y="340" width="5" height="5" fill="#0000ff"/><rect x="1102" y="342" width="5" height="5" fill="#0000ff"/><rect x="1110" y="344" width="5" height="4" fill="#0000ff"/><rect x="1118" y="346" width="5" height="4" fill="#0000ff"/><rect x="1126" y="347" width="5" height="5" fill="#0000ff"/><rect x="1134" y="349" width="5" height="6" fill="#0000ff"/><rect x="1142" y="352" width="5" height="5" fill="#0000ff"/><rect x="1150" y="355" width="5" height="5" fill="#0000ff"/><rect x="1158" y="358" width="5" height="6" fill="#0000ff"/><rect x="1166" y="360" width="5" height="6" fill="#0000ff"/><rect x="1174" y="363" width="5" height="3" fill="#0000ff"/><rect x="1182" y="364" width="5" height="3" fill="#0000ff"/><rect x="1190" y="364" width="5" height="3" fill="#0000ff"/><rect x="1198" y="363" width="5" height="3" fill="#ffffff"/><rect x="1206" y="362" width="5" height="3" fill="#ffffff"/><rect x="1214" y="361" width="5" height="4" fill="#ffffff"/><rect x="1222" y="358" width="5" height="5" fill="#ffffff"/><rect x="1230" y="352" width="5" height="6" fill="#ffffff"/>
</g>
<rect x="0" y="40" width="1611" height="1" fill="#ff0000" />
<rect x="0" y="52" width="1611" height="1" fill="#00ee76" />
<rect x="0" y="87" width="1611" height="1" fill="#ff0000" />
<rect x="0" y="216" width="1611" height="1" fill="#ff0000" />
<rect x="0" y="357" width="1611" height="1" fill="#ffff00" />
<rect x="0" y="373" width="1611" height="1" fill="#00ee76" />
<rect x="0" y="486" width="1611" height="1" fill="#00ee76" />
<rect x="1286" y="510" width="4" height="1" fill="#00ff00"/><rect x="1288" y="509" width="1" height="1" fill="#00ff00"/>
<rect x="0" y="512" width="1612" height="1" fill="#fff"/>
<rect x="0" y="514" width="1612" height="1" fill="#fff"/>
<rect x="1611" y="0" width="1" height="513" fill="#fff"/>
<rect x="1611" y="514" width="1" height="232" fill="#fff"/>
<rect x="0" y="745" width="1612" height="1" fill="#fff"/>
<rect x="0" y="766" width="1651" height="2" fill="#fff"/>
<g clip-path="url(#ci)">
<rect x="0" y="579" width="1" height="32" fill="#008000"/><rect x="8" y="579" width="1" height="34" fill="#008000"/><rect x="16" y="579" width="1" height="27" fill="#008000"/><rect x="24" y="579" width="1" height="40" fill="#008000"/><rect x="32" y="579" width="1" height="49" fill="#008000"/><rect x="40" y="579" width="1" height="36" fill="#008000"/><rect x="48" y="579" width="1" height="21" fill="#008000"/><rect x="56" y="579" width="1" height="15" fill="#008000"/><rect x="64" y="579" width="1" height="9" fill="#008000"/><rect x="72" y="579" width="1" height="4" fill="#008000"/><rect x="80" y="579" width="1" height="2" fill="#008000"/><rect x="88" y="579" width="1" height="2" fill="#008000"/><rect x="96" y="579" width="1" height="5" fill="#008000"/><rect x="104" y="578" width="1" height="2" fill="#ffff00"/><rect x="112" y="567" width="1" height="13" fill="#ffff00"/><rect x="120" y="558" width="1" height="22" fill="#ffff00"/><rect x="128" y="551" width="1" height="29" fill="#ffff00"/><rect x="136" y="549" width="1" height="31" fill="#ffff00"/><rect x="144" y="550" width="1" height="30" fill="#ffff00"/><rect x="152" y="547" width="1" height="33" fill="#ffff00"/><rect x="160" y="550" width="1" height="30" fill="#ffff00"/><rect x="168" y="547" width="1" height="33" fill="#ffff00"/><rect x="176" y="540" width="1" height="40" fill="#ffff00"/><rect x="184" y="538" width="1" height="42" fill="#ffff00"/><rect x="192" y="537" width="1" height="43" fill="#ffff00"/><rect x="200" y="536" width="1" height="44" fill="#ffff00"/><rect x="208" y="541" width="1" height="39" fill="#ffff00"/><rect x="216" y="549" width="1" height="31" fill="#ffff00"/><rect x="224" y="563" width="1" height="17" fill="#ffff00"/><rect x="232" y="570" width="1" height="10" fill="#ffff00"/><rect x="240" y="576" width="1" height="4" fill="#ffff00"/><rect x="248" y="579" width="1" height="1" fill="#ffff00"/><rect x="256" y="575" width="1" height="5" fill="#ffff00"/><rect x="264" y="571" width="1" height="9" fill="#ffff00"/><rect x="272" y="573" width="1" height="7" fill="#ffff00"/><rect x="280" y="567" width="1" height="13" fill="#ffff00"/><rect x="288" y="563" width="1" height="17" fill="#ffff00"/><rect x="296" y="560" width="1" height="20" fill="#ffff00"/><rect x="304" y="563" width="1" height="17" fill="#ffff00"/><rect x="312" y="566" width="1" height="14" fill="#ffff00"/><rect x="320" y="565" width="1" height="15" fill="#ffff00"/><rect x="328" y="574" width="1" height="6" fill="#ffff00"/><rect x="336" y="578" width="1" height="2" fill="#ffff00"/><rect x="344" y="578" width="1" height="2" fill="#ffff00"/><rect x="352" y="579" width="1" height="2" fill="#008000"/><rect x="368" y="574" width="1" height="6" fill="#ffff00"/><rect x="376" y="568" width="1" height="12" fill="#ffff00"/><rect x="384" y="569" width="1" height="11" fill="#ffff00"/><rect x="392" y="566" width="1" height="14" fill="#ffff00"/><rect x="400" y="564" width="1" height="16" fill="#ffff00"/><rect x="408" y="565" width="1" height="15" fill="#ffff00"/><rect x="416" y="566" width="1" height="14" fill="#ffff00"/><rect x="424" y="572" width="1" height="8" fill="#ffff00"/><rect x="432" y="571" width="1" height="9" fill="#ffff00"/><rect x="440" y="573" width="1" height="7" fill="#ffff00"/><rect x="448" y="567" width="1" height="13" fill="#ffff00"/><rect x="456" y="569" width="1" height="11" fill="#ffff00"/><rect x="464" y="573" width="1" height="7" fill="#ffff00"/><rect x="472" y="577" width="1" height="3" fill="#ffff00"/><rect x="488" y="579" width="1" height="2" fill="#008000"/><rect x="496" y="575" width="1" height="5" fill="#ffff00"/><rect x="504" y="573" width="1" height="7" fill="#ffff00"/><rect x="512" y="575" width="1" height="5" fill="#ffff00"/><rect x="520" y="577" width="1" height="3" fill="#ffff00"/><rect x="528" y="578" width="1" height="2" fill="#ffff00"/><rect x="536" y="579" width="1" height="8" fill="#008000"/><rect x="544" y="579" width="1" height="27" fill="#008000"/><rect x="552" y="579" width="1" height="39" fill="#008000"/><rect x="560" y="579" width="1" height="47" fill="#008000"/><rect x="568" y="579" width="1" height="56" fill="#008000"/><rect x="576" y="579" width="1" height="67" fill="#008000"/><rect x="584" y="579" width="1" height="76" fill="#008000"/><rect x="592" y="579" width="1" height="66" fill="#008000"/><rect x="600" y="579" width="1" height="47" fill="#008000"/><rect x="608" y="579" width="1" height="31" fill="#008000"/><rect x="616" y="579" width="1" height="16" fill="#008000"/><rect x="624" y="579" width="1" height="5" fill="#008000"/><rect x="632" y="579" width="1" height="2" fill="#008000"/><rect x="640" y="565" width="1" height="15" fill="#ffff00"/><rect x="648" y="554" width="1" height="26" fill="#ffff00"/><rect x="656" y="550" width="1" height="30" fill="#ffff00"/><rect x="664" y="551" width="1" height="29" fill="#ffff00"/><rect x="672" y="552" width="1" height="28" fill="#ffff00"/><rect x="680" y="555" width="1" height="25" fill="#ffff00"/><rect x="688" y="565" width="1" height="15" fill="#ffff00"/><rect x="696" y="573" width="1" height="7" fill="#ffff00"/><rect x="704" y="571" width="1" height="9" fill="#ffff00"/><rect x="712" y="569" width="1" height="11" fill="#ffff00"/><rect x="720" y="562" width="1" height="18" fill="#ffff00"/><rect x="728" y="562" width="1" height="18" fill="#ffff00"/><rect x="736" y="559" width="1" height="21" fill="#ffff00"/><rect x="744" y="565" width="1" height="15" fill="#ffff00"/><rect x="752" y="569" width="1" height="11" fill="#ffff00"/><rect x="760" y="560" width="1" height="20" fill="#ffff00"/><rect x="768" y="562" width="1" height="18" fill="#ffff00"/><rect x="776" y="566" width="1" height="14" fill="#ffff00"/><rect x="784" y="562" width="1" height="18" fill="#ffff00"/><rect x="792" y="557" width="1" height="23" fill="#ffff00"/><rect x="800" y="559" width="1" height="21" fill="#ffff00"/><rect x="808" y="565" width="1" height="15" fill="#ffff00"/><rect x="816" y="570" width="1" height="10" fill="#ffff00"/><rect x="824" y="575" width="1" height="5" fill="#ffff00"/><rect x="840" y="579" width="1" height="4" fill="#008000"/><rect x="848" y="579" width="1" height="3" fill="#008000"/><rect x="856" y="579" width="1" height="2" fill="#008000"/><rect x="864" y="579" width="1" height="4" fill="#008000"/><rect x="872" y="579" width="1" height="7" fill="#008000"/><rect x="880" y="579" width="1" height="6" fill="#008000"/><rect x="888" y="579" width="1" height="7" fill="#008000"/><rect x="896" y="579" width="1" height="11" fill="#008000"/><rect x="904" y="579" width="1" height="14" fill="#008000"/><rect x="912" y="579" width="1" height="12" fill="#008000"/><rect x="920" y="579" width="1" height="13" fill="#008000"/><rect x="928" y="579" width="1" height="14" fill="#008000"/><rect x="936" y="579" width="1" height="12" fill="#008000"/><rect x="944" y="579" width="1" height="11" fill="#008000"/><rect x="952" y="579" width="1" height="9" fill="#008000"/><rect x="960" y="579" width="1" height="9" fill="#008000"/><rect x="968" y="579" width="1" height="11" fill="#008000"/><rect x="976" y="579" width="1" height="14" fill="#008000"/><rect x="984" y="579" width="1" height="14" fill="#008000"/><rect x="992" y="579" width="1" height="11" fill="#008000"/><rect x="1000" y="579" width="1" height="9" fill="#008000"/><rect x="1008" y="579" width="1" height="7" fill="#008000"/><rect x="1016" y="579" width="1" height="4" fill="#008000"/><rect x="1024" y="579" width="1" height="5" fill="#008000"/><rect x="1040" y="573" width="1" height="7" fill="#ffff00"/><rect x="1048" y="578" width="1" height="2" fill="#ffff00"/><rect x="1056" y="576" width="1" height="4" fill="#ffff00"/><rect x="1064" y="572" width="1" height="8" fill="#ffff00"/><rect x="1072" y="576" width="1" height="4" fill="#ffff00"/><rect x="1080" y="579" width="1" height="2" fill="#008000"/><rect x="1088" y="579" width="1" height="8" fill="#008000"/><rect x="1096" y="579" width="1" height="8" fill="#008000"/><rect x="1104" y="579" width="1" height="7" fill="#008000"/><rect x="1112" y="579" width="1" height="6" fill="#008000"/><rect x="1120" y="579" width="1" height="6" fill="#008000"/><rect x="1128" y="579" width="1" height="6" fill="#008000"/><rect x="1136" y="579" width="1" height="8" fill="#008000"/><rect x="1144" y="579" width="1" height="9" fill="#008000"/><rect x="1152" y="579" width="1" height="7" fill="#008000"/><rect x="1160" y="579" width="1" height="8" fill="#008000"/><rect x="1168" y="579" width="1" height="2" fill="#008000"/><rect x="1176" y="577" width="1" height="3" fill="#ffff00"/><rect x="1184" y="575" width="1" height="5" fill="#ffff00"/><rect x="1192" y="566" width="1" height="14" fill="#ffff00"/><rect x="1200" y="563" width="1" height="17" fill="#ffff00"/><rect x="1208" y="562" width="1" height="18" fill="#ffff00"/><rect x="1216" y="563" width="1" height="17" fill="#ffff00"/><rect x="1224" y="558" width="1" height="22" fill="#ffff00"/><rect x="1232" y="552" width="1" height="28" fill="#ffff00"/>
<polyline points="0.0,678.3 1.0,680.6 2.0,682.8 3.0,684.9 4.0,686.8 5.0,688.6 6.0,690.1 7.0,691.3 8.0,692.2 9.0,692.8 10.0,693.2 11.0,693.6 12.0,693.8 13.0,694.0 14.0,694.3 15.0,694.5 16.0,694.9 17.0,695.3 18.0,696.2 19.0,697.7 20.0,699.8 21.0,702.3 22.0,705.2 23.0,708.4 24.0,711.8 25.0,715.2 26.0,718.5 27.0,721.8 28.0,724.8 29.0,727.4 30.0,729.6 31.0,731.2 32.0,732.2 33.0,732.5 34.0,732.5 35.0,732.4 36.0,732.3 37.0,732.1 38.0,731.9 39.0,731.7 40.0,731.4 41.0,731.2 42.0,730.9 43.0,730.4 44.0,729.7 45.0,728.9 46.0,728.2 47.0,727.4 48.0,726.8 49.0,726.4 50.0,726.3 51.0,726.3 52.0,726.5 53.0,726.6 54.0,726.8 55.0,727.1 56.0,727.4 57.0,727.7 58.0,728.0 59.0,728.3 60.0,728.6 61.0,728.9 62.0,729.2 63.0,729.4 64.0,729.7 65.0,729.8 66.0,730.0 67.0,730.2 68.0,730.3 69.0,730.5 70.0,730.6 71.0,730.8 72.0,730.9 73.0,731.0 74.0,731.2 75.0,731.3 76.0,731.5 77.0,731.6 78.0,731.7 79.0,731.9 80.0,732.0 81.0,732.2 82.0,732.3 83.0,732.5 84.0,732.7 85.0,732.9 86.0,733.1 87.0,733.3 88.0,733.5 89.0,733.7 90.0,733.8 91.0,734.0 92.0,734.1 93.0,734.3 94.0,734.4 95.0,734.4 96.0,734.5 97.0,734.5 98.0,734.4 99.0,734.0 100.0,733.4 101.0,732.6 102.0,731.7 103.0,730.8 104.0,729.8 105.0,728.8 106.0,727.9 107.0,727.0 108.0,725.9 109.0,724.8 110.0,723.6 111.0,722.4 112.0,721.1 113.0,719.8 114.0,718.4 115.0,717.0 116.0,715.7 117.0,714.3 118.0,712.9 119.0,711.6 120.0,710.3 121.0,709.0 122.0,707.7 123.0,706.5 124.0,705.4 125.0,704.1 126.0,702.9 127.0,701.7 128.0,700.4 129.0,699.2 130.0,698.0 131.0,696.9 132.0,695.8 133.0,694.7 134.0,693.7 135.0,692.8 136.0,691.9 137.0,691.1 138.0,690.5 139.0,689.9 140.0,689.4 141.0,688.9 142.0,688.4 143.0,687.9 144.0,687.3 145.0,686.7 146.0,685.9 147.0,684.8 148.0,683.6 149.0,682.3 150.0,680.9 151.0,679.4 152.0,678.0 153.0,676.7 154.0,675.6 155.0,674.6 156.0,673.8 157.0,673.0 158.0,672.2 159.0,671.5 160.0,670.7 161.0,669.9 162.0,668.9 163.0,667.9 164.0,666.6 165.0,665.2 166.0,663.8 167.0,662.2 168.0,660.6 169.0,659.0 170.0,657.4 171.0,655.8 172.0,654.3 173.0,652.8 174.0,651.3 175.0,649.8 176.0,648.3 177.0,646.8 178.0,645.3 179.0,643.8 180.0,642.2 181.0,640.7 182.0,639.2 183.0,637.7 184.0,636.2 185.0,634.7 186.0,633.2 187.0,631.6 188.0,630.0 189.0,628.4 190.0,626.7 191.0,625.0 192.0,623.4 193.0,621.7 194.0,620.2 195.0,618.6 196.0,617.2 197.0,615.8 198.0,614.6 199.0,613.4 200.0,612.4 201.0,611.5 202.0,610.5 203.0,609.7 204.0,608.9 205.0,608.1 206.0,607.3 207.0,606.6 208.0,606.0 209.0,605.4 210.0,604.8 211.0,604.3 212.0,603.7 213.0,603.2 214.0,602.7 215.0,602.2 216.0,602.0 217.0,601.9 218.0,602.1 219.0,602.5 220.0,603.1 221.0,603.7 222.0,604.3 223.0,604.9 224.0,605.3 225.0,605.6 226.0,605.6 227.0,605.6 228.0,605.6 229.0,605.5 230.0,605.5 231.0,605.5 232.0,605.4 233.0,605.3 234.0,605.3 235.0,605.2 236.0,605.1 237.0,605.0 238.0,604.9 239.0,604.8 240.0,604.7 241.0,604.6 242.0,604.5 243.0,604.3 244.0,604.2 245.0,604.1 246.0,603.9 247.0,603.8 248.0,603.6 249.0,603.4 250.0,603.1 251.0,602.7 252.0,602.1 253.0,601.5 254.0,600.8 255.0,600.1 256.0,599.4 257.0,598.6 258.0,597.9 259.0,597.2 260.0,596.6 261.0,596.0 262.0,595.5 263.0,595.1 264.0,594.8 265.0,594.7 266.0,594.7 267.0,594.9 268.0,595.2 269.0,595.5 270.0,595.8 271.0,596.0 272.0,596.2 273.0,596.2 274.0,595.9 275.0,595.5 276.0,594.8 277.0,594.0 278.0,593.1 279.0,592.1 280.0,591.1 281.0,590.0 282.0,588.9 283.0,587.8 284.0,586.8 285.0,585.9 286.0,585.0 287.0,584.1 288.0,583.2 289.0,582.2 290.0,581.2 291.0,580.3 292.0,579.4 293.0,578.5 294.0,577.7 295.0,577.1 296.0,576.5 297.0,576.1 298.0,575.7 299.0,575.4 300.0,575.2 301.0,574.9 302.0,574.7 303.0,574.5 304.0,574.3 305.0,574.1 306.0,573.9 307.0,573.6 308.0,573.3 309.0,573.0 310.0,572.5 311.0,572.0 312.0,571.5 313.0,570.9 314.0,570.3 315.0,569.8 316.0,569.3 317.0,569.0 318.0,568.7 319.0,568.5 320.0,568.5 321.0,568.7 322.0,569.0 323.0,569.4 324.0,569.8 325.0,570.3 326.0,570.7 327.0,571.0 328.0,571.3 329.0,571.4 330.0,571.6 331.0,571.7 332.0,571.9 333.0,572.0 334.0,572.1 335.0,572.2 336.0,572.2 337.0,572.2 338.0,572.1 339.0,571.9 340.0,571.6 341.0,571.3 342.0,571.0 343.0,570.8 344.0,570.6 345.0,570.5 346.0,570.5 347.0,570.7 348.0,570.9 349.0,571.2 350.0,571.5 351.0,571.8 352.0,572.0 353.0,572.2 354.0,572.2 355.0,572.1 356.0,572.0 357.0,571.8 358.0,571.5 359.0,571.2 360.0,570.8 361.0,570.4 362.0,570.0 363.0,569.6 364.0,568.9 365.0,568.2 366.0,567.3 367.0,566.3 368.0,565.3 369.0,564.3 370.0,563.3 371.0,562.5 372.0,561.7 373.0,561.1 374.0,560.7 375.0,560.5 376.0,560.2 377.0,560.0 378.0,559.8 379.0,559.7 380.0,559.5 381.0,559.4 382.0,559.2 383.0,559.0 384.0,558.8 385.0,558.6 386.0,558.2 387.0,557.8 388.0,557.3 389.0,556.8 390.0,556.1 391.0,555.5 392.0,554.8 393.0,554.1 394.0,553.4 395.0,552.7 396.0,552.0 397.0,551.3 398.0,550.7 399.0,550.1 400.0,549.6 401.0,549.0 402.0,548.5 403.0,547.9 404.0,547.3 405.0,546.7 406.0,546.1 407.0,545.5 408.0,544.9 409.0,544.4 410.0,543.9 411.0,543.5 412.0,543.0 413.0,542.7 414.0,542.4 415.0,542.2 416.0,542.1 417.0,542.0 418.0,542.1 419.0,542.4 420.0,542.8 421.0,543.2 422.0,543.7 423.0,544.0 424.0,544.2 425.0,544.2 426.0,544.1 427.0,543.9 428.0,543.7 429.0,543.4 430.0,543.1 431.0,542.7 432.0,542.3 433.0,541.8 434.0,541.4 435.0,540.9 436.0,540.4 437.0,539.9 438.0,539.4 439.0,538.9 440.0,538.5 441.0,537.9 442.0,537.3 443.0,536.6 444.0,535.9 445.0,535.2 446.0,534.5 447.0,533.8 448.0,533.2 449.0,532.7 450.0,532.3 451.0,532.0 452.0,532.0 453.0,531.9 454.0,531.8 455.0,531.7 456.0,531.7 457.0,531.6 458.0,531.6 459.0,531.5 460.0,531.5 461.0,531.5 462.0,531.4 463.0,531.4 464.0,531.4 465.0,531.4 466.0,531.4 467.0,531.5 468.0,531.5 469.0,531.7 470.0,531.9 471.0,532.1 472.0,532.3 473.0,532.5 474.0,532.8 475.0,533.1 476.0,533.4 477.0,533.6 478.0,533.9 479.0,534.2 480.0,534.4 481.0,534.6 482.0,534.8 483.0,534.9 484.0,535.0 485.0,535.1 486.0,535.1 487.0,534.9 488.0,534.6 489.0,534.1 490.0,533.6 491.0,532.9 492.0,532.2 493.0,531.5 494.0,530.8 495.0,530.1 496.0,529.4 497.0,528.8 498.0,528.3 499.0,527.9 500.0,527.7 501.0,527.5 502.0,527.4 503.0,527.2 504.0,527.1 505.0,526.9 506.0,526.8 507.0,526.7 508.0,526.6 509.0,526.5 510.0,526.4 511.0,526.4 512.0,526.3 513.0,526.3 514.0,526.3 515.0,526.3 516.0,526.3 517.0,526.4 518.0,526.5 519.0,526.6 520.0,526.7 521.0,526.9 522.0,527.0 523.0,527.2 524.0,527.4 525.0,527.6 526.0,527.8 527.0,528.1 528.0,528.6 529.0,529.1 530.0,529.7 531.0,530.3 532.0,531.1 533.0,531.9 534.0,532.7 535.0,533.7 536.0,535.0 537.0,536.6 538.0,538.4 539.0,540.4 540.0,542.5 541.0,544.7 542.0,546.9 543.0,549.1 544.0,551.2 545.0,553.2 546.0,555.1 547.0,557.0 548.0,558.9 549.0,560.8 550.0,562.7 551.0,564.5 552.0,566.4 553.0,568.3 554.0,570.2 555.0,572.1 556.0,574.0 557.0,575.9 558.0,577.8 559.0,579.7 560.0,581.7 561.0,583.6 562.0,585.5 563.0,587.4 564.0,589.3 565.0,591.3 566.0,593.2 567.0,595.2 568.0,597.2 569.0,599.3 570.0,601.5 571.0,603.7 572.0,606.1 573.0,608.8 574.0,611.5 575.0,614.5 576.0,617.4 577.0,620.5 578.0,623.4 579.0,626.4 580.0,629.2 581.0,631.8 582.0,634.2 583.0,636.4 584.0,638.6 585.0,640.9 586.0,643.2 587.0,645.4 588.0,647.4 589.0,649.3 590.0,650.8 591.0,651.9 592.0,652.6 593.0,652.7 594.0,652.8 595.0,652.8 596.0,652.9 597.0,652.9 598.0,653.0 599.0,653.0 600.0,653.1 601.0,653.1 602.0,653.1 603.0,653.1 604.0,653.2 605.0,653.2 606.0,653.2 607.0,653.2 608.0,653.2 609.0,653.2 610.0,653.0 611.0,652.8 612.0,652.6 613.0,652.3 614.0,652.0 615.0,651.6 616.0,651.3 617.0,651.1 618.0,650.9 619.0,650.7 620.0,650.7 621.0,650.7 622.0,650.8 623.0,650.9 624.0,651.0 625.0,651.1 626.0,651.2 627.0,651.4 628.0,651.5 629.0,651.6 630.0,651.7 631.0,651.8 632.0,651.8 633.0,651.7 634.0,650.9 635.0,649.4 636.0,647.5 637.0,645.2 638.0,642.6 639.0,640.1 640.0,637.6 641.0,635.3 642.0,633.4 643.0,632.0 644.0,630.8 645.0,629.5 646.0,628.4 647.0,627.3 648.0,626.2 649.0,625.2 650.0,624.2 651.0,623.3 652.0,622.4 653.0,621.5 654.0,620.7 655.0,619.8 656.0,619.0 657.0,618.2 658.0,617.5 659.0,616.8 660.0,616.1 661.0,615.4 662.0,614.7 663.0,614.1 664.0,613.5 665.0,612.9 666.0,612.3 667.0,611.7 668.0,611.1 669.0,610.5 670.0,609.9 671.0,609.3 672.0,608.6 673.0,607.9 674.0,607.1 675.0,606.3 676.0,605.5 677.0,604.8 678.0,604.2 679.0,603.7 680.0,603.4 681.0,603.3 682.0,603.3 683.0,603.4 684.0,603.5 685.0,603.7 686.0,603.9 687.0,604.1 688.0,604.3 689.0,604.5 690.0,604.7 691.0,604.9 692.0,605.1 693.0,605.3 694.0,605.4 695.0,605.5 696.0,605.6 697.0,605.6 698.0,605.5 699.0,605.2 700.0,604.9 701.0,604.4 702.0,603.9 703.0,603.3 704.0,602.7 705.0,602.0 706.0,601.3 707.0,600.6 708.0,600.0 709.0,599.3 710.0,598.4 711.0,597.5 712.0,596.5 713.0,595.4 714.0,594.3 715.0,593.1 716.0,592.0 717.0,590.8 718.0,589.7 719.0,588.6 720.0,587.6 721.0,586.7 722.0,585.9 723.0,585.2 724.0,584.5 725.0,583.8 726.0,583.0 727.0,582.4 728.0,581.7 729.0,581.0 730.0,580.4 731.0,579.9 732.0,579.4 733.0,578.9 734.0,578.5 735.0,578.2 736.0,578.0 737.0,577.9 738.0,577.8 739.0,577.7 740.0,577.6 741.0,577.6 742.0,577.5 743.0,577.5 744.0,577.5 745.0,577.4 746.0,577.4 747.0,577.3 748.0,577.3 749.0,577.2 750.0,577.1 751.0,577.0 752.0,576.5 753.0,575.6 754.0,574.2 755.0,572.6 756.0,570.8 757.0,568.9 758.0,567.1 759.0,565.4 760.0,564.0 761.0,562.9 762.0,562.3 763.0,562.1 764.0,561.9 765.0,561.8 766.0,561.7 767.0,561.6 768.0,561.6 769.0,561.5 770.0,561.4 771.0,561.4 772.0,561.3 773.0,561.2 774.0,561.2 775.0,561.0 776.0,560.9 777.0,560.7 778.0,560.3 779.0,559.7 780.0,559.0 781.0,558.0 782.0,557.0 783.0,555.8 784.0,554.6 785.0,553.3 786.0,552.0 787.0,550.7 788.0,549.5 789.0,548.3 790.0,547.2 791.0,546.1 792.0,545.3 793.0,544.6 794.0,544.1 795.0,543.6 796.0,543.1 797.0,542.7 798.0,542.2 799.0,541.8 800.0,541.5 801.0,541.1 802.0,540.9 803.0,540.7 804.0,540.6 805.0,540.5 806.0,540.5 807.0,540.5 808.0,540.5 809.0,540.5 810.0,540.6 811.0,540.6 812.0,540.6 813.0,540.7 814.0,540.7 815.0,540.7 816.0,540.8 817.0,540.8 818.0,540.9 819.0,540.9 820.0,541.0 821.0,541.1 822.0,541.2 823.0,541.4 824.0,541.6 825.0,541.9 826.0,542.1 827.0,542.4 828.0,542.6 829.0,542.9 830.0,543.2 831.0,543.6 832.0,543.9 833.0,544.3 834.0,544.7 835.0,545.1 836.0,545.4 837.0,545.7 838.0,545.9 839.0,546.1 840.0,546.2 841.0,546.2 842.0,546.1 843.0,545.9 844.0,545.6 845.0,545.3 846.0,545.0 847.0,544.7 848.0,544.4 849.0,544.0 850.0,543.8 851.0,543.6 852.0,543.4 853.0,543.4 854.0,543.4 855.0,543.6 856.0,543.7 857.0,543.9 858.0,544.2 859.0,544.5 860.0,544.8 861.0,545.2 862.0,545.5 863.0,545.8 864.0,546.2 865.0,546.5 866.0,546.9 867.0,547.4 868.0,547.9 869.0,548.4 870.0,549.0 871.0,549.5 872.0,549.9 873.0,550.3 874.0,550.7 875.0,551.0 876.0,551.1 877.0,551.3 878.0,551.4 879.0,551.5 880.0,551.6 881.0,551.7 882.0,551.8 883.0,551.9 884.0,552.0 885.0,552.2 886.0,552.3 887.0,552.5 888.0,552.9 889.0,553.3 890.0,553.8 891.0,554.4 892.0,555.0 893.0,555.7 894.0,556.4 895.0,557.1 896.0,557.8 897.0,558.4 898.0,559.0 899.0,559.6 900.0,560.1 901.0,560.5 902.0,560.8 903.0,561.2 904.0,561.5 905.0,561.8 906.0,562.0 907.0,562.3 908.0,562.6 909.0,562.9 910.0,563.3 911.0,563.6 912.0,564.0 913.0,564.5 914.0,565.0 915.0,565.5 916.0,566.1 917.0,566.7 918.0,567.3 919.0,567.9 920.0,568.5 921.0,569.1 922.0,569.7 923.0,570.3 924.0,570.9 925.0,571.4 926.0,571.9 927.0,572.3 928.0,572.6 929.0,572.9 930.0,573.2 931.0,573.5 932.0,573.8 933.0,574.0 934.0,574.3 935.0,574.5 936.0,574.7 937.0,575.0 938.0,575.2 939.0,575.3 940.0,575.5 941.0,575.7 942.0,575.9 943.0,576.0 944.0,576.2 945.0,576.3 946.0,576.4 947.0,576.5 948.0,576.6 949.0,576.7 950.0,576.8 951.0,576.9 952.0,576.9 953.0,577.0 954.0,577.1 955.0,577.2 956.0,577.3 957.0,577.4 958.0,577.6 959.0,577.7 960.0,578.0 961.0,578.4 962.0,578.9 963.0,579.5 964.0,580.2 965.0,580.9 966.0,581.7 967.0,582.5 968.0,583.3 969.0,584.1 970.0,584.8 971.0,585.5 972.0,586.2 973.0,586.8 974.0,587.4 975.0,588.0 976.0,588.7 977.0,589.4 978.0,590.0 979.0,590.6 980.0,591.1 981.0,591.6 982.0,591.9 983.0,592.1 984.0,592.2 985.0,592.2 986.0,592.2 987.0,592.2 988.0,592.2 989.0,592.2 990.0,592.2 991.0,592.2 992.0,592.2 993.0,592.2 994.0,592.2 995.0,592.2 996.0,592.2 997.0,592.2 998.0,592.2 999.0,592.2 1000.0,592.2 1001.0,592.2 1002.0,592.3 1003.0,592.3 1004.0,592.5 1005.0,592.6 1006.0,592.8 1007.0,593.1 1008.0,593.3 1009.0,593.5 1010.0,593.7 1011.0,593.9 1012.0,594.1 1013.0,594.4 1014.0,594.6 1015.0,594.9 1016.0,595.2 1017.0,595.5 1018.0,595.8 1019.0,596.1 1020.0,596.3 1021.0,596.5 1022.0,596.7 1023.0,596.8 1024.0,596.9 1025.0,596.8 1026.0,596.6 1027.0,596.1 1028.0,595.5 1029.0,594.7 1030.0,593.9 1031.0,592.9 1032.0,592.0 1033.0,591.1 1034.0,590.1 1035.0,589.3 1036.0,588.6 1037.0,587.9 1038.0,587.5 1039.0,587.2 1040.0,587.2 1041.0,587.4 1042.0,587.6 1043.0,588.0 1044.0,588.4 1045.0,588.8 1046.0,589.1 1047.0,589.3 1048.0,589.4 1049.0,589.3 1050.0,589.2 1051.0,588.9 1052.0,588.6 1053.0,588.2 1054.0,587.8 1055.0,587.3 1056.0,586.8 1057.0,586.3 1058.0,585.8 1059.0,585.3 1060.0,584.9 1061.0,584.5 1062.0,584.2 1063.0,584.0 1064.0,583.8 1065.0,583.8 1066.0,583.9 1067.0,584.0 1068.0,584.2 1069.0,584.4 1070.0,584.7 1071.0,585.1 1072.0,585.4 1073.0,585.8 1074.0,586.2 1075.0,586.6 1076.0,587.0 1077.0,587.4 1078.0,587.8 1079.0,588.1 1080.0,588.5 1081.0,589.0 1082.0,589.4 1083.0,589.9 1084.0,590.4 1085.0,591.0 1086.0,591.5 1087.0,592.0 1088.0,592.5 1089.0,593.0 1090.0,593.4 1091.0,593.8 1092.0,594.2 1093.0,594.5 1094.0,594.8 1095.0,595.0 1096.0,595.1 1097.0,595.2 1098.0,595.3 1099.0,595.4 1100.0,595.4 1101.0,595.5 1102.0,595.6 1103.0,595.6 1104.0,595.7 1105.0,595.7 1106.0,595.8 1107.0,595.8 1108.0,595.9 1109.0,595.9 1110.0,596.0 1111.0,596.1 1112.0,596.1 1113.0,596.2 1114.0,596.3 1115.0,596.4 1116.0,596.5 1117.0,596.7 1118.0,596.8 1119.0,597.0 1120.0,597.2 1121.0,597.4 1122.0,597.6 1123.0,597.8 1124.0,598.0 1125.0,598.2 1126.0,598.5 1127.0,598.7 1128.0,599.0 1129.0,599.3 1130.0,599.6 1131.0,599.9 1132.0,600.3 1133.0,600.7 1134.0,601.2 1135.0,601.7 1136.0,602.1 1137.0,602.6 1138.0,603.1 1139.0,603.5 1140.0,603.9 1141.0,604.2 1142.0,604.5 1143.0,604.8 1144.0,605.0 1145.0,605.2 1146.0,605.4 1147.0,605.7 1148.0,605.9 1149.0,606.1 1150.0,606.3 1151.0,606.5 1152.0,606.7 1153.0,606.8 1154.0,607.0 1155.0,607.1 1156.0,607.2 1157.0,607.3 1158.0,607.4 1159.0,607.5 1160.0,607.5 1161.0,607.5 1162.0,607.4 1163.0,607.1 1164.0,606.8 1165.0,606.4 1166.0,605.8 1167.0,605.3 1168.0,604.7 1169.0,604.1 1170.0,603.5 1171.0,603.0 1172.0,602.5 1173.0,602.1 1174.0,601.8 1175.0,601.6 1176.0,601.4 1177.0,601.2 1178.0,601.0 1179.0,600.9 1180.0,600.7 1181.0,600.5 1182.0,600.3 1183.0,600.1 1184.0,599.9 1185.0,599.5 1186.0,599.2 1187.0,598.5 1188.0,597.3 1189.0,596.0 1190.0,594.5 1191.0,593.0 1192.0,591.7 1193.0,590.7 1194.0,589.9 1195.0,589.1 1196.0,588.4 1197.0,587.8 1198.0,587.1 1199.0,586.5 1200.0,585.9 1201.0,585.4 1202.0,584.9 1203.0,584.3 1204.0,583.8 1205.0,583.3 1206.0,582.9 1207.0,582.4 1208.0,582.1 1209.0,581.7 1210.0,581.3 1211.0,581.0 1212.0,580.6 1213.0,580.2 1214.0,579.8 1215.0,579.3 1216.0,578.8 1217.0,578.3 1218.0,577.6 1219.0,576.9 1220.0,576.0 1221.0,574.9 1222.0,573.8 1223.0,572.6 1224.0,571.4 1225.0,570.1 1226.0,568.9 1227.0,567.6 1228.0,566.3 1229.0,565.0 1230.0,563.6 1231.0,562.2 1232.0,560.8 1232.4,560.2" fill="none" stroke="#0000ff" stroke-width="1"/>
<polyline points="0.0,654.1 1.0,655.4 2.0,656.7 3.0,658.0 4.0,659.3 5.0,660.6 6.0,661.9 7.0,663.2 8.0,664.5 9.0,665.8 10.0,667.1 11.0,668.4 12.0,669.7 13.0,670.9 14.0,672.2 15.0,673.5 16.0,674.8 17.0,676.1 18.0,677.4 19.0,678.7 20.0,680.0 21.0,681.4 22.0,682.7 23.0,684.0 24.0,685.3 25.0,686.5 26.0,687.8 27.0,689.0 28.0,690.2 29.0,691.4 30.0,692.5 31.0,693.6 32.0,694.6 33.0,695.6 34.0,696.6 35.0,697.6 36.0,698.5 37.0,699.4 38.0,700.3 39.0,701.1 40.0,702.0 41.0,702.9 42.0,703.7 43.0,704.6 44.0,705.5 45.0,706.4 46.0,707.3 47.0,708.2 48.0,709.1 49.0,710.1 50.0,711.0 51.0,712.0 52.0,712.9 53.0,713.9 54.0,714.8 55.0,715.7 56.0,716.6 57.0,717.4 58.0,718.3 59.0,719.0 60.0,719.8 61.0,720.5 62.0,721.2 63.0,722.0 64.0,722.7 65.0,723.4 66.0,724.1 67.0,724.8 68.0,725.4 69.0,726.0 70.0,726.6 71.0,727.1 72.0,727.5 73.0,727.9 74.0,728.2 75.0,728.5 76.0,728.8 77.0,729.0 78.0,729.3 79.0,729.5 80.0,729.7 81.0,729.9 82.0,730.0 83.0,730.1 84.0,730.2 85.0,730.3 86.0,730.3 87.0,730.3 88.0,730.3 89.0,730.4 90.0,730.4 91.0,730.4 92.0,730.4 93.0,730.4 94.0,730.4 95.0,730.4 96.0,730.4 97.0,730.4 98.0,730.5 99.0,730.5 100.0,730.5 101.0,730.5 102.0,730.5 103.0,730.5 104.0,730.5 105.0,730.5 106.0,730.5 107.0,730.5 108.0,730.5 109.0,730.5 110.0,730.5 111.0,730.5 112.0,730.5 113.0,730.4 114.0,730.2 115.0,729.9 116.0,729.6 117.0,729.3 118.0,728.9 119.0,728.5 120.0,728.0 121.0,727.6 122.0,727.1 123.0,726.7 124.0,726.2 125.0,725.6 126.0,725.0 127.0,724.4 128.0,723.7 129.0,723.0 130.0,722.3 131.0,721.5 132.0,720.7 133.0,719.9 134.0,719.0 135.0,718.2 136.0,717.3 137.0,716.4 138.0,715.6 139.0,714.7 140.0,713.8 141.0,712.9 142.0,712.0 143.0,711.1 144.0,710.1 145.0,709.2 146.0,708.2 147.0,707.1 148.0,706.1 149.0,705.1 150.0,704.0 151.0,703.0 152.0,701.9 153.0,700.9 154.0,699.9 155.0,698.8 156.0,697.8 157.0,696.8 158.0,695.8 159.0,694.8 160.0,693.9 161.0,692.9 162.0,691.9 163.0,691.0 164.0,690.0 165.0,689.0 166.0,688.1 167.0,687.1 168.0,686.1 169.0,685.1 170.0,684.1 171.0,683.0 172.0,682.0 173.0,680.9 174.0,679.8 175.0,678.7 176.0,677.5 177.0,676.3 178.0,675.1 179.0,673.8 180.0,672.5 181.0,671.3 182.0,670.0 183.0,668.6 184.0,667.3 185.0,666.0 186.0,664.6 187.0,663.3 188.0,662.0 189.0,660.6 190.0,659.3 191.0,658.0 192.0,656.7 193.0,655.4 194.0,654.1 195.0,652.8 196.0,651.5 197.0,650.3 198.0,649.0 199.0,647.7 200.0,646.4 201.0,645.1 202.0,643.8 203.0,642.5 204.0,641.3 205.0,640.0 206.0,638.8 207.0,637.5 208.0,636.3 209.0,635.1 210.0,634.0 211.0,632.8 212.0,631.7 213.0,630.5 214.0,629.4 215.0,628.3 216.0,627.2 217.0,626.1 218.0,625.0 219.0,623.9 220.0,622.9 221.0,621.8 222.0,620.9 223.0,619.9 224.0,619.0 225.0,618.1 226.0,617.3 227.0,616.5 228.0,615.7 229.0,614.9 230.0,614.2 231.0,613.4 232.0,612.7 233.0,612.1 234.0,611.4 235.0,610.8 236.0,610.3 237.0,609.8 238.0,609.3 239.0,608.9 240.0,608.4 241.0,608.0 242.0,607.6 243.0,607.2 244.0,606.8 245.0,606.5 246.0,606.1 247.0,605.8 248.0,605.5 249.0,605.2 250.0,605.0 251.0,604.7 252.0,604.5 253.0,604.3 254.0,604.1 255.0,603.9 256.0,603.8 257.0,603.6 258.0,603.4 259.0,603.3 260.0,603.2 261.0,603.0 262.0,602.9 263.0,602.7 264.0,602.6 265.0,602.4 266.0,602.3 267.0,602.1 268.0,601.9 269.0,601.8 270.0,601.6 271.0,601.4 272.0,601.2 273.0,601.1 274.0,600.9 275.0,600.7 276.0,600.5 277.0,600.3 278.0,600.1 279.0,599.9 280.0,599.7 281.0,599.5 282.0,599.3 283.0,599.0 284.0,598.8 285.0,598.5 286.0,598.2 287.0,597.8 288.0,597.4 289.0,597.0 290.0,596.5 291.0,596.0 292.0,595.5 293.0,595.0 294.0,594.4 295.0,593.9 296.0,593.3 297.0,592.7 298.0,592.2 299.0,591.6 300.0,591.1 301.0,590.5 302.0,590.0 303.0,589.4 304.0,588.8 305.0,588.2 306.0,587.7 307.0,587.1 308.0,586.5 309.0,585.9 310.0,585.3 311.0,584.8 312.0,584.2 313.0,583.7 314.0,583.2 315.0,582.7 316.0,582.2 317.0,581.7 318.0,581.3 319.0,580.8 320.0,580.3 321.0,579.9 322.0,579.4 323.0,579.0 324.0,578.6 325.0,578.2 326.0,577.8 327.0,577.4 328.0,577.0 329.0,576.7 330.0,576.3 331.0,576.0 332.0,575.7 333.0,575.3 334.0,575.0 335.0,574.7 336.0,574.4 337.0,574.1 338.0,573.8 339.0,573.6 340.0,573.3 341.0,573.1 342.0,572.9 343.0,572.7 344.0,572.5 345.0,572.3 346.0,572.2 347.0,572.0 348.0,571.8 349.0,571.7 350.0,571.5 351.0,571.4 352.0,571.3 353.0,571.2 354.0,571.1 355.0,570.9 356.0,570.9 357.0,570.8 358.0,570.7 359.0,570.6 360.0,570.6 361.0,570.5 362.0,570.4 363.0,570.4 364.0,570.3 365.0,570.3 366.0,570.2 367.0,570.2 368.0,570.1 369.0,570.0 370.0,570.0 371.0,569.9 372.0,569.8 373.0,569.7 374.0,569.6 375.0,569.5 376.0,569.4 377.0,569.3 378.0,569.2 379.0,569.0 380.0,568.9 381.0,568.7 382.0,568.6 383.0,568.4 384.0,568.1 385.0,567.9 386.0,567.6 387.0,567.2 388.0,566.9 389.0,566.5 390.0,566.1 391.0,565.6 392.0,565.2 393.0,564.8 394.0,564.3 395.0,563.8 396.0,563.4 397.0,562.9 398.0,562.4 399.0,562.0 400.0,561.5 401.0,561.1 402.0,560.6 403.0,560.1 404.0,559.5 405.0,559.0 406.0,558.5 407.0,557.9 408.0,557.3 409.0,556.8 410.0,556.3 411.0,555.7 412.0,555.2 413.0,554.7 414.0,554.2 415.0,553.7 416.0,553.3 417.0,552.8 418.0,552.4 419.0,552.1 420.0,551.7 421.0,551.4 422.0,551.0 423.0,550.7 424.0,550.4 425.0,550.0 426.0,549.7 427.0,549.4 428.0,549.1 429.0,548.8 430.0,548.5 431.0,548.2 432.0,547.8 433.0,547.5 434.0,547.2 435.0,546.8 436.0,546.4 437.0,546.1 438.0,545.7 439.0,545.3 440.0,544.9 441.0,544.5 442.0,544.1 443.0,543.7 444.0,543.3 445.0,542.9 446.0,542.6 447.0,542.2 448.0,541.8 449.0,541.5 450.0,541.2 451.0,540.9 452.0,540.6 453.0,540.4 454.0,540.1 455.0,539.9 456.0,539.6 457.0,539.4 458.0,539.2 459.0,539.0 460.0,538.8 461.0,538.5 462.0,538.3 463.0,538.1 464.0,538.0 465.0,537.8 466.0,537.6 467.0,537.4 468.0,537.2 469.0,537.0 470.0,536.8 471.0,536.7 472.0,536.5 473.0,536.3 474.0,536.1 475.0,536.0 476.0,535.8 477.0,535.7 478.0,535.5 479.0,535.4 480.0,535.2 481.0,535.0 482.0,534.9 483.0,534.7 484.0,534.6 485.0,534.4 486.0,534.2 487.0,534.1 488.0,533.9 489.0,533.7 490.0,533.5 491.0,533.3 492.0,533.1 493.0,532.9 494.0,532.8 495.0,532.6 496.0,532.4 497.0,532.2 498.0,532.1 499.0,531.9 500.0,531.7 501.0,531.6 502.0,531.5 503.0,531.4 504.0,531.3 505.0,531.2 506.0,531.1 507.0,531.0 508.0,530.9 509.0,530.8 510.0,530.7 511.0,530.6 512.0,530.6 513.0,530.5 514.0,530.4 515.0,530.3 516.0,530.3 517.0,530.2 518.0,530.1 519.0,530.1 520.0,530.0 521.0,529.9 522.0,529.8 523.0,529.7 524.0,529.7 525.0,529.6 526.0,529.5 527.0,529.4 528.0,529.3 529.0,529.3 530.0,529.2 531.0,529.2 532.0,529.1 533.0,529.1 534.0,529.1 535.0,529.1 536.0,529.3 537.0,529.4 538.0,529.7 539.0,530.0 540.0,530.4 541.0,530.8 542.0,531.2 543.0,531.7 544.0,532.1 545.0,532.6 546.0,533.0 547.0,533.6 548.0,534.1 549.0,534.8 550.0,535.5 551.0,536.2 552.0,537.0 553.0,537.8 554.0,538.7 555.0,539.6 556.0,540.5 557.0,541.5 558.0,542.4 559.0,543.4 560.0,544.4 561.0,545.4 562.0,546.5 563.0,547.6 564.0,548.7 565.0,549.9 566.0,551.2 567.0,552.5 568.0,553.8 569.0,555.2 570.0,556.7 571.0,558.2 572.0,559.8 573.0,561.5 574.0,563.3 575.0,565.3 576.0,567.3 577.0,569.4 578.0,571.5 579.0,573.6 580.0,575.8 581.0,577.9 582.0,580.1 583.0,582.1 584.0,584.3 585.0,586.4 586.0,588.6 587.0,590.9 588.0,593.1 589.0,595.3 590.0,597.5 591.0,599.6 592.0,601.7 593.0,603.7 594.0,605.6 595.0,607.4 596.0,609.2 597.0,610.9 598.0,612.7 599.0,614.3 600.0,615.9 601.0,617.5 602.0,619.1 603.0,620.6 604.0,622.1 605.0,623.5 606.0,624.9 607.0,626.3 608.0,627.7 609.0,629.1 610.0,630.4 611.0,631.7 612.0,632.9 613.0,634.1 614.0,635.3 615.0,636.5 616.0,637.6 617.0,638.6 618.0,639.6 619.0,640.7 620.0,641.7 621.0,642.7 622.0,643.7 623.0,644.7 624.0,645.6 625.0,646.4 626.0,647.1 627.0,647.8 628.0,648.3 629.0,648.8 630.0,649.2 631.0,649.7 632.0,650.1 633.0,650.5 634.0,650.8 635.0,651.0 636.0,651.2 637.0,651.2 638.0,651.1 639.0,651.0 640.0,650.7 641.0,650.5 642.0,650.1 643.0,649.8 644.0,649.4 645.0,649.0 646.0,648.7 647.0,648.3 648.0,647.8 649.0,647.3 650.0,646.8 651.0,646.2 652.0,645.6 653.0,645.0 654.0,644.3 655.0,643.7 656.0,643.0 657.0,642.3 658.0,641.6 659.0,640.9 660.0,640.2 661.0,639.5 662.0,638.8 663.0,638.0 664.0,637.3 665.0,636.6 666.0,635.8 667.0,635.1 668.0,634.3 669.0,633.5 670.0,632.6 671.0,631.8 672.0,631.0 673.0,630.1 674.0,629.3 675.0,628.4 676.0,627.6 677.0,626.7 678.0,625.9 679.0,624.9 680.0,624.0 681.0,623.0 682.0,622.0 683.0,621.0 684.0,620.0 685.0,619.0 686.0,618.0 687.0,617.1 688.0,616.3 689.0,615.5 690.0,614.8 691.0,614.1 692.0,613.5 693.0,613.0 694.0,612.4 695.0,611.9 696.0,611.5 697.0,611.0 698.0,610.6 699.0,610.2 700.0,609.8 701.0,609.4 702.0,609.0 703.0,608.6 704.0,608.2 705.0,607.7 706.0,607.3 707.0,606.9 708.0,606.4 709.0,606.0 710.0,605.5 711.0,605.1 712.0,604.6 713.0,604.1 714.0,603.7 715.0,603.2 716.0,602.7 717.0,602.3 718.0,601.8 719.0,601.3 720.0,600.8 721.0,600.4 722.0,599.9 723.0,599.4 724.0,598.9 725.0,598.5 726.0,598.0 727.0,597.5 728.0,597.0 729.0,596.6 730.0,596.1 731.0,595.6 732.0,595.2 733.0,594.7 734.0,594.3 735.0,593.8 736.0,593.4 737.0,592.9 738.0,592.5 739.0,592.0 740.0,591.6 741.0,591.1 742.0,590.6 743.0,590.2 744.0,589.7 745.0,589.2 746.0,588.8 747.0,588.3 748.0,587.8 749.0,587.3 750.0,586.8 751.0,586.3 752.0,585.8 753.0,585.2 754.0,584.7 755.0,584.1 756.0,583.6 757.0,583.0 758.0,582.4 759.0,581.8 760.0,581.1 761.0,580.5 762.0,579.9 763.0,579.2 764.0,578.6 765.0,577.9 766.0,577.3 767.0,576.6 768.0,576.0 769.0,575.4 770.0,574.7 771.0,574.1 772.0,573.5 773.0,572.9 774.0,572.3 775.0,571.7 776.0,571.1 777.0,570.5 778.0,569.9 779.0,569.4 780.0,568.8 781.0,568.2 782.0,567.6 783.0,567.0 784.0,566.4 785.0,565.9 786.0,565.3 787.0,564.8 788.0,564.2 789.0,563.7 790.0,563.1 791.0,562.6 792.0,562.1 793.0,561.6 794.0,561.1 795.0,560.6 796.0,560.1 797.0,559.6 798.0,559.0 799.0,558.5 800.0,557.9 801.0,557.3 802.0,556.6 803.0,555.9 804.0,555.1 805.0,554.4 806.0,553.6 807.0,552.9 808.0,552.2 809.0,551.5 810.0,551.0 811.0,550.4 812.0,550.0 813.0,549.6 814.0,549.1 815.0,548.7 816.0,548.4 817.0,548.0 818.0,547.6 819.0,547.3 820.0,546.9 821.0,546.6 822.0,546.3 823.0,546.0 824.0,545.8 825.0,545.5 826.0,545.2 827.0,545.0 828.0,544.8 829.0,544.6 830.0,544.3 831.0,544.1 832.0,543.9 833.0,543.6 834.0,543.4 835.0,543.2 836.0,543.0 837.0,542.8 838.0,542.6 839.0,542.5 840.0,542.3 841.0,542.2 842.0,542.1 843.0,542.0 844.0,542.0 845.0,542.0 846.0,542.0 847.0,542.0 848.0,542.1 849.0,542.2 850.0,542.2 851.0,542.3 852.0,542.4 853.0,542.5 854.0,542.6 855.0,542.7 856.0,542.8 857.0,542.9 858.0,543.0 859.0,543.1 860.0,543.3 861.0,543.4 862.0,543.5 863.0,543.6 864.0,543.7 865.0,543.8 866.0,543.9 867.0,544.1 868.0,544.2 869.0,544.4 870.0,544.5 871.0,544.6 872.0,544.8 873.0,544.9 874.0,545.1 875.0,545.2 876.0,545.4 877.0,545.6 878.0,545.7 879.0,545.9 880.0,546.1 881.0,546.2 882.0,546.4 883.0,546.6 884.0,546.7 885.0,546.9 886.0,547.1 887.0,547.3 888.0,547.5 889.0,547.7 890.0,547.9 891.0,548.1 892.0,548.3 893.0,548.5 894.0,548.7 895.0,549.0 896.0,549.2 897.0,549.5 898.0,549.7 899.0,550.0 900.0,550.3 901.0,550.6 902.0,551.0 903.0,551.3 904.0,551.7 905.0,552.1 906.0,552.5 907.0,552.9 908.0,553.3 909.0,553.7 910.0,554.2 911.0,554.6 912.0,555.0 913.0,555.5 914.0,555.9 915.0,556.4 916.0,556.8 917.0,557.2 918.0,557.7 919.0,558.1 920.0,558.5 921.0,558.9 922.0,559.4 923.0,559.8 924.0,560.2 925.0,560.6 926.0,561.0 927.0,561.4 928.0,561.8 929.0,562.2 930.0,562.6 931.0,563.0 932.0,563.4 933.0,563.8 934.0,564.2 935.0,564.6 936.0,565.0 937.0,565.4 938.0,565.8 939.0,566.2 940.0,566.6 941.0,567.0 942.0,567.4 943.0,567.8 944.0,568.2 945.0,568.5 946.0,568.9 947.0,569.3 948.0,569.6 949.0,570.0 950.0,570.4 951.0,570.7 952.0,571.1 953.0,571.5 954.0,571.8 955.0,572.2 956.0,572.5 957.0,572.9 958.0,573.2 959.0,573.6 960.0,573.9 961.0,574.2 962.0,574.6 963.0,574.9 964.0,575.3 965.0,575.6 966.0,576.0 967.0,576.3 968.0,576.7 969.0,577.0 970.0,577.4 971.0,577.7 972.0,578.1 973.0,578.4 974.0,578.8 975.0,579.1 976.0,579.5 977.0,579.8 978.0,580.2 979.0,580.6 980.0,581.0 981.0,581.3 982.0,581.7 983.0,582.1 984.0,582.5 985.0,582.8 986.0,583.2 987.0,583.6 988.0,583.9 989.0,584.3 990.0,584.7 991.0,585.0 992.0,585.4 993.0,585.7 994.0,586.0 995.0,586.4 996.0,586.7 997.0,587.0 998.0,587.3 999.0,587.6 1000.0,587.8 1001.0,588.1 1002.0,588.4 1003.0,588.7 1004.0,588.9 1005.0,589.2 1006.0,589.5 1007.0,589.8 1008.0,590.1 1009.0,590.4 1010.0,590.7 1011.0,590.9 1012.0,591.2 1013.0,591.4 1014.0,591.7 1015.0,591.9 1016.0,592.1 1017.0,592.3 1018.0,592.4 1019.0,592.6 1020.0,592.7 1021.0,592.7 1022.0,592.8 1023.0,592.8 1024.0,592.8 1025.0,592.8 1026.0,592.8 1027.0,592.8 1028.0,592.8 1029.0,592.8 1030.0,592.8 1031.0,592.8 1032.0,592.8 1033.0,592.8 1034.0,592.8 1035.0,592.8 1036.0,592.8 1037.0,592.8 1038.0,592.8 1039.0,592.8 1040.0,592.8 1041.0,592.8 1042.0,592.8 1043.0,592.8 1044.0,592.8 1045.0,592.8 1046.0,592.8 1047.0,592.8 1048.0,592.7 1049.0,592.6 1050.0,592.5 1051.0,592.3 1052.0,592.2 1053.0,592.0 1054.0,591.9 1055.0,591.7 1056.0,591.5 1057.0,591.3 1058.0,591.1 1059.0,590.9 1060.0,590.7 1061.0,590.6 1062.0,590.4 1063.0,590.2 1064.0,590.1 1065.0,590.0 1066.0,589.8 1067.0,589.7 1068.0,589.6 1069.0,589.4 1070.0,589.3 1071.0,589.2 1072.0,589.0 1073.0,588.9 1074.0,588.8 1075.0,588.6 1076.0,588.5 1077.0,588.4 1078.0,588.3 1079.0,588.2 1080.0,588.2 1081.0,588.1 1082.0,588.0 1083.0,588.0 1084.0,588.0 1085.0,588.0 1086.0,588.0 1087.0,588.1 1088.0,588.1 1089.0,588.2 1090.0,588.2 1091.0,588.3 1092.0,588.4 1093.0,588.5 1094.0,588.6 1095.0,588.7 1096.0,588.8 1097.0,588.9 1098.0,589.0 1099.0,589.2 1100.0,589.3 1101.0,589.4 1102.0,589.6 1103.0,589.7 1104.0,589.9 1105.0,590.0 1106.0,590.1 1107.0,590.3 1108.0,590.4 1109.0,590.6 1110.0,590.8 1111.0,591.0 1112.0,591.2 1113.0,591.4 1114.0,591.6 1115.0,591.8 1116.0,592.1 1117.0,592.3 1118.0,592.6 1119.0,592.9 1120.0,593.1 1121.0,593.4 1122.0,593.7 1123.0,593.9 1124.0,594.2 1125.0,594.5 1126.0,594.8 1127.0,595.0 1128.0,595.3 1129.0,595.6 1130.0,595.8 1131.0,596.1 1132.0,596.3 1133.0,596.6 1134.0,596.8 1135.0,597.0 1136.0,597.3 1137.0,597.5 1138.0,597.8 1139.0,598.0 1140.0,598.3 1141.0,598.5 1142.0,598.8 1143.0,599.0 1144.0,599.3 1145.0,599.6 1146.0,599.8 1147.0,600.1 1148.0,600.3 1149.0,600.6 1150.0,600.8 1151.0,601.0 1152.0,601.2 1153.0,601.5 1154.0,601.7 1155.0,601.8 1156.0,602.0 1157.0,602.2 1158.0,602.3 1159.0,602.5 1160.0,602.6 1161.0,602.7 1162.0,602.8 1163.0,602.9 1164.0,602.9 1165.0,603.0 1166.0,603.1 1167.0,603.1 1168.0,603.2 1169.0,603.3 1170.0,603.3 1171.0,603.4 1172.0,603.4 1173.0,603.5 1174.0,603.5 1175.0,603.6 1176.0,603.6 1177.0,603.7 1178.0,603.7 1179.0,603.8 1180.0,603.8 1181.0,603.8 1182.0,603.8 1183.0,603.9 1184.0,603.9 1185.0,603.9 1186.0,603.9 1187.0,603.9 1188.0,603.9 1189.0,603.8 1190.0,603.7 1191.0,603.5 1192.0,603.3 1193.0,603.1 1194.0,602.8 1195.0,602.5 1196.0,602.2 1197.0,601.8 1198.0,601.5 1199.0,601.1 1200.0,600.7 1201.0,600.3 1202.0,599.9 1203.0,599.6 1204.0,599.2 1205.0,598.8 1206.0,598.5 1207.0,598.1 1208.0,597.7 1209.0,597.2 1210.0,596.8 1211.0,596.4 1212.0,595.9 1213.0,595.4 1214.0,594.9 1215.0,594.4 1216.0,593.9 1217.0,593.3 1218.0,592.7 1219.0,592.2 1220.0,591.5 1221.0,590.9 1222.0,590.2 1223.0,589.5 1224.0,588.8 1225.0,588.1 1226.0,587.3 1227.0,586.5 1228.0,585.7 1229.0,584.9 1230.0,584.0 1231.0,583.1 1232.0,582.3 1232.4,581.9" fill="none" stroke="#ff0000" stroke-width="2" stroke-linejoin="round"/>
</g>
<g shape-rendering="auto" text-rendering="geometricPrecision">
<rect x="1612" y="14" width="3" height="1" fill="#fff" shape-rendering="crispEdges"/>
<text x="1617.4" y="17.9" font-size="9.3" font-family="Liberation Sans, Noto Sans CJK SC, sans-serif" fill="#fff" textLength="32.3" lengthAdjust="spacingAndGlyphs">1574.20</text>
<rect x="1612" y="47" width="3" height="1" fill="#fff" shape-rendering="crispEdges"/>
<text x="1617.4" y="50.9" font-size="9.3" font-family="Liberation Sans, Noto Sans CJK SC, sans-serif" fill="#fff" textLength="32.3" lengthAdjust="spacingAndGlyphs">1572.40</text>
<rect x="1612" y="80" width="3" height="1" fill="#fff" shape-rendering="crispEdges"/>
<text x="1617.4" y="83.9" font-size="9.3" font-family="Liberation Sans, Noto Sans CJK SC, sans-serif" fill="#fff" textLength="32.3" lengthAdjust="spacingAndGlyphs">1570.55</text>
<rect x="1612" y="113" width="3" height="1" fill="#fff" shape-rendering="crispEdges"/>
<text x="1617.4" y="116.9" font-size="9.3" font-family="Liberation Sans, Noto Sans CJK SC, sans-serif" fill="#fff" textLength="32.3" lengthAdjust="spacingAndGlyphs">1568.75</text>
<rect x="1612" y="146" width="3" height="1" fill="#fff" shape-rendering="crispEdges"/>
<text x="1617.4" y="149.9" font-size="9.3" font-family="Liberation Sans, Noto Sans CJK SC, sans-serif" fill="#fff" textLength="32.3" lengthAdjust="spacingAndGlyphs">1566.90</text>
<rect x="1612" y="179" width="3" height="1" fill="#fff" shape-rendering="crispEdges"/>
<text x="1617.4" y="182.9" font-size="9.3" font-family="Liberation Sans, Noto Sans CJK SC, sans-serif" fill="#fff" textLength="32.3" lengthAdjust="spacingAndGlyphs">1565.10</text>
<rect x="1612" y="212" width="3" height="1" fill="#fff" shape-rendering="crispEdges"/>
<text x="1617.4" y="215.9" font-size="9.3" font-family="Liberation Sans, Noto Sans CJK SC, sans-serif" fill="#fff" textLength="32.3" lengthAdjust="spacingAndGlyphs">1563.25</text>
<rect x="1612" y="245" width="3" height="1" fill="#fff" shape-rendering="crispEdges"/>
<text x="1617.4" y="248.9" font-size="9.3" font-family="Liberation Sans, Noto Sans CJK SC, sans-serif" fill="#fff" textLength="32.3" lengthAdjust="spacingAndGlyphs">1561.45</text>
<rect x="1612" y="278" width="3" height="1" fill="#fff" shape-rendering="crispEdges"/>
<text x="1617.4" y="281.9" font-size="9.3" font-family="Liberation Sans, Noto Sans CJK SC, sans-serif" fill="#fff" textLength="32.3" lengthAdjust="spacingAndGlyphs">1559.60</text>
<rect x="1612" y="311" width="3" height="1" fill="#fff" shape-rendering="crispEdges"/>
<text x="1617.4" y="314.9" font-size="9.3" font-family="Liberation Sans, Noto Sans CJK SC, sans-serif" fill="#fff" textLength="32.3" lengthAdjust="spacingAndGlyphs">1557.80</text>
<rect x="1612" y="344" width="3" height="1" fill="#fff" shape-rendering="crispEdges"/>
<text x="1617.4" y="347.9" font-size="9.3" font-family="Liberation Sans, Noto Sans CJK SC, sans-serif" fill="#fff" textLength="32.3" lengthAdjust="spacingAndGlyphs">1555.95</text>
<rect x="1612" y="377" width="3" height="1" fill="#fff" shape-rendering="crispEdges"/>
<text x="1617.4" y="380.9" font-size="9.3" font-family="Liberation Sans, Noto Sans CJK SC, sans-serif" fill="#fff" textLength="32.3" lengthAdjust="spacingAndGlyphs">1554.15</text>
<rect x="1612" y="410" width="3" height="1" fill="#fff" shape-rendering="crispEdges"/>
<text x="1617.4" y="413.9" font-size="9.3" font-family="Liberation Sans, Noto Sans CJK SC, sans-serif" fill="#fff" textLength="32.3" lengthAdjust="spacingAndGlyphs">1552.30</text>
<rect x="1612" y="443" width="3" height="1" fill="#fff" shape-rendering="crispEdges"/>
<text x="1617.4" y="446.9" font-size="9.3" font-family="Liberation Sans, Noto Sans CJK SC, sans-serif" fill="#fff" textLength="32.3" lengthAdjust="spacingAndGlyphs">1550.50</text>
<rect x="1612" y="476" width="3" height="1" fill="#fff" shape-rendering="crispEdges"/>
<text x="1617.4" y="479.9" font-size="9.3" font-family="Liberation Sans, Noto Sans CJK SC, sans-serif" fill="#fff" textLength="32.3" lengthAdjust="spacingAndGlyphs">1548.65</text>
<rect x="1612" y="509" width="3" height="1" fill="#fff" shape-rendering="crispEdges"/>
<text x="1617.4" y="512.9" font-size="9.3" font-family="Liberation Sans, Noto Sans CJK SC, sans-serif" fill="#fff" textLength="32.3" lengthAdjust="spacingAndGlyphs">1546.85</text>
<rect x="1613" y="34" width="38" height="11" fill="#ff0000" shape-rendering="crispEdges"/>
<text x="1617.4" y="43.0" font-size="9.3" font-family="Liberation Sans, Noto Sans CJK SC, sans-serif" fill="#000" textLength="32.3" lengthAdjust="spacingAndGlyphs">1572.79</text>
<rect x="1613" y="46" width="38" height="11" fill="#00ee76" shape-rendering="crispEdges"/>
<text x="1617.4" y="55.2" font-size="9.3" font-family="Liberation Sans, Noto Sans CJK SC, sans-serif" fill="#000" textLength="32.3" lengthAdjust="spacingAndGlyphs">1572.09</text>
<rect x="1613" y="82" width="38" height="11" fill="#ff0000" shape-rendering="crispEdges"/>
<text x="1617.4" y="90.4" font-size="9.3" font-family="Liberation Sans, Noto Sans CJK SC, sans-serif" fill="#000" textLength="32.3" lengthAdjust="spacingAndGlyphs">1570.16</text>
<rect x="1613" y="210" width="38" height="11" fill="#ff0000" shape-rendering="crispEdges"/>
<text x="1617.4" y="219.1" font-size="9.3" font-family="Liberation Sans, Noto Sans CJK SC, sans-serif" fill="#000" textLength="32.3" lengthAdjust="spacingAndGlyphs">1563.03</text>
<rect x="1613" y="285" width="38" height="11" fill="#ffffff" shape-rendering="crispEdges"/>
<text x="1617.4" y="294.0" font-size="9.3" font-family="Liberation Sans, Noto Sans CJK SC, sans-serif" fill="#000" textLength="32.3" lengthAdjust="spacingAndGlyphs">1558.94</text>
<rect x="1613" y="352" width="38" height="11" fill="#ffff00" shape-rendering="crispEdges"/>
<text x="1617.4" y="360.4" font-size="9.3" font-family="Liberation Sans, Noto Sans CJK SC, sans-serif" fill="#000" textLength="32.3" lengthAdjust="spacingAndGlyphs">1555.25</text>
<rect x="1613" y="367" width="38" height="11" fill="#00ee76" shape-rendering="crispEdges"/>
<text x="1617.4" y="376.3" font-size="9.3" font-family="Liberation Sans, Noto Sans CJK SC, sans-serif" fill="#000" textLength="32.3" lengthAdjust="spacingAndGlyphs">1554.38</text>
<rect x="1613" y="481" width="38" height="11" fill="#00ee76" shape-rendering="crispEdges"/>
<text x="1617.4" y="489.6" font-size="9.3" font-family="Liberation Sans, Noto Sans CJK SC, sans-serif" fill="#000" textLength="32.3" lengthAdjust="spacingAndGlyphs">1548.12</text>
<rect x="1612" y="516" width="2" height="1" fill="#fff" shape-rendering="crispEdges"/>
<text x="1615.6" y="524.9" font-size="9.3" font-family="Liberation Sans, Noto Sans CJK SC, sans-serif" fill="#fff" textLength="22.4" lengthAdjust="spacingAndGlyphs">1.708</text>
<rect x="1612" y="579" width="3" height="1" fill="#fff" shape-rendering="crispEdges"/>
<text x="1615.8" y="582.9" font-size="9.3" font-family="Liberation Sans, Noto Sans CJK SC, sans-serif" fill="#fff" textLength="18" lengthAdjust="spacingAndGlyphs">0.00</text>
<rect x="1612" y="744" width="2" height="1" fill="#fff" shape-rendering="crispEdges"/>
<text x="1615.3" y="742.4" font-size="9.3" font-family="Liberation Sans, Noto Sans CJK SC, sans-serif" fill="#fff" textLength="25.5" lengthAdjust="spacingAndGlyphs">-4.426</text>
<rect x="0" y="746" width="1" height="3" fill="#fff" shape-rendering="crispEdges"/>
<text x="-1.5" y="757.9" font-size="9.3" font-family="Liberation Sans, Noto Sans CJK SC, sans-serif" fill="#fff" textLength="50.5" lengthAdjust="spacingAndGlyphs">4 Feb 16:30</text>
<rect x="64" y="746" width="1" height="3" fill="#fff" shape-rendering="crispEdges"/>
<text x="62.5" y="757.9" font-size="9.3" font-family="Liberation Sans, Noto Sans CJK SC, sans-serif" fill="#fff" textLength="50.5" lengthAdjust="spacingAndGlyphs">4 Feb 18:30</text>
<rect x="128" y="746" width="1" height="3" fill="#fff" shape-rendering="crispEdges"/>
<text x="126.5" y="757.9" font-size="9.3" font-family="Liberation Sans, Noto Sans CJK SC, sans-serif" fill="#fff" textLength="50.5" lengthAdjust="spacingAndGlyphs">4 Feb 20:30</text>
<rect x="192" y="746" width="1" height="3" fill="#fff" shape-rendering="crispEdges"/>
<text x="190.5" y="757.9" font-size="9.3" font-family="Liberation Sans, Noto Sans CJK SC, sans-serif" fill="#fff" textLength="50.5" lengthAdjust="spacingAndGlyphs">4 Feb 22:30</text>
<rect x="256" y="746" width="1" height="3" fill="#fff" shape-rendering="crispEdges"/>
<text x="254.5" y="757.9" font-size="9.3" font-family="Liberation Sans, Noto Sans CJK SC, sans-serif" fill="#fff" textLength="50.5" lengthAdjust="spacingAndGlyphs">5 Feb 01:30</text>
<rect x="320" y="746" width="1" height="3" fill="#fff" shape-rendering="crispEdges"/>
<text x="318.5" y="757.9" font-size="9.3" font-family="Liberation Sans, Noto Sans CJK SC, sans-serif" fill="#fff" textLength="50.5" lengthAdjust="spacingAndGlyphs">5 Feb 03:30</text>
<rect x="384" y="746" width="1" height="3" fill="#fff" shape-rendering="crispEdges"/>
<text x="382.5" y="757.9" font-size="9.3" font-family="Liberation Sans, Noto Sans CJK SC, sans-serif" fill="#fff" textLength="50.5" lengthAdjust="spacingAndGlyphs">5 Feb 05:30</text>
<rect x="448" y="746" width="1" height="3" fill="#fff" shape-rendering="crispEdges"/>
<text x="446.5" y="757.9" font-size="9.3" font-family="Liberation Sans, Noto Sans CJK SC, sans-serif" fill="#fff" textLength="50.5" lengthAdjust="spacingAndGlyphs">5 Feb 07:30</text>
<rect x="512" y="746" width="1" height="3" fill="#fff" shape-rendering="crispEdges"/>
<text x="510.5" y="757.9" font-size="9.3" font-family="Liberation Sans, Noto Sans CJK SC, sans-serif" fill="#fff" textLength="50.5" lengthAdjust="spacingAndGlyphs">5 Feb 09:30</text>
<rect x="576" y="746" width="1" height="3" fill="#fff" shape-rendering="crispEdges"/>
<text x="574.5" y="757.9" font-size="9.3" font-family="Liberation Sans, Noto Sans CJK SC, sans-serif" fill="#fff" textLength="50.5" lengthAdjust="spacingAndGlyphs">5 Feb 11:30</text>
<rect x="640" y="746" width="1" height="3" fill="#fff" shape-rendering="crispEdges"/>
<text x="638.5" y="757.9" font-size="9.3" font-family="Liberation Sans, Noto Sans CJK SC, sans-serif" fill="#fff" textLength="50.5" lengthAdjust="spacingAndGlyphs">5 Feb 13:30</text>
<rect x="704" y="746" width="1" height="3" fill="#fff" shape-rendering="crispEdges"/>
<text x="702.5" y="757.9" font-size="9.3" font-family="Liberation Sans, Noto Sans CJK SC, sans-serif" fill="#fff" textLength="50.5" lengthAdjust="spacingAndGlyphs">5 Feb 15:30</text>
<rect x="768" y="746" width="1" height="3" fill="#fff" shape-rendering="crispEdges"/>
<text x="766.5" y="757.9" font-size="9.3" font-family="Liberation Sans, Noto Sans CJK SC, sans-serif" fill="#fff" textLength="50.5" lengthAdjust="spacingAndGlyphs">5 Feb 17:30</text>
<rect x="832" y="746" width="1" height="3" fill="#fff" shape-rendering="crispEdges"/>
<text x="830.5" y="757.9" font-size="9.3" font-family="Liberation Sans, Noto Sans CJK SC, sans-serif" fill="#fff" textLength="50.5" lengthAdjust="spacingAndGlyphs">5 Feb 19:30</text>
<rect x="896" y="746" width="1" height="3" fill="#fff" shape-rendering="crispEdges"/>
<text x="894.5" y="757.9" font-size="9.3" font-family="Liberation Sans, Noto Sans CJK SC, sans-serif" fill="#fff" textLength="50.5" lengthAdjust="spacingAndGlyphs">5 Feb 21:30</text>
<rect x="960" y="746" width="1" height="3" fill="#fff" shape-rendering="crispEdges"/>
<text x="958.5" y="757.9" font-size="9.3" font-family="Liberation Sans, Noto Sans CJK SC, sans-serif" fill="#fff" textLength="50.5" lengthAdjust="spacingAndGlyphs">5 Feb 23:30</text>
<rect x="1024" y="746" width="1" height="3" fill="#fff" shape-rendering="crispEdges"/>
<text x="1022.5" y="757.9" font-size="9.3" font-family="Liberation Sans, Noto Sans CJK SC, sans-serif" fill="#fff" textLength="50.5" lengthAdjust="spacingAndGlyphs">6 Feb 02:30</text>
<rect x="1088" y="746" width="1" height="3" fill="#fff" shape-rendering="crispEdges"/>
<text x="1086.5" y="757.9" font-size="9.3" font-family="Liberation Sans, Noto Sans CJK SC, sans-serif" fill="#fff" textLength="50.5" lengthAdjust="spacingAndGlyphs">6 Feb 04:30</text>
<rect x="1152" y="746" width="1" height="3" fill="#fff" shape-rendering="crispEdges"/>
<text x="1150.5" y="757.9" font-size="9.3" font-family="Liberation Sans, Noto Sans CJK SC, sans-serif" fill="#fff" textLength="50.5" lengthAdjust="spacingAndGlyphs">6 Feb 06:30</text>
<rect x="1216" y="746" width="1" height="3" fill="#fff" shape-rendering="crispEdges"/>
<text x="1214.5" y="757.9" font-size="9.3" font-family="Liberation Sans, Noto Sans CJK SC, sans-serif" fill="#fff" textLength="50.5" lengthAdjust="spacingAndGlyphs">6 Feb 08:30</text>
<text x="1158.9" y="50.8" font-size="12" font-family="Liberation Sans, Noto Sans CJK SC, sans-serif" fill="#ffff00" stroke="#ffff00" stroke-width="0.08">第三多空最后防线<tspan font-size="10.67">1572.7933</tspan></text>
<text x="1177" y="63.4" font-size="12" font-family="Liberation Sans, Noto Sans CJK SC, sans-serif" fill="#808080" stroke="#808080" stroke-width="0.08">支撑空目标<tspan font-size="10.67">1572.0867</tspan></text>
<text x="1020" y="98.2" font-size="12" font-family="Liberation Sans, Noto Sans CJK SC, sans-serif" fill="#808080" stroke="#808080" stroke-width="0.08">压力多目标<tspan font-size="10.67">1570.1600</tspan></text>
<text x="1181" y="497.3" font-size="12" font-family="Liberation Sans, Noto Sans CJK SC, sans-serif" fill="#808080" stroke="#808080" stroke-width="0.08">支撑空目标<tspan font-size="10.67">1548.1200</tspan></text>
<text x="1168.5" y="367.8" font-size="12" font-family="Liberation Sans, Noto Sans CJK SC, sans-serif" fill="#ffff00" stroke="#ffff00" stroke-width="0.08">神奇多空分界线<tspan font-size="10.67">1555.2500</tspan></text>
<text x="1219.6" y="228.9" font-size="13.3" font-family="Liberation Sans, Noto Sans CJK SC, sans-serif" fill="#808080">Text</text>
<text x="448.5" y="274.0" text-anchor="middle" font-size="16.3" font-family="Liberation Sans, Noto Sans CJK SC, sans-serif" font-weight="300" fill="#00ff00" stroke="#00ff00" stroke-width="0.3">空</text>
<text x="488.5" y="287.4" text-anchor="middle" font-size="16.3" font-family="Liberation Sans, Noto Sans CJK SC, sans-serif" font-weight="300" fill="#00ff00" stroke="#00ff00" stroke-width="0.3">空</text>
<text x="760.5" y="304.6" text-anchor="middle" font-size="16.3" font-family="Liberation Sans, Noto Sans CJK SC, sans-serif" font-weight="300" fill="#00ff00" stroke="#00ff00" stroke-width="0.3">空</text>
<text x="792.5" y="295.4" text-anchor="middle" font-size="16.3" font-family="Liberation Sans, Noto Sans CJK SC, sans-serif" font-weight="300" fill="#00ff00" stroke="#00ff00" stroke-width="0.3">空</text>
<text x="1040.5" y="319.4" text-anchor="middle" font-size="16.3" font-family="Liberation Sans, Noto Sans CJK SC, sans-serif" font-weight="300" fill="#00ff00" stroke="#00ff00" stroke-width="0.3">空</text>
<text x="1064.5" y="333.6" text-anchor="middle" font-size="16.3" font-family="Liberation Sans, Noto Sans CJK SC, sans-serif" font-weight="300" fill="#00ff00" stroke="#00ff00" stroke-width="0.3">空</text>
<text x="976.5" y="383.0" text-anchor="middle" font-size="17" font-family="Liberation Sans, Noto Sans CJK SC, sans-serif" font-weight="300" fill="#ff0000" stroke="#ff0000" stroke-width="0.2" font-style="italic">多</text>
<text x="1136.5" y="413.3" text-anchor="middle" font-size="17" font-family="Liberation Sans, Noto Sans CJK SC, sans-serif" font-weight="300" fill="#ff0000" stroke="#ff0000" stroke-width="0.2" font-style="italic">多</text>
<text x="1160.4" y="415.0" text-anchor="middle" font-size="17" font-family="Liberation Sans, Noto Sans CJK SC, sans-serif" font-weight="300" fill="#ff0000" stroke="#ff0000" stroke-width="0.2" font-style="italic">多</text>
<text x="10" y="-0.3" font-size="12" font-family="Liberation Sans, Noto Sans CJK SC, sans-serif" fill="#ffff00">多空分界线</text>
<text x="205" y="-0.3" font-size="12" font-family="Liberation Sans, Noto Sans CJK SC, sans-serif" fill="#ffff00">趋势判断看多做多为主</text>
<text x="616.7" y="34" font-size="43.5" font-weight="bold" font-family="Liberation Sans, sans-serif" fill="#ff0000" stroke="#ff0000" stroke-width="2.6" stroke-linejoin="round" letter-spacing="4.7">1558.9400</text>
</g>
</svg>
<div id="tabs"><div class="hl"></div><span style="left:-2px">D,M15</span><i style="left:45px"></i><span style="left:56px">XAUUSD,H1</span><i style="left:137px"></i>
<svg width="30" height="12" style="position:absolute;left:1622px;top:2px" viewBox="0 0 30 12"><polygon points="8,2.7 8,9.3 4.7,6" fill="#999"/><polygon points="23.8,2.7 23.8,9.3 27.1,6" fill="#999"/></svg></div>
<div id="hdr"><div class="hc" style="left:0px;width:203px"><span>时间</span></div><div class="hc" style="left:203px;width:130px"><span>类型</span></div><div class="hc" style="left:333px;width:101px"><span>手数</span></div><div class="hc" style="left:434px;width:130px"><span>交易品种</span></div><div class="hc" style="left:564px;width:145px"><span>价格</span></div><div class="hc" style="left:709px;width:144px"><span>止损</span></div><div class="hc" style="left:853px;width:146px"><span>止盈</span></div><div class="hc" style="left:999px;width:145px"><span>价格</span></div><div class="hc" style="left:1144px;width:145px"><span>手续费</span></div><div class="hc" style="left:1289px;width:145px"><span>库存费</span></div><div class="hc last" style="left:1434px;width:217px"><span>获利</span></div></div>
<div id="row"><div class="rc" style="left:0px;width:203px;padding-right:2.8px">2020.02.06 07:06:44</div><div class="rc" style="left:203px;width:130px;padding-right:2.8px">buy</div><div class="rc" style="left:333px;width:101px;padding-right:2.8px">3.00</div><div class="rc" style="left:434px;width:130px;padding-right:2.8px">xauusd</div><div class="rc" style="left:564px;width:145px;padding-right:2.8px">1552.74</div><div class="rc" style="left:709px;width:144px;padding-right:2.8px">1553.00</div><div class="rc" style="left:853px;width:146px;padding-right:2.8px">0.00</div><div class="rc" style="left:999px;width:145px;padding-right:2.8px">1558.94</div><div class="rc" style="left:1144px;width:145px;padding-right:2.8px">-30.00</div><div class="rc" style="left:1289px;width:145px;padding-right:2.8px">0.00</div><div class="rc last" style="left:1434px;width:217px;padding-right:21.3px">1 860.00</div><svg width="10" height="10" viewBox="0 0 10 10" style="position:absolute;left:1639px;top:6px"><path d="M1.3 1.3 L8.7 8.7 M8.7 1.3 L1.3 8.7" stroke="#a9a294" stroke-width="2.2" fill="none"/></svg></div>
<div id="foot"></div>
<svg id="arr" width="1651" height="841" viewBox="0 0 1651 841">
<polygon points="1067.3,492.4 1128,431.9 1124,427.1 1149.1,420 1139,443.7 1134.9,439.1" fill="#fb3a3e"/>
<polygon points="604.1,724.4 649.5,793.5 655,790.9 657,815.7 636.4,802 641.7,798.5" fill="#fb3a3e"/>
<polygon points="1533.1,731.9 1588,794.7 1592.5,790.7 1598.7,814.8 1576.5,804.2 1581.8,799.9" fill="#fb3a3e"/>
</svg>
</div>
</body></html>
